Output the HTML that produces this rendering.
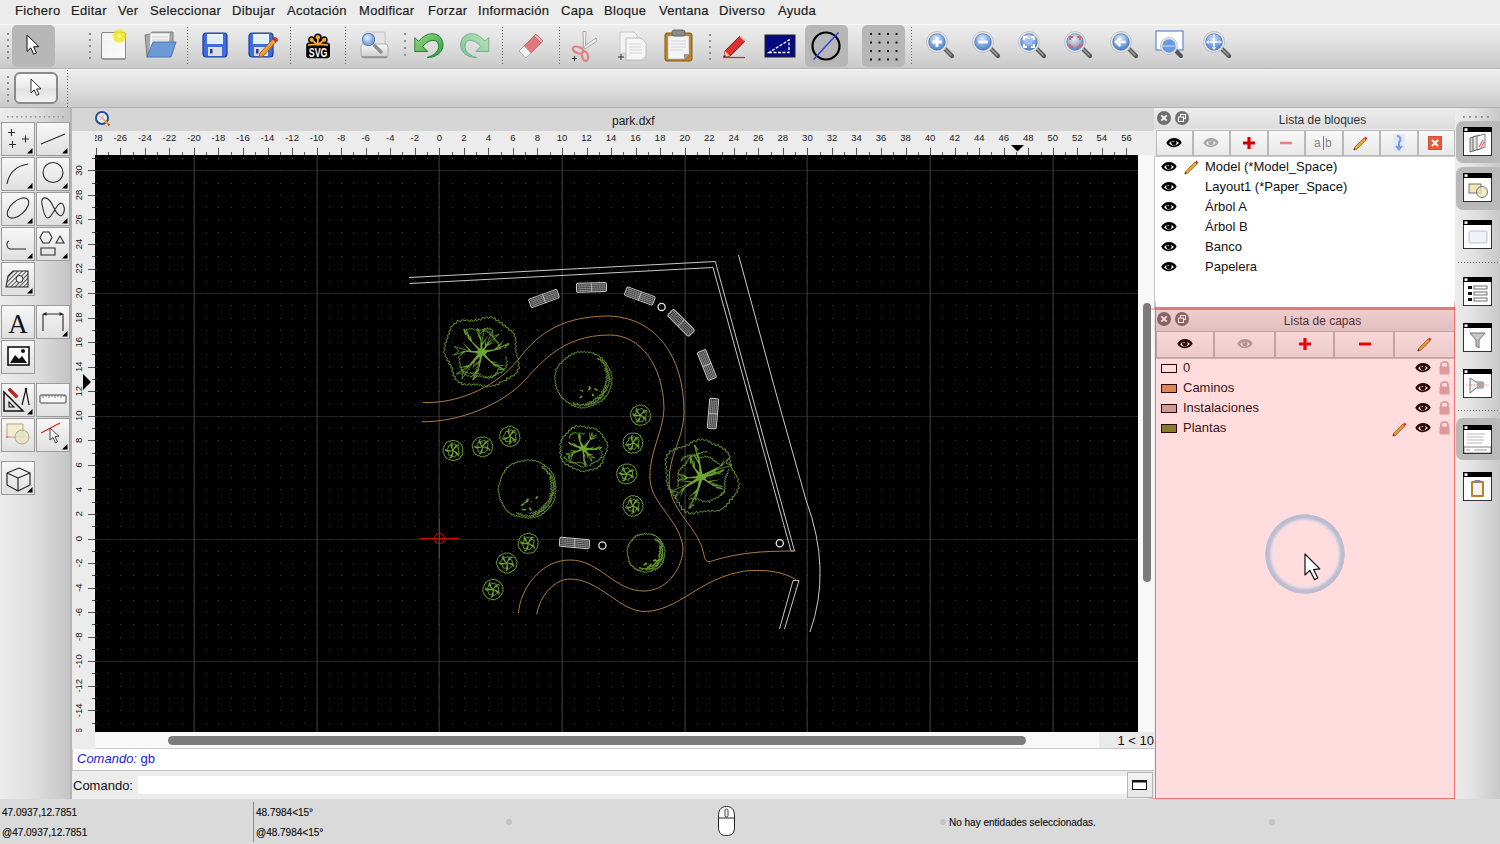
<!DOCTYPE html>
<html><head><meta charset="utf-8"><style>
*{margin:0;padding:0;box-sizing:border-box}
html,body{width:1500px;height:844px;overflow:hidden;background:#dadada;font-family:"Liberation Sans",sans-serif;color:#222}
.a{position:absolute}
svg{position:absolute;overflow:visible}
#menubar{left:0;top:0;width:1500px;height:24px;background:#ececec}
#menubar span{position:absolute;top:3px;font-size:13px;color:#1e1e1e;line-height:16px;-webkit-text-stroke:0.2px #1e1e1e;letter-spacing:0.3px}
#tb1{left:0;top:24px;width:1500px;height:45px;background:linear-gradient(#ededed,#e4e4e4 30%,#d2d2d2 80%,#c9c9c9);border-top:1px solid #f8f8f8;border-bottom:1px solid #b2b2b2}
#tb2{left:0;top:69px;width:1500px;height:39px;background:linear-gradient(#ededed,#e4e4e4 30%,#d2d2d2 80%,#c9c9c9);border-top:1px solid #f6f6f6;border-bottom:1px solid #b2b2b2}
#palette{left:0;top:108px;width:72px;height:691px;background:linear-gradient(90deg,#ececec,#dedede 50%,#c4c4c4);border-right:2px solid #b4b4b4}
.pb{position:absolute;width:34px;height:34px;border:1px solid #9c9c9c;background:linear-gradient(#f7f7f7,#ebebeb 50%,#e0e0e0)}
.tri{position:absolute;width:0;height:0;border-left:8px solid transparent;border-bottom:8px solid #000;right:3px;bottom:3px}
#mdi{left:72px;top:108px;width:1082px;height:691px;background:#ececec}
#mditl{left:72px;top:108px;width:1082px;height:24px;background:#d5d5d5;font-size:12px;line-height:23px;text-align:center;color:#1a1a1a}
#rulerT{left:72px;top:131px;width:1082px;height:24px;background:#ececec}
#rulerL{left:72px;top:131px;width:23px;height:601px;background:#ececec}
#canvas{left:95px;top:155px;width:1043px;height:577px;background:#000;overflow:hidden}
#vscroll{left:1138px;top:155px;width:16px;height:577px;background:#f8f8f8}
#hscroll{left:95px;top:732px;width:1004px;height:17px;background:#f8f8f8;border-bottom:1px solid #c8c8c8}
#ratio{left:1099px;top:732px;width:55px;height:17px;background:#eaeaea;border-bottom:1px solid #c8c8c8;font-size:13px;text-align:right;line-height:17px;color:#111;white-space:nowrap}
#cmdhist{left:72px;top:749px;width:1082px;height:22px;background:#fff;border-bottom:1px solid #c2c2c2;border-left:1px solid #d0d0d0;font-size:13px;line-height:20px;color:#1a1ad8;padding-left:4px}
#cmdrow{left:72px;top:771px;width:1082px;height:28px;background:#ececec;font-size:13px;line-height:27px;color:#111}
#dock{left:1154px;top:108px;width:301px;height:691px;background:#ececec}
#rtb{left:1455px;top:108px;width:45px;height:691px;background:linear-gradient(90deg,#ececec,#e2e2e2 40%,#c8c8c8)}
#status{left:0;top:799px;width:1500px;height:45px;background:#dadada}
.st{position:absolute;font-size:10px;color:#111;line-height:12px;white-space:nowrap;-webkit-text-stroke:0.15px #111}
.dtitle{position:absolute;height:21px;background:linear-gradient(#ededed,#dcdcdc);font-size:12px;line-height:24px;text-align:center;color:#222}
.cbtn{position:absolute;width:14px;height:14px;border-radius:50%;background:#6f6f6f}
.dtb{position:absolute;height:25px;border:1px solid #b9b9b9;background:linear-gradient(#f8f8f8,#e9e9e9)}
.li{position:absolute;font-size:13px;line-height:16px;color:#111;white-space:nowrap}
</style></head><body>
<div id="menubar" class="a">
<span style="left:15px">Fichero</span>
<span style="left:71px">Editar</span>
<span style="left:118px">Ver</span>
<span style="left:150px">Seleccionar</span>
<span style="left:232px">Dibujar</span>
<span style="left:287px">Acotación</span>
<span style="left:359px">Modificar</span>
<span style="left:428px">Forzar</span>
<span style="left:478px">Información</span>
<span style="left:561px">Capa</span>
<span style="left:604px">Bloque</span>
<span style="left:659px">Ventana</span>
<span style="left:719px">Diverso</span>
<span style="left:778px">Ayuda</span>
</div>
<div id="tb1" class="a"></div>
<div id="tb2" class="a"></div>
<svg class="a" style="left:7px;top:33px;" width="2" height="30" viewBox="0 0 2 30"><rect x="0" y="0" width="2" height="2" fill="#8e8e8e"/><rect x="0" y="6" width="2" height="2" fill="#8e8e8e"/><rect x="0" y="12" width="2" height="2" fill="#8e8e8e"/><rect x="0" y="18" width="2" height="2" fill="#8e8e8e"/><rect x="0" y="24" width="2" height="2" fill="#8e8e8e"/></svg>
<div class="a" style="left:12px;top:25px;width:43px;height:42px;border-radius:5px;background:#b7b7b7"></div>
<svg class="a" style="left:27px;top:35px;" width="14" height="22" viewBox="0 0 14 22"><path d="M0 0 L0 16.5 L3.8 12.8 L6.6 19.2 L9.4 18 L6.6 11.8 L11.8 11.6 Z" fill="#fff" stroke="#111" stroke-width="1" stroke-linejoin="round"/></svg>
<svg class="a" style="left:89px;top:33px;" width="2" height="30" viewBox="0 0 2 30"><rect x="0" y="0" width="2" height="2" fill="#8e8e8e"/><rect x="0" y="6" width="2" height="2" fill="#8e8e8e"/><rect x="0" y="12" width="2" height="2" fill="#8e8e8e"/><rect x="0" y="18" width="2" height="2" fill="#8e8e8e"/><rect x="0" y="24" width="2" height="2" fill="#8e8e8e"/></svg>
<svg class="a" style="left:100px;top:30px;" width="30" height="32" viewBox="0 0 30 32">
<defs><radialGradient id="glow"><stop offset="0" stop-color="#fffcc0"/><stop offset="0.3" stop-color="#f4ec30"/><stop offset="0.65" stop-color="#eee420" stop-opacity="0.8"/><stop offset="1" stop-color="#f2ea20" stop-opacity="0"/></radialGradient>
<linearGradient id="paper" x1="0" y1="0" x2="1" y2="1"><stop offset="0" stop-color="#f2f2f2"/><stop offset="1" stop-color="#fafafa"/></linearGradient></defs>
<rect x="1.5" y="2.5" width="24" height="27" rx="1.5" fill="url(#paper)" stroke="#8a8a8a" stroke-width="1"/>
<rect x="2" y="28" width="23" height="2" fill="#9a9a9a"/>
<circle cx="19.5" cy="6" r="8" fill="url(#glow)"/></svg>
<svg class="a" style="left:143px;top:30px;" width="34" height="30" viewBox="0 0 34 30">
<path d="M2 5 L8 4 L9 2 L30 2 L30 20 L4 27 Z" fill="#a8a8a8" stroke="#707070" stroke-width="0.8"/>
<path d="M7 3 L27 3 L26 20 L6 24 Z" fill="#f4f4f4" stroke="#999" stroke-width="0.6"/>
<path d="M9 7 L25 7 M9 10 L25 10 M9 13 L25 13" stroke="#c8c8c8" stroke-width="0.8"/>
<path d="M4 27 L10 12 L33 12 L28 27 Z" fill="#6d9bd8" stroke="#3f6fb0" stroke-width="0.9"/></svg>
<svg class="a" style="left:187px;top:27px;" width="2" height="39" viewBox="0 0 2 39"><rect x="0" y="0" width="1" height="1" fill="#6a6a6a"/><rect x="0" y="3" width="1" height="1" fill="#6a6a6a"/><rect x="0" y="6" width="1" height="1" fill="#6a6a6a"/><rect x="0" y="9" width="1" height="1" fill="#6a6a6a"/><rect x="0" y="12" width="1" height="1" fill="#6a6a6a"/><rect x="0" y="15" width="1" height="1" fill="#6a6a6a"/><rect x="0" y="18" width="1" height="1" fill="#6a6a6a"/><rect x="0" y="21" width="1" height="1" fill="#6a6a6a"/><rect x="0" y="24" width="1" height="1" fill="#6a6a6a"/><rect x="0" y="27" width="1" height="1" fill="#6a6a6a"/><rect x="0" y="30" width="1" height="1" fill="#6a6a6a"/><rect x="0" y="33" width="1" height="1" fill="#6a6a6a"/><rect x="0" y="36" width="1" height="1" fill="#6a6a6a"/></svg>
<svg class="a" style="left:202px;top:32px;" width="27" height="27" viewBox="0 0 27 27"><rect x="1" y="1" width="24" height="24" rx="3" fill="#3f6ee0" stroke="#1f3c9c" stroke-width="1.2"/>
<rect x="5" y="2" width="16" height="10" fill="#e6ecf8"/>
<path d="M6 3 L20 3 L20 11" fill="none" stroke="#ffffff" stroke-width="0.6"/>
<rect x="6" y="15" width="14" height="9" fill="#dcdcdc"/>
<rect x="8" y="17" width="2.5" height="4.5" fill="#1f3c9c"/></svg>
<svg class="a" style="left:248px;top:32px;" width="30" height="27" viewBox="0 0 30 27"><rect x="1" y="1" width="24" height="24" rx="3" fill="#3f6ee0" stroke="#1f3c9c" stroke-width="1.2"/>
<rect x="5" y="2" width="16" height="10" fill="#e6ecf8"/>
<path d="M6 3 L20 3 L20 11" fill="none" stroke="#ffffff" stroke-width="0.6"/>
<rect x="6" y="15" width="14" height="9" fill="#dcdcdc"/>
<rect x="8" y="17" width="2.5" height="4.5" fill="#1f3c9c"/><path d="M12 21 L25 7 L28 10 L15 24 L11 25 Z" fill="#f0a030" stroke="#b05010" stroke-width="0.9"/>
<path d="M25 7 L27 5 L30 8 L28 10 Z" fill="#e03030" stroke="#a01010" stroke-width="0.6"/></svg>
<svg class="a" style="left:290px;top:27px;" width="2" height="39" viewBox="0 0 2 39"><rect x="0" y="0" width="1" height="1" fill="#6a6a6a"/><rect x="0" y="3" width="1" height="1" fill="#6a6a6a"/><rect x="0" y="6" width="1" height="1" fill="#6a6a6a"/><rect x="0" y="9" width="1" height="1" fill="#6a6a6a"/><rect x="0" y="12" width="1" height="1" fill="#6a6a6a"/><rect x="0" y="15" width="1" height="1" fill="#6a6a6a"/><rect x="0" y="18" width="1" height="1" fill="#6a6a6a"/><rect x="0" y="21" width="1" height="1" fill="#6a6a6a"/><rect x="0" y="24" width="1" height="1" fill="#6a6a6a"/><rect x="0" y="27" width="1" height="1" fill="#6a6a6a"/><rect x="0" y="30" width="1" height="1" fill="#6a6a6a"/><rect x="0" y="33" width="1" height="1" fill="#6a6a6a"/><rect x="0" y="36" width="1" height="1" fill="#6a6a6a"/></svg>
<svg class="a" style="left:302px;top:30px;" width="34" height="32" viewBox="0 0 34 32">
<g fill="#000"><circle cx="15.9" cy="7.2" r="3.7"/><circle cx="9.6" cy="9.8" r="3.5"/><circle cx="22.2" cy="9.8" r="3.5"/></g>
<path d="M15.9 14 L15.9 7 M15.9 14 L9.6 9.8 M15.9 14 L22.2 9.8" stroke="#000" stroke-width="4.6"/>
<rect x="4.2" y="12.5" width="23.8" height="15.8" rx="3.2" fill="#000"/>
<g fill="#f6a832"><circle cx="15.9" cy="7.2" r="2.2"/><circle cx="9.6" cy="9.8" r="2.1"/><circle cx="22.2" cy="9.8" r="2.1"/></g>
<path d="M15.9 15 L15.9 7 M15.9 15 L9.6 9.8 M15.9 15 L22.2 9.8" stroke="#f6a832" stroke-width="1.8"/>
<path d="M6 15.3 C 10 14, 22 14, 26 15.3" stroke="#f6a832" stroke-width="1.7" fill="none"/>
<text x="16.1" y="26.6" text-anchor="middle" font-family="Liberation Sans" font-weight="bold" font-size="12.5" fill="#fff" textLength="18.6" lengthAdjust="spacingAndGlyphs">SVG</text></svg>
<svg class="a" style="left:345px;top:27px;" width="2" height="39" viewBox="0 0 2 39"><rect x="0" y="0" width="1" height="1" fill="#6a6a6a"/><rect x="0" y="3" width="1" height="1" fill="#6a6a6a"/><rect x="0" y="6" width="1" height="1" fill="#6a6a6a"/><rect x="0" y="9" width="1" height="1" fill="#6a6a6a"/><rect x="0" y="12" width="1" height="1" fill="#6a6a6a"/><rect x="0" y="15" width="1" height="1" fill="#6a6a6a"/><rect x="0" y="18" width="1" height="1" fill="#6a6a6a"/><rect x="0" y="21" width="1" height="1" fill="#6a6a6a"/><rect x="0" y="24" width="1" height="1" fill="#6a6a6a"/><rect x="0" y="27" width="1" height="1" fill="#6a6a6a"/><rect x="0" y="30" width="1" height="1" fill="#6a6a6a"/><rect x="0" y="33" width="1" height="1" fill="#6a6a6a"/><rect x="0" y="36" width="1" height="1" fill="#6a6a6a"/></svg>
<svg class="a" style="left:359px;top:30px;" width="31" height="31" viewBox="0 0 31 31">
<defs><linearGradient id="prn" x1="0" y1="0" x2="0" y2="1"><stop offset="0" stop-color="#fafafa"/><stop offset="1" stop-color="#c8c8c8"/></linearGradient>
<radialGradient id="lens" cx="0.4" cy="0.35"><stop offset="0" stop-color="#e8f0ff"/><stop offset="1" stop-color="#7fa6dc"/></radialGradient></defs>
<rect x="6" y="2" width="20" height="14" rx="1" fill="#e4e4e4" stroke="#b8b8b8" stroke-width="0.8"/>
<rect x="2" y="14" width="27" height="14" rx="3" fill="url(#prn)" stroke="#a8a8a8" stroke-width="0.9"/>
<path d="M3 27 L28 27" stroke="#8a8a8a" stroke-width="1.5"/>
<path d="M13 13 L22 22" stroke="#8c8c8c" stroke-width="3.2" stroke-linecap="round"/>
<circle cx="9.5" cy="9.5" r="6.2" fill="url(#lens)" stroke="#4a78c0" stroke-width="1.1"/>
<circle cx="9.5" cy="9.5" r="7.3" fill="none" stroke="#eaeaea" stroke-width="1"/></svg>
<svg class="a" style="left:404px;top:33px;" width="2" height="28" viewBox="0 0 2 28"><rect x="0" y="0" width="2" height="2" fill="#909090"/><rect x="0" y="7" width="2" height="2" fill="#909090"/><rect x="0" y="14" width="2" height="2" fill="#909090"/><rect x="0" y="21" width="2" height="2" fill="#909090"/></svg>
<svg class="a" style="left:410px;top:28px;" width="40" height="34" viewBox="0 0 40 34"><defs><linearGradient id="ug1" x1="0" y1="0" x2="1" y2="1"><stop offset="0" stop-color="#9ad880"/><stop offset="1" stop-color="#2e9e44"/></linearGradient></defs><path d="M4.8 9.6 L4.8 23.5 L17.8 23.5 L12.7 18.4 C 16 14.5, 20 12.2, 24 12.4 C 27.5 12.8, 29 16, 28.5 19.5 C 28 24, 23 28, 17 29.5 C 25 29.8, 33 25, 33 17 C 33 9, 27 5.5, 22 5.7 C 16 6, 12 9.5, 8.5 13.3 Z" fill="url(#ug1)" stroke="#177a2c" stroke-width="0.9" stroke-linejoin="round"/></svg>
<svg class="a" style="left:410px;top:28px;" width="85" height="34" viewBox="0 0 85 34"><g transform="translate(83.6,0) scale(-1,1)"><defs><linearGradient id="ug2" x1="0" y1="0" x2="1" y2="1"><stop offset="0" stop-color="#c0e4b8"/><stop offset="1" stop-color="#78c098"/></linearGradient></defs><path d="M4.8 9.6 L4.8 23.5 L17.8 23.5 L12.7 18.4 C 16 14.5, 20 12.2, 24 12.4 C 27.5 12.8, 29 16, 28.5 19.5 C 28 24, 23 28, 17 29.5 C 25 29.8, 33 25, 33 17 C 33 9, 27 5.5, 22 5.7 C 16 6, 12 9.5, 8.5 13.3 Z" fill="url(#ug2)" stroke="#6aae84" stroke-width="0.9" stroke-linejoin="round"/></g></svg>
<svg class="a" style="left:502px;top:27px;" width="2" height="39" viewBox="0 0 2 39"><rect x="0" y="0" width="1" height="1" fill="#6a6a6a"/><rect x="0" y="3" width="1" height="1" fill="#6a6a6a"/><rect x="0" y="6" width="1" height="1" fill="#6a6a6a"/><rect x="0" y="9" width="1" height="1" fill="#6a6a6a"/><rect x="0" y="12" width="1" height="1" fill="#6a6a6a"/><rect x="0" y="15" width="1" height="1" fill="#6a6a6a"/><rect x="0" y="18" width="1" height="1" fill="#6a6a6a"/><rect x="0" y="21" width="1" height="1" fill="#6a6a6a"/><rect x="0" y="24" width="1" height="1" fill="#6a6a6a"/><rect x="0" y="27" width="1" height="1" fill="#6a6a6a"/><rect x="0" y="30" width="1" height="1" fill="#6a6a6a"/><rect x="0" y="33" width="1" height="1" fill="#6a6a6a"/><rect x="0" y="36" width="1" height="1" fill="#6a6a6a"/></svg>
<svg class="a" style="left:516px;top:31px;" width="30" height="30" viewBox="0 0 30 30">
<ellipse cx="15" cy="26.5" rx="11" ry="1.6" fill="#d4d4d4"/>
<path d="M3 20 L18 5 L25 12 L10 27 Z" fill="#e07a7a" stroke="#c06060" stroke-width="0.8"/>
<path d="M3 20 L8 15 L15 22 L10 27 Z" fill="#f4f4f4" stroke="#a8a8a8" stroke-width="0.8"/>
<path d="M18 5 L20 3 L27 10 L25 12 Z" fill="#f0b0b0" stroke="#c06060" stroke-width="0.8"/></svg>
<svg class="a" style="left:559px;top:27px;" width="2" height="39" viewBox="0 0 2 39"><rect x="0" y="0" width="1" height="1" fill="#6a6a6a"/><rect x="0" y="3" width="1" height="1" fill="#6a6a6a"/><rect x="0" y="6" width="1" height="1" fill="#6a6a6a"/><rect x="0" y="9" width="1" height="1" fill="#6a6a6a"/><rect x="0" y="12" width="1" height="1" fill="#6a6a6a"/><rect x="0" y="15" width="1" height="1" fill="#6a6a6a"/><rect x="0" y="18" width="1" height="1" fill="#6a6a6a"/><rect x="0" y="21" width="1" height="1" fill="#6a6a6a"/><rect x="0" y="24" width="1" height="1" fill="#6a6a6a"/><rect x="0" y="27" width="1" height="1" fill="#6a6a6a"/><rect x="0" y="30" width="1" height="1" fill="#6a6a6a"/><rect x="0" y="33" width="1" height="1" fill="#6a6a6a"/><rect x="0" y="36" width="1" height="1" fill="#6a6a6a"/></svg>
<svg class="a" style="left:570px;top:30px;" width="32" height="32" viewBox="0 0 32 32">
<path d="M14 2 L13 18 M26 9 L15 18" stroke="#a8a8a8" stroke-width="0.8" fill="none"/>
<path d="M13 1.5 L16 1.5 L15.5 17 L13.5 18 Z" fill="#f0f0f0" stroke="#9a9a9a" stroke-width="0.8"/>
<path d="M26 8 L27 11 L15 19 L13.5 17 Z" fill="#f0f0f0" stroke="#9a9a9a" stroke-width="0.8"/>
<ellipse cx="8" cy="20" rx="5.5" ry="3" transform="rotate(20 8 20)" fill="none" stroke="#e08585" stroke-width="2.4"/>
<ellipse cx="15" cy="26" rx="3" ry="5" transform="rotate(-15 15 26)" fill="none" stroke="#e08585" stroke-width="2.4"/>
<path d="M2 28.5 L7 28.5 M4.5 26 L4.5 31" stroke="#333" stroke-width="1"/></svg>
<svg class="a" style="left:616px;top:29px;" width="34" height="34" viewBox="0 0 34 34">
<path d="M4 3 L18 3 L21 6 L21 24 L4 24 Z" fill="#f2f2f2" stroke="#c4c4c4" stroke-width="0.9"/>
<path d="M10 9 L25 9 L30 14 L30 31 L10 31 Z" fill="#f6f6f6" stroke="#b8b8b8" stroke-width="0.9"/>
<path d="M13 15 L26 15 M13 18 L26 18 M13 21 L26 21 M13 24 L26 24" stroke="#cfcfcf" stroke-width="0.8"/>
<path d="M25 31 L30 26 L30 31 Z" fill="#d0d0d0"/>
<path d="M2 28 L8 28 M5 25 L5 31" stroke="#333" stroke-width="1"/></svg>
<svg class="a" style="left:663px;top:28px;" width="32" height="34" viewBox="0 0 32 34">
<rect x="2" y="5" width="27" height="28" rx="2" fill="#b8822a" stroke="#8a5a14" stroke-width="1"/>
<path d="M5 8 L26 8 L26 26 L21 31 L5 31 Z" fill="#f4f4f4" stroke="#aaa" stroke-width="0.6"/>
<path d="M21 31 L26 26 L21 26 Z" fill="#9a9a9a"/>
<rect x="9" y="2" width="13" height="6" rx="2" fill="#8a8a8a" stroke="#5a5a5a" stroke-width="0.8"/>
<path d="M8 13 L23 13 M8 16 L23 16 M8 19 L23 19 M8 22 L20 22" stroke="#cfcfcf" stroke-width="0.9"/></svg>
<svg class="a" style="left:709px;top:34px;" width="2" height="30" viewBox="0 0 2 30"><rect x="0" y="0" width="2" height="2" fill="#909090"/><rect x="0" y="6" width="2" height="2" fill="#909090"/><rect x="0" y="12" width="2" height="2" fill="#909090"/><rect x="0" y="18" width="2" height="2" fill="#909090"/><rect x="0" y="24" width="2" height="2" fill="#909090"/></svg>
<svg class="a" style="left:721px;top:32px;" width="28" height="28" viewBox="0 0 28 28">
<path d="M4 19 L19 4 L24 9 L9 24 L3 25 Z" fill="#e03030" stroke="#801010" stroke-width="1"/>
<path d="M19 4 L24 9" stroke="#f0b0b0" stroke-width="1.5"/>
<path d="M4 19 L9 24 L3 25 Z" fill="#f4c890"/>
<path d="M3 25 L4.5 23.5" stroke="#222" stroke-width="1.5"/>
<path d="M2 25.5 L24 25.5" stroke="#e02020" stroke-width="1.2"/></svg>
<svg class="a" style="left:764px;top:34px;" width="32" height="24" viewBox="0 0 32 24">
<rect x="1" y="1" width="30" height="22" fill="#050a80" stroke="#222" stroke-width="1"/>
<path d="M5 18.5 L25 18.5 L25 6 Z" fill="none" stroke="#ffffff" stroke-width="1.3" stroke-dasharray="3 1.5"/></svg>
<div class="a" style="left:805px;top:25px;width:43px;height:42px;border-radius:5px;background:#b7b7b7"></div>
<svg class="a" style="left:808px;top:28px;" width="36" height="36" viewBox="0 0 36 36">
<circle cx="18" cy="18" r="13.5" fill="none" stroke="#000" stroke-width="2.2"/>
<path d="M5.5 31.5 L 30.5 4.5" stroke="#1a3ae8" stroke-width="1.2"/></svg>
<div class="a" style="left:862px;top:25px;width:43px;height:42px;border-radius:5px;background:#b7b7b7"></div>
<svg class="a" style="left:870px;top:33px;" width="30" height="30" viewBox="0 0 30 30"><rect x="0.0" y="0.0" width="2" height="2" fill="#111"/><rect x="0.0" y="8.5" width="2" height="2" fill="#111"/><rect x="0.0" y="17.0" width="2" height="2" fill="#111"/><rect x="0.0" y="25.5" width="2" height="2" fill="#111"/><rect x="8.5" y="0.0" width="2" height="2" fill="#111"/><rect x="8.5" y="8.5" width="2" height="2" fill="#111"/><rect x="8.5" y="17.0" width="2" height="2" fill="#111"/><rect x="8.5" y="25.5" width="2" height="2" fill="#111"/><rect x="17.0" y="0.0" width="2" height="2" fill="#111"/><rect x="17.0" y="8.5" width="2" height="2" fill="#111"/><rect x="17.0" y="17.0" width="2" height="2" fill="#111"/><rect x="17.0" y="25.5" width="2" height="2" fill="#111"/><rect x="25.5" y="0.0" width="2" height="2" fill="#111"/><rect x="25.5" y="8.5" width="2" height="2" fill="#111"/><rect x="25.5" y="17.0" width="2" height="2" fill="#111"/><rect x="25.5" y="25.5" width="2" height="2" fill="#111"/></svg>
<svg class="a" style="left:911px;top:27px;" width="2" height="39" viewBox="0 0 2 39"><rect x="0" y="0" width="1" height="1" fill="#6a6a6a"/><rect x="0" y="3" width="1" height="1" fill="#6a6a6a"/><rect x="0" y="6" width="1" height="1" fill="#6a6a6a"/><rect x="0" y="9" width="1" height="1" fill="#6a6a6a"/><rect x="0" y="12" width="1" height="1" fill="#6a6a6a"/><rect x="0" y="15" width="1" height="1" fill="#6a6a6a"/><rect x="0" y="18" width="1" height="1" fill="#6a6a6a"/><rect x="0" y="21" width="1" height="1" fill="#6a6a6a"/><rect x="0" y="24" width="1" height="1" fill="#6a6a6a"/><rect x="0" y="27" width="1" height="1" fill="#6a6a6a"/><rect x="0" y="30" width="1" height="1" fill="#6a6a6a"/><rect x="0" y="33" width="1" height="1" fill="#6a6a6a"/><rect x="0" y="36" width="1" height="1" fill="#6a6a6a"/></svg>
<svg class="a" style="left:926px;top:31px;" width="32" height="32" viewBox="0 0 32 32">
<defs><radialGradient id="zg937" cx="0.45" cy="0.3" r="0.7"><stop offset="0" stop-color="#e4eefc"/><stop offset="0.55" stop-color="#7eaae6"/><stop offset="1" stop-color="#4a7cc8"/></radialGradient></defs>
<ellipse cx="17" cy="28" rx="11" ry="2" fill="#d0d0d0" opacity="0.6"/>
<path d="M18 17 L26 25" stroke="#555" stroke-width="4.2" stroke-linecap="round"/>
<path d="M18.5 17.5 L25 24" stroke="#a0a0a0" stroke-width="1.6" stroke-linecap="round"/>
<circle cx="11" cy="11" r="10.5" fill="#e8e8e8" stroke="#b8b8b8" stroke-width="0.8"/>
<circle cx="11" cy="11" r="8.3" fill="url(#zg937)" stroke="#3c64a8" stroke-width="0.6"/>
<path d="M11 6 L11 16 M6 11 L16 11" stroke="#fff" stroke-width="2.8"/></svg>
<svg class="a" style="left:972px;top:31px;" width="32" height="32" viewBox="0 0 32 32">
<defs><radialGradient id="zg983" cx="0.45" cy="0.3" r="0.7"><stop offset="0" stop-color="#e4eefc"/><stop offset="0.55" stop-color="#7eaae6"/><stop offset="1" stop-color="#4a7cc8"/></radialGradient></defs>
<ellipse cx="17" cy="28" rx="11" ry="2" fill="#d0d0d0" opacity="0.6"/>
<path d="M18 17 L26 25" stroke="#555" stroke-width="4.2" stroke-linecap="round"/>
<path d="M18.5 17.5 L25 24" stroke="#a0a0a0" stroke-width="1.6" stroke-linecap="round"/>
<circle cx="11" cy="11" r="10.5" fill="#e8e8e8" stroke="#b8b8b8" stroke-width="0.8"/>
<circle cx="11" cy="11" r="8.3" fill="url(#zg983)" stroke="#3c64a8" stroke-width="0.6"/>
<path d="M6 11 L16 11" stroke="#fff" stroke-width="2.8"/></svg>
<svg class="a" style="left:1018px;top:31px;" width="32" height="32" viewBox="0 0 32 32">
<defs><radialGradient id="zg1029" cx="0.45" cy="0.3" r="0.7"><stop offset="0" stop-color="#e4eefc"/><stop offset="0.55" stop-color="#7eaae6"/><stop offset="1" stop-color="#4a7cc8"/></radialGradient></defs>
<ellipse cx="17" cy="28" rx="11" ry="2" fill="#d0d0d0" opacity="0.6"/>
<path d="M18 17 L26 25" stroke="#555" stroke-width="4.2" stroke-linecap="round"/>
<path d="M18.5 17.5 L25 24" stroke="#a0a0a0" stroke-width="1.6" stroke-linecap="round"/>
<circle cx="11" cy="11" r="10.5" fill="#e8e8e8" stroke="#b8b8b8" stroke-width="0.8"/>
<circle cx="11" cy="11" r="8.3" fill="url(#zg1029)" stroke="#3c64a8" stroke-width="0.6"/>
<path d="M6 9 L6 6 L9 6 M13 6 L16 6 L16 9 M16 13 L16 16 L13 16 M9 16 L6 16 L6 13" fill="none" stroke="#fff" stroke-width="2"/><rect x="8" y="8" width="6" height="6" fill="#9ec0f0"/></svg>
<svg class="a" style="left:1064px;top:31px;" width="32" height="32" viewBox="0 0 32 32">
<defs><radialGradient id="zg1075" cx="0.45" cy="0.3" r="0.7"><stop offset="0" stop-color="#e4eefc"/><stop offset="0.55" stop-color="#a8b8d0"/><stop offset="1" stop-color="#4a7cc8"/></radialGradient></defs>
<ellipse cx="17" cy="28" rx="11" ry="2" fill="#d0d0d0" opacity="0.6"/>
<path d="M18 17 L26 25" stroke="#555" stroke-width="4.2" stroke-linecap="round"/>
<path d="M18.5 17.5 L25 24" stroke="#a0a0a0" stroke-width="1.6" stroke-linecap="round"/>
<circle cx="11" cy="11" r="10.5" fill="#e8e8e8" stroke="#b8b8b8" stroke-width="0.8"/>
<circle cx="11" cy="11" r="8.3" fill="url(#zg1075)" stroke="#3c64a8" stroke-width="0.6"/>
<path d="M6 9 L6 6 L9 6 M13 6 L16 6 L16 9 M16 13 L16 16 L13 16 M9 16 L6 16 L6 13" fill="none" stroke="#e06060" stroke-width="2"/></svg>
<svg class="a" style="left:1110px;top:31px;" width="32" height="32" viewBox="0 0 32 32">
<defs><radialGradient id="zg1121" cx="0.45" cy="0.3" r="0.7"><stop offset="0" stop-color="#e4eefc"/><stop offset="0.55" stop-color="#7eaae6"/><stop offset="1" stop-color="#4a7cc8"/></radialGradient></defs>
<ellipse cx="17" cy="28" rx="11" ry="2" fill="#d0d0d0" opacity="0.6"/>
<path d="M18 17 L26 25" stroke="#555" stroke-width="4.2" stroke-linecap="round"/>
<path d="M18.5 17.5 L25 24" stroke="#a0a0a0" stroke-width="1.6" stroke-linecap="round"/>
<circle cx="11" cy="11" r="10.5" fill="#e8e8e8" stroke="#b8b8b8" stroke-width="0.8"/>
<circle cx="11" cy="11" r="8.3" fill="url(#zg1121)" stroke="#3c64a8" stroke-width="0.6"/>
<path d="M16 11 L9 11 M10.5 7 L6 11 L10.5 15" fill="none" stroke="#fff" stroke-width="2.6" stroke-linejoin="miter"/></svg>
<svg class="a" style="left:1155px;top:30px;" width="34" height="34" viewBox="0 0 34 34">
<rect x="1" y="1" width="27" height="19" fill="#fff" stroke="#5a8ad0" stroke-width="1.2"/>
<path d="M19 19 L26 26" stroke="#555" stroke-width="4" stroke-linecap="round"/>
<circle cx="14" cy="16" r="8.5" fill="#e8e8e8" stroke="#b8b8b8" stroke-width="0.8"/>
<circle cx="14" cy="16" r="6.8" fill="#6a9ae0"/>
<path d="M7.5 16 L20.5 16" stroke="#cfe0f8" stroke-width="1"/></svg>
<svg class="a" style="left:1203px;top:31px;" width="32" height="32" viewBox="0 0 32 32">
<defs><radialGradient id="zg1214" cx="0.45" cy="0.3" r="0.7"><stop offset="0" stop-color="#e4eefc"/><stop offset="0.55" stop-color="#7eaae6"/><stop offset="1" stop-color="#4a7cc8"/></radialGradient></defs>
<ellipse cx="17" cy="28" rx="11" ry="2" fill="#d0d0d0" opacity="0.6"/>
<path d="M18 17 L26 25" stroke="#555" stroke-width="4.2" stroke-linecap="round"/>
<path d="M18.5 17.5 L25 24" stroke="#a0a0a0" stroke-width="1.6" stroke-linecap="round"/>
<circle cx="11" cy="11" r="10.5" fill="#e8e8e8" stroke="#b8b8b8" stroke-width="0.8"/>
<circle cx="11" cy="11" r="8.3" fill="url(#zg1214)" stroke="#3c64a8" stroke-width="0.6"/>
<path d="M11 4 L11 18 M4 11 L18 11" stroke="#fff" stroke-width="1.6"/><path d="M11 2.5 L8.5 6 L13.5 6 Z M11 19.5 L8.5 16 L13.5 16 Z M2.5 11 L6 8.5 L6 13.5 Z M19.5 11 L16 8.5 L16 13.5 Z" fill="#fff" stroke="#5a8ad0" stroke-width="0.5"/></svg>
<svg class="a" style="left:7px;top:76px;" width="2" height="30" viewBox="0 0 2 30"><rect x="0" y="0" width="2" height="2" fill="#8e8e8e"/><rect x="0" y="6" width="2" height="2" fill="#8e8e8e"/><rect x="0" y="12" width="2" height="2" fill="#8e8e8e"/><rect x="0" y="18" width="2" height="2" fill="#8e8e8e"/><rect x="0" y="24" width="2" height="2" fill="#8e8e8e"/></svg>
<div class="a" style="left:14px;top:72px;width:44px;height:32px;border-radius:6px;border:2px solid #8a8a8a;background:linear-gradient(#fafafa,#ececec 45%,#e2e2e2 55%,#f2f2f2)"></div>
<svg class="a" style="left:31px;top:79px;" width="14" height="22" viewBox="0 0 14 22"><g transform="scale(0.85)"><path d="M0 0 L0 16.5 L3.8 12.8 L6.6 19.2 L9.4 18 L6.6 11.8 L11.8 11.6 Z" fill="#fff" stroke="#111" stroke-width="1" stroke-linejoin="round"/></g></svg>
<svg class="a" style="left:67px;top:70px;" width="2" height="37" viewBox="0 0 2 37"><rect x="0" y="0" width="1" height="1" fill="#6a6a6a"/><rect x="0" y="3" width="1" height="1" fill="#6a6a6a"/><rect x="0" y="6" width="1" height="1" fill="#6a6a6a"/><rect x="0" y="9" width="1" height="1" fill="#6a6a6a"/><rect x="0" y="12" width="1" height="1" fill="#6a6a6a"/><rect x="0" y="15" width="1" height="1" fill="#6a6a6a"/><rect x="0" y="18" width="1" height="1" fill="#6a6a6a"/><rect x="0" y="21" width="1" height="1" fill="#6a6a6a"/><rect x="0" y="24" width="1" height="1" fill="#6a6a6a"/><rect x="0" y="27" width="1" height="1" fill="#6a6a6a"/><rect x="0" y="30" width="1" height="1" fill="#6a6a6a"/><rect x="0" y="33" width="1" height="1" fill="#6a6a6a"/><rect x="0" y="36" width="1" height="1" fill="#6a6a6a"/></svg>
<div id="palette" class="a"></div>
<svg class="a" style="left:7px;top:116px;" width="60" height="2" viewBox="0 0 60 2"><rect x="0.0" y="0" width="1.6" height="1.6" fill="#9a9a9a"/><rect x="4.6" y="0" width="1.6" height="1.6" fill="#9a9a9a"/><rect x="9.2" y="0" width="1.6" height="1.6" fill="#9a9a9a"/><rect x="13.8" y="0" width="1.6" height="1.6" fill="#9a9a9a"/><rect x="18.4" y="0" width="1.6" height="1.6" fill="#9a9a9a"/><rect x="23.0" y="0" width="1.6" height="1.6" fill="#9a9a9a"/><rect x="27.6" y="0" width="1.6" height="1.6" fill="#9a9a9a"/><rect x="32.2" y="0" width="1.6" height="1.6" fill="#9a9a9a"/><rect x="36.8" y="0" width="1.6" height="1.6" fill="#9a9a9a"/><rect x="41.4" y="0" width="1.6" height="1.6" fill="#9a9a9a"/><rect x="46.0" y="0" width="1.6" height="1.6" fill="#9a9a9a"/><rect x="50.6" y="0" width="1.6" height="1.6" fill="#9a9a9a"/><rect x="55.2" y="0" width="1.6" height="1.6" fill="#9a9a9a"/></svg>
<div class="pb" style="left:1px;top:122px"></div>
<svg class="a" style="left:1px;top:122px;" width="34" height="34" viewBox="0 0 34 34"><path d="M7 10.5 L14 10.5 M10.5 7 L10.5 14 M21 17 L28 17 M24.5 13.5 L24.5 20.5 M8 22.5 L15 22.5 M11.5 19 L11.5 26" fill="none" stroke="#2a2a2a" stroke-width="1.1"/><path d="M31.5 26 L31.5 31.5 L26 31.5 Z" fill="#000"/></svg>
<div class="pb" style="left:36px;top:122px"></div>
<svg class="a" style="left:36px;top:122px;" width="34" height="34" viewBox="0 0 34 34"><path d="M5 22 L29 12" fill="none" stroke="#2a2a2a" stroke-width="1.1"/><path d="M31.5 26 L31.5 31.5 L26 31.5 Z" fill="#000"/></svg>
<div class="pb" style="left:1px;top:157px"></div>
<svg class="a" style="left:1px;top:157px;" width="34" height="34" viewBox="0 0 34 34"><path d="M6 27 C 8 16, 15 9, 27 7" fill="none" stroke="#2a2a2a" stroke-width="1.1"/><path d="M31.5 26 L31.5 31.5 L26 31.5 Z" fill="#000"/></svg>
<div class="pb" style="left:36px;top:157px"></div>
<svg class="a" style="left:36px;top:157px;" width="34" height="34" viewBox="0 0 34 34"><circle cx="17" cy="15.5" r="10" fill="none" stroke="#2a2a2a" stroke-width="1.1"/><path d="M31.5 26 L31.5 31.5 L26 31.5 Z" fill="#000"/></svg>
<div class="pb" style="left:1px;top:192px"></div>
<svg class="a" style="left:1px;top:192px;" width="34" height="34" viewBox="0 0 34 34"><ellipse cx="17" cy="16" rx="13" ry="7" transform="rotate(-42 17 16)" fill="none" stroke="#2a2a2a" stroke-width="1.1"/><path d="M31.5 26 L31.5 31.5 L26 31.5 Z" fill="#000"/></svg>
<div class="pb" style="left:36px;top:192px"></div>
<svg class="a" style="left:36px;top:192px;" width="34" height="34" viewBox="0 0 34 34"><path d="M6 12 C 4 4, 12 3, 17 14 C 21 23, 25 26, 27 22 C 30 17, 27 7, 22 13 C 18 18, 15 26, 12 26 C 9 26, 7 18, 6 12 Z" fill="none" stroke="#2a2a2a" stroke-width="1.1"/><path d="M31.5 26 L31.5 31.5 L26 31.5 Z" fill="#000"/></svg>
<div class="pb" style="left:1px;top:227px"></div>
<svg class="a" style="left:1px;top:227px;" width="34" height="34" viewBox="0 0 34 34"><path d="M8 14 C 5 14, 5 22, 10 22 L 25 22" fill="none" stroke="#2a2a2a" stroke-width="1.1"/><path d="M31.5 26 L31.5 31.5 L26 31.5 Z" fill="#000"/></svg>
<div class="pb" style="left:36px;top:227px"></div>
<svg class="a" style="left:36px;top:227px;" width="34" height="34" viewBox="0 0 34 34"><path d="M7 5 L13 5 L16 10.5 L13 16 L7 16 L4 10.5 Z M20 16 L24 9 L28 16 Z M5 21 L19 21 L19 28 L5 28 Z" fill="none" stroke="#2a2a2a" stroke-width="1.1"/><path d="M31.5 26 L31.5 31.5 L26 31.5 Z" fill="#000"/></svg>
<div class="pb" style="left:1px;top:262px"></div>
<svg class="a" style="left:1px;top:262px;" width="34" height="34" viewBox="0 0 34 34"><defs><pattern id="hp" width="3" height="3" patternUnits="userSpaceOnUse" patternTransform="rotate(45)"><rect width="1" height="3" fill="#555"/></pattern></defs>
<path d="M5 25 L7 14 L12 9 L27 9 L27 25 Z" fill="url(#hp)" stroke="#2a2a2a" stroke-width="1.1"/>
<circle cx="18.5" cy="17" r="3.5" fill="#f0f0f0" stroke="#2a2a2a" stroke-width="1"/><path d="M31.5 26 L31.5 31.5 L26 31.5 Z" fill="#000"/></svg>
<div class="pb" style="left:1px;top:305px"></div>
<svg class="a" style="left:1px;top:305px;" width="34" height="34" viewBox="0 0 34 34"><text x="17" y="28" text-anchor="middle" font-family="Liberation Serif" font-size="27" fill="#111">A</text></svg>
<div class="pb" style="left:36px;top:305px"></div>
<svg class="a" style="left:36px;top:305px;" width="34" height="34" viewBox="0 0 34 34"><path d="M7 9 L7 26 M27 9 L27 26 M7 9 L27 9" fill="none" stroke="#2a2a2a" stroke-width="1.1"/><path d="M7 9 L10.5 7 L10.5 11 Z M27 9 L23.5 7 L23.5 11 Z" fill="#222"/><path d="M31.5 26 L31.5 31.5 L26 31.5 Z" fill="#000"/></svg>
<div class="pb" style="left:1px;top:340px"></div>
<svg class="a" style="left:1px;top:340px;" width="34" height="34" viewBox="0 0 34 34"><rect x="7" y="7" width="21" height="18" fill="#fff" stroke="#111" stroke-width="1.6"/><path d="M9 23 L14 15 L18 19 L21 16 L26 23 Z" fill="#111"/><circle cx="22" cy="11" r="2" fill="#111"/></svg>
<div class="pb" style="left:1px;top:383px"></div>
<svg class="a" style="left:1px;top:383px;" width="34" height="34" viewBox="0 0 34 34"><path d="M3 28 L22 28 L3 9 Z" fill="none" stroke="#111" stroke-width="1.5"/>
<path d="M8 24 L13 24 L8 19 Z" fill="none" stroke="#111" stroke-width="1.1"/>
<path d="M9 5 L17 13 L15 15 L7 7 Z" fill="#d02020" stroke="#700" stroke-width="0.6"/>
<path d="M25 6 L21 22 M25 6 L28 22" stroke="#111" stroke-width="1.2" fill="none"/><circle cx="25" cy="6" r="1.3" fill="#111"/><path d="M31.5 26 L31.5 31.5 L26 31.5 Z" fill="#000"/></svg>
<div class="pb" style="left:36px;top:383px"></div>
<svg class="a" style="left:36px;top:383px;" width="34" height="34" viewBox="0 0 34 34"><rect x="4" y="12" width="26" height="8" rx="1" fill="#fafafa" stroke="#444" stroke-width="1"/><path d="M7 12 L7 15 M10 12 L10 14 M13 12 L13 15 M16 12 L16 14 M19 12 L19 15 M22 12 L22 14 M25 12 L25 15 M28 12 L28 14" stroke="#444" stroke-width="0.7"/></svg>
<div class="pb" style="left:1px;top:418px"></div>
<svg class="a" style="left:1px;top:418px;" width="34" height="34" viewBox="0 0 34 34"><rect x="6" y="6" width="16" height="13" fill="#f2ecd0" stroke="#b0a888" stroke-width="1"/><circle cx="21" cy="19" r="7" fill="#eae3c0" fill-opacity="0.8" stroke="#b0a888" stroke-width="1"/><circle cx="6" cy="19" r="1.3" fill="#f08080"/></svg>
<div class="pb" style="left:36px;top:418px"></div>
<svg class="a" style="left:36px;top:418px;" width="34" height="34" viewBox="0 0 34 34"><path d="M5 15 L24 5" stroke="#e02020" stroke-width="1.3"/><path d="M14 10 L14 22 L17 19.5 L19.5 25 L21.5 24 L19 18.6 L23 18.3 Z" fill="#f4f4f4" stroke="#333" stroke-width="0.9"/><path d="M31.5 26 L31.5 31.5 L26 31.5 Z" fill="#000"/></svg>
<div class="pb" style="left:1px;top:461px"></div>
<svg class="a" style="left:1px;top:461px;" width="34" height="34" viewBox="0 0 34 34"><path d="M6 12 L18 7 L29 12 L29 24 L17 30 L6 24 Z M6 12 L17 17 L29 12 M17 17 L17 30" fill="none" stroke="#2a2a2a" stroke-width="1.2" stroke-linejoin="round"/><path d="M31.5 26 L31.5 31.5 L26 31.5 Z" fill="#000"/></svg>
<div id="mdi" class="a"></div>
<div id="mditl" class="a"><span style="position:absolute;left:540px;top:1.5px">park.dxf</span></div>
<svg class="a" style="left:95px;top:111px;" width="16" height="16" viewBox="0 0 16 16"><circle cx="7" cy="7" r="6" fill="#eef2f8" stroke="#2a4a9a" stroke-width="2"/>
<path d="M4 5 L10 9 M5 9 L9 4" stroke="#c05050" stroke-width="0.6"/>
<path d="M8 8 L13 13" stroke="#f0b020" stroke-width="2"/><path d="M13 13 L14.5 14.5" stroke="#d04040" stroke-width="2"/></svg>
<div id="rulerT" class="a"></div>
<div id="rulerL" class="a"></div>
<svg class="a" style="left:95px;top:131px;overflow:hidden" width="1043" height="24" viewBox="0 0 1043 24"><rect x="1" y="17" width="1" height="7" fill="#555"/><rect x="13" y="21" width="1" height="3" fill="#555"/><rect x="25" y="17" width="1" height="7" fill="#555"/><rect x="38" y="21" width="1" height="3" fill="#555"/><rect x="50" y="17" width="1" height="7" fill="#555"/><rect x="62" y="21" width="1" height="3" fill="#555"/><rect x="74" y="17" width="1" height="7" fill="#555"/><rect x="87" y="21" width="1" height="3" fill="#555"/><rect x="99" y="17" width="1" height="7" fill="#555"/><rect x="111" y="21" width="1" height="3" fill="#555"/><rect x="123" y="17" width="1" height="7" fill="#555"/><rect x="136" y="21" width="1" height="3" fill="#555"/><rect x="148" y="17" width="1" height="7" fill="#555"/><rect x="160" y="21" width="1" height="3" fill="#555"/><rect x="173" y="17" width="1" height="7" fill="#555"/><rect x="185" y="21" width="1" height="3" fill="#555"/><rect x="197" y="17" width="1" height="7" fill="#555"/><rect x="209" y="21" width="1" height="3" fill="#555"/><rect x="222" y="17" width="1" height="7" fill="#555"/><rect x="234" y="21" width="1" height="3" fill="#555"/><rect x="246" y="17" width="1" height="7" fill="#555"/><rect x="258" y="21" width="1" height="3" fill="#555"/><rect x="271" y="17" width="1" height="7" fill="#555"/><rect x="283" y="21" width="1" height="3" fill="#555"/><rect x="295" y="17" width="1" height="7" fill="#555"/><rect x="307" y="21" width="1" height="3" fill="#555"/><rect x="320" y="17" width="1" height="7" fill="#555"/><rect x="332" y="21" width="1" height="3" fill="#555"/><rect x="344" y="17" width="1" height="7" fill="#555"/><rect x="357" y="21" width="1" height="3" fill="#555"/><rect x="369" y="17" width="1" height="7" fill="#555"/><rect x="381" y="21" width="1" height="3" fill="#555"/><rect x="393" y="17" width="1" height="7" fill="#555"/><rect x="406" y="21" width="1" height="3" fill="#555"/><rect x="418" y="17" width="1" height="7" fill="#555"/><rect x="430" y="21" width="1" height="3" fill="#555"/><rect x="442" y="17" width="1" height="7" fill="#555"/><rect x="455" y="21" width="1" height="3" fill="#555"/><rect x="467" y="17" width="1" height="7" fill="#555"/><rect x="479" y="21" width="1" height="3" fill="#555"/><rect x="492" y="17" width="1" height="7" fill="#555"/><rect x="504" y="21" width="1" height="3" fill="#555"/><rect x="516" y="17" width="1" height="7" fill="#555"/><rect x="528" y="21" width="1" height="3" fill="#555"/><rect x="541" y="17" width="1" height="7" fill="#555"/><rect x="553" y="21" width="1" height="3" fill="#555"/><rect x="565" y="17" width="1" height="7" fill="#555"/><rect x="577" y="21" width="1" height="3" fill="#555"/><rect x="590" y="17" width="1" height="7" fill="#555"/><rect x="602" y="21" width="1" height="3" fill="#555"/><rect x="614" y="17" width="1" height="7" fill="#555"/><rect x="627" y="21" width="1" height="3" fill="#555"/><rect x="639" y="17" width="1" height="7" fill="#555"/><rect x="651" y="21" width="1" height="3" fill="#555"/><rect x="663" y="17" width="1" height="7" fill="#555"/><rect x="676" y="21" width="1" height="3" fill="#555"/><rect x="688" y="17" width="1" height="7" fill="#555"/><rect x="700" y="21" width="1" height="3" fill="#555"/><rect x="712" y="17" width="1" height="7" fill="#555"/><rect x="725" y="21" width="1" height="3" fill="#555"/><rect x="737" y="17" width="1" height="7" fill="#555"/><rect x="749" y="21" width="1" height="3" fill="#555"/><rect x="761" y="17" width="1" height="7" fill="#555"/><rect x="774" y="21" width="1" height="3" fill="#555"/><rect x="786" y="17" width="1" height="7" fill="#555"/><rect x="798" y="21" width="1" height="3" fill="#555"/><rect x="811" y="17" width="1" height="7" fill="#555"/><rect x="823" y="21" width="1" height="3" fill="#555"/><rect x="835" y="17" width="1" height="7" fill="#555"/><rect x="847" y="21" width="1" height="3" fill="#555"/><rect x="860" y="17" width="1" height="7" fill="#555"/><rect x="872" y="21" width="1" height="3" fill="#555"/><rect x="884" y="17" width="1" height="7" fill="#555"/><rect x="896" y="21" width="1" height="3" fill="#555"/><rect x="909" y="17" width="1" height="7" fill="#555"/><rect x="921" y="21" width="1" height="3" fill="#555"/><rect x="933" y="17" width="1" height="7" fill="#555"/><rect x="946" y="21" width="1" height="3" fill="#555"/><rect x="958" y="17" width="1" height="7" fill="#555"/><rect x="970" y="21" width="1" height="3" fill="#555"/><rect x="982" y="17" width="1" height="7" fill="#555"/><rect x="995" y="21" width="1" height="3" fill="#555"/><rect x="1007" y="17" width="1" height="7" fill="#555"/><rect x="1019" y="21" width="1" height="3" fill="#555"/><rect x="1031" y="17" width="1" height="7" fill="#555"/><g font-family="Liberation Sans" font-size="9.5" fill="#1a1a1a"><text x="0.74" y="10" text-anchor="middle">-28</text><text x="25.28" y="10" text-anchor="middle">-26</text><text x="49.82" y="10" text-anchor="middle">-24</text><text x="74.36" y="10" text-anchor="middle">-22</text><text x="98.90" y="10" text-anchor="middle">-20</text><text x="123.44" y="10" text-anchor="middle">-18</text><text x="147.98" y="10" text-anchor="middle">-16</text><text x="172.52" y="10" text-anchor="middle">-14</text><text x="197.06" y="10" text-anchor="middle">-12</text><text x="221.60" y="10" text-anchor="middle">-10</text><text x="246.14" y="10" text-anchor="middle">-8</text><text x="270.68" y="10" text-anchor="middle">-6</text><text x="295.22" y="10" text-anchor="middle">-4</text><text x="319.76" y="10" text-anchor="middle">-2</text><text x="344.30" y="10" text-anchor="middle">0</text><text x="368.84" y="10" text-anchor="middle">2</text><text x="393.38" y="10" text-anchor="middle">4</text><text x="417.92" y="10" text-anchor="middle">6</text><text x="442.46" y="10" text-anchor="middle">8</text><text x="467.00" y="10" text-anchor="middle">10</text><text x="491.54" y="10" text-anchor="middle">12</text><text x="516.08" y="10" text-anchor="middle">14</text><text x="540.62" y="10" text-anchor="middle">16</text><text x="565.16" y="10" text-anchor="middle">18</text><text x="589.70" y="10" text-anchor="middle">20</text><text x="614.24" y="10" text-anchor="middle">22</text><text x="638.78" y="10" text-anchor="middle">24</text><text x="663.32" y="10" text-anchor="middle">26</text><text x="687.86" y="10" text-anchor="middle">28</text><text x="712.40" y="10" text-anchor="middle">30</text><text x="736.94" y="10" text-anchor="middle">32</text><text x="761.48" y="10" text-anchor="middle">34</text><text x="786.02" y="10" text-anchor="middle">36</text><text x="810.56" y="10" text-anchor="middle">38</text><text x="835.10" y="10" text-anchor="middle">40</text><text x="859.64" y="10" text-anchor="middle">42</text><text x="884.18" y="10" text-anchor="middle">44</text><text x="908.72" y="10" text-anchor="middle">46</text><text x="933.26" y="10" text-anchor="middle">48</text><text x="957.80" y="10" text-anchor="middle">50</text><text x="982.34" y="10" text-anchor="middle">52</text><text x="1006.88" y="10" text-anchor="middle">54</text><text x="1031.42" y="10" text-anchor="middle">56</text></g></svg>
<svg class="a" style="left:1011px;top:145px;" width="14" height="8" viewBox="0 0 14 8"><path d="M0 0 L13 0 L6.5 6.5 Z" fill="#000"/></svg>
<svg class="a" style="left:72px;top:131px;overflow:hidden" width="23" height="601" viewBox="0 0 23 601"><rect x="16" y="604" width="7" height="1" fill="#555"/><rect x="20" y="592" width="3" height="1" fill="#555"/><rect x="16" y="579" width="7" height="1" fill="#555"/><rect x="20" y="567" width="3" height="1" fill="#555"/><rect x="16" y="555" width="7" height="1" fill="#555"/><rect x="20" y="542" width="3" height="1" fill="#555"/><rect x="16" y="530" width="7" height="1" fill="#555"/><rect x="20" y="518" width="3" height="1" fill="#555"/><rect x="16" y="506" width="7" height="1" fill="#555"/><rect x="20" y="493" width="3" height="1" fill="#555"/><rect x="16" y="481" width="7" height="1" fill="#555"/><rect x="20" y="469" width="3" height="1" fill="#555"/><rect x="16" y="457" width="7" height="1" fill="#555"/><rect x="20" y="444" width="3" height="1" fill="#555"/><rect x="16" y="432" width="7" height="1" fill="#555"/><rect x="20" y="420" width="3" height="1" fill="#555"/><rect x="16" y="408" width="7" height="1" fill="#555"/><rect x="20" y="395" width="3" height="1" fill="#555"/><rect x="16" y="383" width="7" height="1" fill="#555"/><rect x="20" y="371" width="3" height="1" fill="#555"/><rect x="16" y="358" width="7" height="1" fill="#555"/><rect x="20" y="346" width="3" height="1" fill="#555"/><rect x="16" y="334" width="7" height="1" fill="#555"/><rect x="20" y="322" width="3" height="1" fill="#555"/><rect x="16" y="309" width="7" height="1" fill="#555"/><rect x="20" y="297" width="3" height="1" fill="#555"/><rect x="16" y="285" width="7" height="1" fill="#555"/><rect x="20" y="273" width="3" height="1" fill="#555"/><rect x="16" y="260" width="7" height="1" fill="#555"/><rect x="20" y="248" width="3" height="1" fill="#555"/><rect x="16" y="236" width="7" height="1" fill="#555"/><rect x="20" y="223" width="3" height="1" fill="#555"/><rect x="16" y="211" width="7" height="1" fill="#555"/><rect x="20" y="199" width="3" height="1" fill="#555"/><rect x="16" y="187" width="7" height="1" fill="#555"/><rect x="20" y="174" width="3" height="1" fill="#555"/><rect x="16" y="162" width="7" height="1" fill="#555"/><rect x="20" y="150" width="3" height="1" fill="#555"/><rect x="16" y="138" width="7" height="1" fill="#555"/><rect x="20" y="125" width="3" height="1" fill="#555"/><rect x="16" y="113" width="7" height="1" fill="#555"/><rect x="20" y="101" width="3" height="1" fill="#555"/><rect x="16" y="88" width="7" height="1" fill="#555"/><rect x="20" y="76" width="3" height="1" fill="#555"/><rect x="16" y="64" width="7" height="1" fill="#555"/><rect x="20" y="52" width="3" height="1" fill="#555"/><rect x="16" y="39" width="7" height="1" fill="#555"/><rect x="20" y="27" width="3" height="1" fill="#555"/><g font-family="Liberation Sans" font-size="9.5" fill="#1a1a1a" dominant-baseline="middle"><text transform="translate(7,603.82) rotate(-90)" x="0" y="0" text-anchor="middle">-16</text><text transform="translate(7,579.28) rotate(-90)" x="0" y="0" text-anchor="middle">-14</text><text transform="translate(7,554.74) rotate(-90)" x="0" y="0" text-anchor="middle">-12</text><text transform="translate(7,530.20) rotate(-90)" x="0" y="0" text-anchor="middle">-10</text><text transform="translate(7,505.66) rotate(-90)" x="0" y="0" text-anchor="middle">-8</text><text transform="translate(7,481.12) rotate(-90)" x="0" y="0" text-anchor="middle">-6</text><text transform="translate(7,456.58) rotate(-90)" x="0" y="0" text-anchor="middle">-4</text><text transform="translate(7,432.04) rotate(-90)" x="0" y="0" text-anchor="middle">-2</text><text transform="translate(7,407.50) rotate(-90)" x="0" y="0" text-anchor="middle">0</text><text transform="translate(7,382.96) rotate(-90)" x="0" y="0" text-anchor="middle">2</text><text transform="translate(7,358.42) rotate(-90)" x="0" y="0" text-anchor="middle">4</text><text transform="translate(7,333.88) rotate(-90)" x="0" y="0" text-anchor="middle">6</text><text transform="translate(7,309.34) rotate(-90)" x="0" y="0" text-anchor="middle">8</text><text transform="translate(7,284.80) rotate(-90)" x="0" y="0" text-anchor="middle">10</text><text transform="translate(7,260.26) rotate(-90)" x="0" y="0" text-anchor="middle">12</text><text transform="translate(7,235.72) rotate(-90)" x="0" y="0" text-anchor="middle">14</text><text transform="translate(7,211.18) rotate(-90)" x="0" y="0" text-anchor="middle">16</text><text transform="translate(7,186.64) rotate(-90)" x="0" y="0" text-anchor="middle">18</text><text transform="translate(7,162.10) rotate(-90)" x="0" y="0" text-anchor="middle">20</text><text transform="translate(7,137.56) rotate(-90)" x="0" y="0" text-anchor="middle">22</text><text transform="translate(7,113.02) rotate(-90)" x="0" y="0" text-anchor="middle">24</text><text transform="translate(7,88.48) rotate(-90)" x="0" y="0" text-anchor="middle">26</text><text transform="translate(7,63.94) rotate(-90)" x="0" y="0" text-anchor="middle">28</text><text transform="translate(7,39.40) rotate(-90)" x="0" y="0" text-anchor="middle">30</text></g></svg>
<svg class="a" style="left:83px;top:374px;" width="9" height="16" viewBox="0 0 9 16"><path d="M0 0 L8 8 L0 16 Z" fill="#000"/></svg>
<div id="canvas" class="a">
<svg style="left:0;top:0" width="1043" height="577" viewBox="95 155 1043 577"><g transform="translate(95,155)"><rect x="98" y="0" width="1" height="577" fill="#1c1c1c"/><rect x="99" y="0" width="1" height="577" fill="#262626"/><rect x="221" y="0" width="1" height="577" fill="#1c1c1c"/><rect x="222" y="0" width="1" height="577" fill="#262626"/><rect x="343" y="0" width="1" height="577" fill="#1c1c1c"/><rect x="344" y="0" width="1" height="577" fill="#262626"/><rect x="466" y="0" width="1" height="577" fill="#1c1c1c"/><rect x="467" y="0" width="1" height="577" fill="#262626"/><rect x="589" y="0" width="1" height="577" fill="#1c1c1c"/><rect x="590" y="0" width="1" height="577" fill="#262626"/><rect x="711" y="0" width="1" height="577" fill="#1c1c1c"/><rect x="712" y="0" width="1" height="577" fill="#262626"/><rect x="834" y="0" width="1" height="577" fill="#1c1c1c"/><rect x="835" y="0" width="1" height="577" fill="#262626"/><rect x="957" y="0" width="1" height="577" fill="#1c1c1c"/><rect x="958" y="0" width="1" height="577" fill="#262626"/><rect x="0" y="506" width="1043" height="1" fill="#222"/><rect x="0" y="384" width="1043" height="1" fill="#222"/><rect x="0" y="261" width="1043" height="1" fill="#222"/><rect x="0" y="138" width="1043" height="1" fill="#222"/><rect x="0" y="15" width="1043" height="1" fill="#222"/><path d="M1 568h1v1h-1zM1 555h1v1h-1zM1 543h1v1h-1zM1 531h1v1h-1zM1 518h1v1h-1zM1 506h1v1h-1zM1 494h1v1h-1zM1 482h1v1h-1zM1 469h1v1h-1zM1 457h1v1h-1zM1 445h1v1h-1zM1 433h1v1h-1zM1 420h1v1h-1zM1 408h1v1h-1zM1 396h1v1h-1zM1 384h1v1h-1zM1 371h1v1h-1zM1 359h1v1h-1zM1 347h1v1h-1zM1 334h1v1h-1zM1 322h1v1h-1zM1 310h1v1h-1zM1 298h1v1h-1zM1 285h1v1h-1zM1 273h1v1h-1zM1 261h1v1h-1zM1 249h1v1h-1zM1 236h1v1h-1zM1 224h1v1h-1zM1 212h1v1h-1zM1 199h1v1h-1zM1 187h1v1h-1zM1 175h1v1h-1zM1 163h1v1h-1zM1 150h1v1h-1zM1 138h1v1h-1zM1 126h1v1h-1zM1 114h1v1h-1zM1 101h1v1h-1zM1 89h1v1h-1zM1 77h1v1h-1zM1 64h1v1h-1zM1 52h1v1h-1zM1 40h1v1h-1zM1 28h1v1h-1zM1 15h1v1h-1zM1 3h1v1h-1zM13 568h1v1h-1zM13 555h1v1h-1zM13 543h1v1h-1zM13 531h1v1h-1zM13 518h1v1h-1zM13 506h1v1h-1zM13 494h1v1h-1zM13 482h1v1h-1zM13 469h1v1h-1zM13 457h1v1h-1zM13 445h1v1h-1zM13 433h1v1h-1zM13 420h1v1h-1zM13 408h1v1h-1zM13 396h1v1h-1zM13 384h1v1h-1zM13 371h1v1h-1zM13 359h1v1h-1zM13 347h1v1h-1zM13 334h1v1h-1zM13 322h1v1h-1zM13 310h1v1h-1zM13 298h1v1h-1zM13 285h1v1h-1zM13 273h1v1h-1zM13 261h1v1h-1zM13 249h1v1h-1zM13 236h1v1h-1zM13 224h1v1h-1zM13 212h1v1h-1zM13 199h1v1h-1zM13 187h1v1h-1zM13 175h1v1h-1zM13 163h1v1h-1zM13 150h1v1h-1zM13 138h1v1h-1zM13 126h1v1h-1zM13 114h1v1h-1zM13 101h1v1h-1zM13 89h1v1h-1zM13 77h1v1h-1zM13 64h1v1h-1zM13 52h1v1h-1zM13 40h1v1h-1zM13 28h1v1h-1zM13 15h1v1h-1zM13 3h1v1h-1zM25 568h1v1h-1zM25 555h1v1h-1zM25 543h1v1h-1zM25 531h1v1h-1zM25 518h1v1h-1zM25 506h1v1h-1zM25 494h1v1h-1zM25 482h1v1h-1zM25 469h1v1h-1zM25 457h1v1h-1zM25 445h1v1h-1zM25 433h1v1h-1zM25 420h1v1h-1zM25 408h1v1h-1zM25 396h1v1h-1zM25 384h1v1h-1zM25 371h1v1h-1zM25 359h1v1h-1zM25 347h1v1h-1zM25 334h1v1h-1zM25 322h1v1h-1zM25 310h1v1h-1zM25 298h1v1h-1zM25 285h1v1h-1zM25 273h1v1h-1zM25 261h1v1h-1zM25 249h1v1h-1zM25 236h1v1h-1zM25 224h1v1h-1zM25 212h1v1h-1zM25 199h1v1h-1zM25 187h1v1h-1zM25 175h1v1h-1zM25 163h1v1h-1zM25 150h1v1h-1zM25 138h1v1h-1zM25 126h1v1h-1zM25 114h1v1h-1zM25 101h1v1h-1zM25 89h1v1h-1zM25 77h1v1h-1zM25 64h1v1h-1zM25 52h1v1h-1zM25 40h1v1h-1zM25 28h1v1h-1zM25 15h1v1h-1zM25 3h1v1h-1zM38 568h1v1h-1zM38 555h1v1h-1zM38 543h1v1h-1zM38 531h1v1h-1zM38 518h1v1h-1zM38 506h1v1h-1zM38 494h1v1h-1zM38 482h1v1h-1zM38 469h1v1h-1zM38 457h1v1h-1zM38 445h1v1h-1zM38 433h1v1h-1zM38 420h1v1h-1zM38 408h1v1h-1zM38 396h1v1h-1zM38 384h1v1h-1zM38 371h1v1h-1zM38 359h1v1h-1zM38 347h1v1h-1zM38 334h1v1h-1zM38 322h1v1h-1zM38 310h1v1h-1zM38 298h1v1h-1zM38 285h1v1h-1zM38 273h1v1h-1zM38 261h1v1h-1zM38 249h1v1h-1zM38 236h1v1h-1zM38 224h1v1h-1zM38 212h1v1h-1zM38 199h1v1h-1zM38 187h1v1h-1zM38 175h1v1h-1zM38 163h1v1h-1zM38 150h1v1h-1zM38 138h1v1h-1zM38 126h1v1h-1zM38 114h1v1h-1zM38 101h1v1h-1zM38 89h1v1h-1zM38 77h1v1h-1zM38 64h1v1h-1zM38 52h1v1h-1zM38 40h1v1h-1zM38 28h1v1h-1zM38 15h1v1h-1zM38 3h1v1h-1zM50 568h1v1h-1zM50 555h1v1h-1zM50 543h1v1h-1zM50 531h1v1h-1zM50 518h1v1h-1zM50 506h1v1h-1zM50 494h1v1h-1zM50 482h1v1h-1zM50 469h1v1h-1zM50 457h1v1h-1zM50 445h1v1h-1zM50 433h1v1h-1zM50 420h1v1h-1zM50 408h1v1h-1zM50 396h1v1h-1zM50 384h1v1h-1zM50 371h1v1h-1zM50 359h1v1h-1zM50 347h1v1h-1zM50 334h1v1h-1zM50 322h1v1h-1zM50 310h1v1h-1zM50 298h1v1h-1zM50 285h1v1h-1zM50 273h1v1h-1zM50 261h1v1h-1zM50 249h1v1h-1zM50 236h1v1h-1zM50 224h1v1h-1zM50 212h1v1h-1zM50 199h1v1h-1zM50 187h1v1h-1zM50 175h1v1h-1zM50 163h1v1h-1zM50 150h1v1h-1zM50 138h1v1h-1zM50 126h1v1h-1zM50 114h1v1h-1zM50 101h1v1h-1zM50 89h1v1h-1zM50 77h1v1h-1zM50 64h1v1h-1zM50 52h1v1h-1zM50 40h1v1h-1zM50 28h1v1h-1zM50 15h1v1h-1zM50 3h1v1h-1zM62 568h1v1h-1zM62 555h1v1h-1zM62 543h1v1h-1zM62 531h1v1h-1zM62 518h1v1h-1zM62 506h1v1h-1zM62 494h1v1h-1zM62 482h1v1h-1zM62 469h1v1h-1zM62 457h1v1h-1zM62 445h1v1h-1zM62 433h1v1h-1zM62 420h1v1h-1zM62 408h1v1h-1zM62 396h1v1h-1zM62 384h1v1h-1zM62 371h1v1h-1zM62 359h1v1h-1zM62 347h1v1h-1zM62 334h1v1h-1zM62 322h1v1h-1zM62 310h1v1h-1zM62 298h1v1h-1zM62 285h1v1h-1zM62 273h1v1h-1zM62 261h1v1h-1zM62 249h1v1h-1zM62 236h1v1h-1zM62 224h1v1h-1zM62 212h1v1h-1zM62 199h1v1h-1zM62 187h1v1h-1zM62 175h1v1h-1zM62 163h1v1h-1zM62 150h1v1h-1zM62 138h1v1h-1zM62 126h1v1h-1zM62 114h1v1h-1zM62 101h1v1h-1zM62 89h1v1h-1zM62 77h1v1h-1zM62 64h1v1h-1zM62 52h1v1h-1zM62 40h1v1h-1zM62 28h1v1h-1zM62 15h1v1h-1zM62 3h1v1h-1zM74 568h1v1h-1zM74 555h1v1h-1zM74 543h1v1h-1zM74 531h1v1h-1zM74 518h1v1h-1zM74 506h1v1h-1zM74 494h1v1h-1zM74 482h1v1h-1zM74 469h1v1h-1zM74 457h1v1h-1zM74 445h1v1h-1zM74 433h1v1h-1zM74 420h1v1h-1zM74 408h1v1h-1zM74 396h1v1h-1zM74 384h1v1h-1zM74 371h1v1h-1zM74 359h1v1h-1zM74 347h1v1h-1zM74 334h1v1h-1zM74 322h1v1h-1zM74 310h1v1h-1zM74 298h1v1h-1zM74 285h1v1h-1zM74 273h1v1h-1zM74 261h1v1h-1zM74 249h1v1h-1zM74 236h1v1h-1zM74 224h1v1h-1zM74 212h1v1h-1zM74 199h1v1h-1zM74 187h1v1h-1zM74 175h1v1h-1zM74 163h1v1h-1zM74 150h1v1h-1zM74 138h1v1h-1zM74 126h1v1h-1zM74 114h1v1h-1zM74 101h1v1h-1zM74 89h1v1h-1zM74 77h1v1h-1zM74 64h1v1h-1zM74 52h1v1h-1zM74 40h1v1h-1zM74 28h1v1h-1zM74 15h1v1h-1zM74 3h1v1h-1zM87 568h1v1h-1zM87 555h1v1h-1zM87 543h1v1h-1zM87 531h1v1h-1zM87 518h1v1h-1zM87 506h1v1h-1zM87 494h1v1h-1zM87 482h1v1h-1zM87 469h1v1h-1zM87 457h1v1h-1zM87 445h1v1h-1zM87 433h1v1h-1zM87 420h1v1h-1zM87 408h1v1h-1zM87 396h1v1h-1zM87 384h1v1h-1zM87 371h1v1h-1zM87 359h1v1h-1zM87 347h1v1h-1zM87 334h1v1h-1zM87 322h1v1h-1zM87 310h1v1h-1zM87 298h1v1h-1zM87 285h1v1h-1zM87 273h1v1h-1zM87 261h1v1h-1zM87 249h1v1h-1zM87 236h1v1h-1zM87 224h1v1h-1zM87 212h1v1h-1zM87 199h1v1h-1zM87 187h1v1h-1zM87 175h1v1h-1zM87 163h1v1h-1zM87 150h1v1h-1zM87 138h1v1h-1zM87 126h1v1h-1zM87 114h1v1h-1zM87 101h1v1h-1zM87 89h1v1h-1zM87 77h1v1h-1zM87 64h1v1h-1zM87 52h1v1h-1zM87 40h1v1h-1zM87 28h1v1h-1zM87 15h1v1h-1zM87 3h1v1h-1zM99 568h1v1h-1zM99 555h1v1h-1zM99 543h1v1h-1zM99 531h1v1h-1zM99 518h1v1h-1zM99 506h1v1h-1zM99 494h1v1h-1zM99 482h1v1h-1zM99 469h1v1h-1zM99 457h1v1h-1zM99 445h1v1h-1zM99 433h1v1h-1zM99 420h1v1h-1zM99 408h1v1h-1zM99 396h1v1h-1zM99 384h1v1h-1zM99 371h1v1h-1zM99 359h1v1h-1zM99 347h1v1h-1zM99 334h1v1h-1zM99 322h1v1h-1zM99 310h1v1h-1zM99 298h1v1h-1zM99 285h1v1h-1zM99 273h1v1h-1zM99 261h1v1h-1zM99 249h1v1h-1zM99 236h1v1h-1zM99 224h1v1h-1zM99 212h1v1h-1zM99 199h1v1h-1zM99 187h1v1h-1zM99 175h1v1h-1zM99 163h1v1h-1zM99 150h1v1h-1zM99 138h1v1h-1zM99 126h1v1h-1zM99 114h1v1h-1zM99 101h1v1h-1zM99 89h1v1h-1zM99 77h1v1h-1zM99 64h1v1h-1zM99 52h1v1h-1zM99 40h1v1h-1zM99 28h1v1h-1zM99 15h1v1h-1zM99 3h1v1h-1zM111 568h1v1h-1zM111 555h1v1h-1zM111 543h1v1h-1zM111 531h1v1h-1zM111 518h1v1h-1zM111 506h1v1h-1zM111 494h1v1h-1zM111 482h1v1h-1zM111 469h1v1h-1zM111 457h1v1h-1zM111 445h1v1h-1zM111 433h1v1h-1zM111 420h1v1h-1zM111 408h1v1h-1zM111 396h1v1h-1zM111 384h1v1h-1zM111 371h1v1h-1zM111 359h1v1h-1zM111 347h1v1h-1zM111 334h1v1h-1zM111 322h1v1h-1zM111 310h1v1h-1zM111 298h1v1h-1zM111 285h1v1h-1zM111 273h1v1h-1zM111 261h1v1h-1zM111 249h1v1h-1zM111 236h1v1h-1zM111 224h1v1h-1zM111 212h1v1h-1zM111 199h1v1h-1zM111 187h1v1h-1zM111 175h1v1h-1zM111 163h1v1h-1zM111 150h1v1h-1zM111 138h1v1h-1zM111 126h1v1h-1zM111 114h1v1h-1zM111 101h1v1h-1zM111 89h1v1h-1zM111 77h1v1h-1zM111 64h1v1h-1zM111 52h1v1h-1zM111 40h1v1h-1zM111 28h1v1h-1zM111 15h1v1h-1zM111 3h1v1h-1zM123 568h1v1h-1zM123 555h1v1h-1zM123 543h1v1h-1zM123 531h1v1h-1zM123 518h1v1h-1zM123 506h1v1h-1zM123 494h1v1h-1zM123 482h1v1h-1zM123 469h1v1h-1zM123 457h1v1h-1zM123 445h1v1h-1zM123 433h1v1h-1zM123 420h1v1h-1zM123 408h1v1h-1zM123 396h1v1h-1zM123 384h1v1h-1zM123 371h1v1h-1zM123 359h1v1h-1zM123 347h1v1h-1zM123 334h1v1h-1zM123 322h1v1h-1zM123 310h1v1h-1zM123 298h1v1h-1zM123 285h1v1h-1zM123 273h1v1h-1zM123 261h1v1h-1zM123 249h1v1h-1zM123 236h1v1h-1zM123 224h1v1h-1zM123 212h1v1h-1zM123 199h1v1h-1zM123 187h1v1h-1zM123 175h1v1h-1zM123 163h1v1h-1zM123 150h1v1h-1zM123 138h1v1h-1zM123 126h1v1h-1zM123 114h1v1h-1zM123 101h1v1h-1zM123 89h1v1h-1zM123 77h1v1h-1zM123 64h1v1h-1zM123 52h1v1h-1zM123 40h1v1h-1zM123 28h1v1h-1zM123 15h1v1h-1zM123 3h1v1h-1zM136 568h1v1h-1zM136 555h1v1h-1zM136 543h1v1h-1zM136 531h1v1h-1zM136 518h1v1h-1zM136 506h1v1h-1zM136 494h1v1h-1zM136 482h1v1h-1zM136 469h1v1h-1zM136 457h1v1h-1zM136 445h1v1h-1zM136 433h1v1h-1zM136 420h1v1h-1zM136 408h1v1h-1zM136 396h1v1h-1zM136 384h1v1h-1zM136 371h1v1h-1zM136 359h1v1h-1zM136 347h1v1h-1zM136 334h1v1h-1zM136 322h1v1h-1zM136 310h1v1h-1zM136 298h1v1h-1zM136 285h1v1h-1zM136 273h1v1h-1zM136 261h1v1h-1zM136 249h1v1h-1zM136 236h1v1h-1zM136 224h1v1h-1zM136 212h1v1h-1zM136 199h1v1h-1zM136 187h1v1h-1zM136 175h1v1h-1zM136 163h1v1h-1zM136 150h1v1h-1zM136 138h1v1h-1zM136 126h1v1h-1zM136 114h1v1h-1zM136 101h1v1h-1zM136 89h1v1h-1zM136 77h1v1h-1zM136 64h1v1h-1zM136 52h1v1h-1zM136 40h1v1h-1zM136 28h1v1h-1zM136 15h1v1h-1zM136 3h1v1h-1zM148 568h1v1h-1zM148 555h1v1h-1zM148 543h1v1h-1zM148 531h1v1h-1zM148 518h1v1h-1zM148 506h1v1h-1zM148 494h1v1h-1zM148 482h1v1h-1zM148 469h1v1h-1zM148 457h1v1h-1zM148 445h1v1h-1zM148 433h1v1h-1zM148 420h1v1h-1zM148 408h1v1h-1zM148 396h1v1h-1zM148 384h1v1h-1zM148 371h1v1h-1zM148 359h1v1h-1zM148 347h1v1h-1zM148 334h1v1h-1zM148 322h1v1h-1zM148 310h1v1h-1zM148 298h1v1h-1zM148 285h1v1h-1zM148 273h1v1h-1zM148 261h1v1h-1zM148 249h1v1h-1zM148 236h1v1h-1zM148 224h1v1h-1zM148 212h1v1h-1zM148 199h1v1h-1zM148 187h1v1h-1zM148 175h1v1h-1zM148 163h1v1h-1zM148 150h1v1h-1zM148 138h1v1h-1zM148 126h1v1h-1zM148 114h1v1h-1zM148 101h1v1h-1zM148 89h1v1h-1zM148 77h1v1h-1zM148 64h1v1h-1zM148 52h1v1h-1zM148 40h1v1h-1zM148 28h1v1h-1zM148 15h1v1h-1zM148 3h1v1h-1zM160 568h1v1h-1zM160 555h1v1h-1zM160 543h1v1h-1zM160 531h1v1h-1zM160 518h1v1h-1zM160 506h1v1h-1zM160 494h1v1h-1zM160 482h1v1h-1zM160 469h1v1h-1zM160 457h1v1h-1zM160 445h1v1h-1zM160 433h1v1h-1zM160 420h1v1h-1zM160 408h1v1h-1zM160 396h1v1h-1zM160 384h1v1h-1zM160 371h1v1h-1zM160 359h1v1h-1zM160 347h1v1h-1zM160 334h1v1h-1zM160 322h1v1h-1zM160 310h1v1h-1zM160 298h1v1h-1zM160 285h1v1h-1zM160 273h1v1h-1zM160 261h1v1h-1zM160 249h1v1h-1zM160 236h1v1h-1zM160 224h1v1h-1zM160 212h1v1h-1zM160 199h1v1h-1zM160 187h1v1h-1zM160 175h1v1h-1zM160 163h1v1h-1zM160 150h1v1h-1zM160 138h1v1h-1zM160 126h1v1h-1zM160 114h1v1h-1zM160 101h1v1h-1zM160 89h1v1h-1zM160 77h1v1h-1zM160 64h1v1h-1zM160 52h1v1h-1zM160 40h1v1h-1zM160 28h1v1h-1zM160 15h1v1h-1zM160 3h1v1h-1zM173 568h1v1h-1zM173 555h1v1h-1zM173 543h1v1h-1zM173 531h1v1h-1zM173 518h1v1h-1zM173 506h1v1h-1zM173 494h1v1h-1zM173 482h1v1h-1zM173 469h1v1h-1zM173 457h1v1h-1zM173 445h1v1h-1zM173 433h1v1h-1zM173 420h1v1h-1zM173 408h1v1h-1zM173 396h1v1h-1zM173 384h1v1h-1zM173 371h1v1h-1zM173 359h1v1h-1zM173 347h1v1h-1zM173 334h1v1h-1zM173 322h1v1h-1zM173 310h1v1h-1zM173 298h1v1h-1zM173 285h1v1h-1zM173 273h1v1h-1zM173 261h1v1h-1zM173 249h1v1h-1zM173 236h1v1h-1zM173 224h1v1h-1zM173 212h1v1h-1zM173 199h1v1h-1zM173 187h1v1h-1zM173 175h1v1h-1zM173 163h1v1h-1zM173 150h1v1h-1zM173 138h1v1h-1zM173 126h1v1h-1zM173 114h1v1h-1zM173 101h1v1h-1zM173 89h1v1h-1zM173 77h1v1h-1zM173 64h1v1h-1zM173 52h1v1h-1zM173 40h1v1h-1zM173 28h1v1h-1zM173 15h1v1h-1zM173 3h1v1h-1zM185 568h1v1h-1zM185 555h1v1h-1zM185 543h1v1h-1zM185 531h1v1h-1zM185 518h1v1h-1zM185 506h1v1h-1zM185 494h1v1h-1zM185 482h1v1h-1zM185 469h1v1h-1zM185 457h1v1h-1zM185 445h1v1h-1zM185 433h1v1h-1zM185 420h1v1h-1zM185 408h1v1h-1zM185 396h1v1h-1zM185 384h1v1h-1zM185 371h1v1h-1zM185 359h1v1h-1zM185 347h1v1h-1zM185 334h1v1h-1zM185 322h1v1h-1zM185 310h1v1h-1zM185 298h1v1h-1zM185 285h1v1h-1zM185 273h1v1h-1zM185 261h1v1h-1zM185 249h1v1h-1zM185 236h1v1h-1zM185 224h1v1h-1zM185 212h1v1h-1zM185 199h1v1h-1zM185 187h1v1h-1zM185 175h1v1h-1zM185 163h1v1h-1zM185 150h1v1h-1zM185 138h1v1h-1zM185 126h1v1h-1zM185 114h1v1h-1zM185 101h1v1h-1zM185 89h1v1h-1zM185 77h1v1h-1zM185 64h1v1h-1zM185 52h1v1h-1zM185 40h1v1h-1zM185 28h1v1h-1zM185 15h1v1h-1zM185 3h1v1h-1zM197 568h1v1h-1zM197 555h1v1h-1zM197 543h1v1h-1zM197 531h1v1h-1zM197 518h1v1h-1zM197 506h1v1h-1zM197 494h1v1h-1zM197 482h1v1h-1zM197 469h1v1h-1zM197 457h1v1h-1zM197 445h1v1h-1zM197 433h1v1h-1zM197 420h1v1h-1zM197 408h1v1h-1zM197 396h1v1h-1zM197 384h1v1h-1zM197 371h1v1h-1zM197 359h1v1h-1zM197 347h1v1h-1zM197 334h1v1h-1zM197 322h1v1h-1zM197 310h1v1h-1zM197 298h1v1h-1zM197 285h1v1h-1zM197 273h1v1h-1zM197 261h1v1h-1zM197 249h1v1h-1zM197 236h1v1h-1zM197 224h1v1h-1zM197 212h1v1h-1zM197 199h1v1h-1zM197 187h1v1h-1zM197 175h1v1h-1zM197 163h1v1h-1zM197 150h1v1h-1zM197 138h1v1h-1zM197 126h1v1h-1zM197 114h1v1h-1zM197 101h1v1h-1zM197 89h1v1h-1zM197 77h1v1h-1zM197 64h1v1h-1zM197 52h1v1h-1zM197 40h1v1h-1zM197 28h1v1h-1zM197 15h1v1h-1zM197 3h1v1h-1zM209 568h1v1h-1zM209 555h1v1h-1zM209 543h1v1h-1zM209 531h1v1h-1zM209 518h1v1h-1zM209 506h1v1h-1zM209 494h1v1h-1zM209 482h1v1h-1zM209 469h1v1h-1zM209 457h1v1h-1zM209 445h1v1h-1zM209 433h1v1h-1zM209 420h1v1h-1zM209 408h1v1h-1zM209 396h1v1h-1zM209 384h1v1h-1zM209 371h1v1h-1zM209 359h1v1h-1zM209 347h1v1h-1zM209 334h1v1h-1zM209 322h1v1h-1zM209 310h1v1h-1zM209 298h1v1h-1zM209 285h1v1h-1zM209 273h1v1h-1zM209 261h1v1h-1zM209 249h1v1h-1zM209 236h1v1h-1zM209 224h1v1h-1zM209 212h1v1h-1zM209 199h1v1h-1zM209 187h1v1h-1zM209 175h1v1h-1zM209 163h1v1h-1zM209 150h1v1h-1zM209 138h1v1h-1zM209 126h1v1h-1zM209 114h1v1h-1zM209 101h1v1h-1zM209 89h1v1h-1zM209 77h1v1h-1zM209 64h1v1h-1zM209 52h1v1h-1zM209 40h1v1h-1zM209 28h1v1h-1zM209 15h1v1h-1zM209 3h1v1h-1zM222 568h1v1h-1zM222 555h1v1h-1zM222 543h1v1h-1zM222 531h1v1h-1zM222 518h1v1h-1zM222 506h1v1h-1zM222 494h1v1h-1zM222 482h1v1h-1zM222 469h1v1h-1zM222 457h1v1h-1zM222 445h1v1h-1zM222 433h1v1h-1zM222 420h1v1h-1zM222 408h1v1h-1zM222 396h1v1h-1zM222 384h1v1h-1zM222 371h1v1h-1zM222 359h1v1h-1zM222 347h1v1h-1zM222 334h1v1h-1zM222 322h1v1h-1zM222 310h1v1h-1zM222 298h1v1h-1zM222 285h1v1h-1zM222 273h1v1h-1zM222 261h1v1h-1zM222 249h1v1h-1zM222 236h1v1h-1zM222 224h1v1h-1zM222 212h1v1h-1zM222 199h1v1h-1zM222 187h1v1h-1zM222 175h1v1h-1zM222 163h1v1h-1zM222 150h1v1h-1zM222 138h1v1h-1zM222 126h1v1h-1zM222 114h1v1h-1zM222 101h1v1h-1zM222 89h1v1h-1zM222 77h1v1h-1zM222 64h1v1h-1zM222 52h1v1h-1zM222 40h1v1h-1zM222 28h1v1h-1zM222 15h1v1h-1zM222 3h1v1h-1zM234 568h1v1h-1zM234 555h1v1h-1zM234 543h1v1h-1zM234 531h1v1h-1zM234 518h1v1h-1zM234 506h1v1h-1zM234 494h1v1h-1zM234 482h1v1h-1zM234 469h1v1h-1zM234 457h1v1h-1zM234 445h1v1h-1zM234 433h1v1h-1zM234 420h1v1h-1zM234 408h1v1h-1zM234 396h1v1h-1zM234 384h1v1h-1zM234 371h1v1h-1zM234 359h1v1h-1zM234 347h1v1h-1zM234 334h1v1h-1zM234 322h1v1h-1zM234 310h1v1h-1zM234 298h1v1h-1zM234 285h1v1h-1zM234 273h1v1h-1zM234 261h1v1h-1zM234 249h1v1h-1zM234 236h1v1h-1zM234 224h1v1h-1zM234 212h1v1h-1zM234 199h1v1h-1zM234 187h1v1h-1zM234 175h1v1h-1zM234 163h1v1h-1zM234 150h1v1h-1zM234 138h1v1h-1zM234 126h1v1h-1zM234 114h1v1h-1zM234 101h1v1h-1zM234 89h1v1h-1zM234 77h1v1h-1zM234 64h1v1h-1zM234 52h1v1h-1zM234 40h1v1h-1zM234 28h1v1h-1zM234 15h1v1h-1zM234 3h1v1h-1zM246 568h1v1h-1zM246 555h1v1h-1zM246 543h1v1h-1zM246 531h1v1h-1zM246 518h1v1h-1zM246 506h1v1h-1zM246 494h1v1h-1zM246 482h1v1h-1zM246 469h1v1h-1zM246 457h1v1h-1zM246 445h1v1h-1zM246 433h1v1h-1zM246 420h1v1h-1zM246 408h1v1h-1zM246 396h1v1h-1zM246 384h1v1h-1zM246 371h1v1h-1zM246 359h1v1h-1zM246 347h1v1h-1zM246 334h1v1h-1zM246 322h1v1h-1zM246 310h1v1h-1zM246 298h1v1h-1zM246 285h1v1h-1zM246 273h1v1h-1zM246 261h1v1h-1zM246 249h1v1h-1zM246 236h1v1h-1zM246 224h1v1h-1zM246 212h1v1h-1zM246 199h1v1h-1zM246 187h1v1h-1zM246 175h1v1h-1zM246 163h1v1h-1zM246 150h1v1h-1zM246 138h1v1h-1zM246 126h1v1h-1zM246 114h1v1h-1zM246 101h1v1h-1zM246 89h1v1h-1zM246 77h1v1h-1zM246 64h1v1h-1zM246 52h1v1h-1zM246 40h1v1h-1zM246 28h1v1h-1zM246 15h1v1h-1zM246 3h1v1h-1zM258 568h1v1h-1zM258 555h1v1h-1zM258 543h1v1h-1zM258 531h1v1h-1zM258 518h1v1h-1zM258 506h1v1h-1zM258 494h1v1h-1zM258 482h1v1h-1zM258 469h1v1h-1zM258 457h1v1h-1zM258 445h1v1h-1zM258 433h1v1h-1zM258 420h1v1h-1zM258 408h1v1h-1zM258 396h1v1h-1zM258 384h1v1h-1zM258 371h1v1h-1zM258 359h1v1h-1zM258 347h1v1h-1zM258 334h1v1h-1zM258 322h1v1h-1zM258 310h1v1h-1zM258 298h1v1h-1zM258 285h1v1h-1zM258 273h1v1h-1zM258 261h1v1h-1zM258 249h1v1h-1zM258 236h1v1h-1zM258 224h1v1h-1zM258 212h1v1h-1zM258 199h1v1h-1zM258 187h1v1h-1zM258 175h1v1h-1zM258 163h1v1h-1zM258 150h1v1h-1zM258 138h1v1h-1zM258 126h1v1h-1zM258 114h1v1h-1zM258 101h1v1h-1zM258 89h1v1h-1zM258 77h1v1h-1zM258 64h1v1h-1zM258 52h1v1h-1zM258 40h1v1h-1zM258 28h1v1h-1zM258 15h1v1h-1zM258 3h1v1h-1zM271 568h1v1h-1zM271 555h1v1h-1zM271 543h1v1h-1zM271 531h1v1h-1zM271 518h1v1h-1zM271 506h1v1h-1zM271 494h1v1h-1zM271 482h1v1h-1zM271 469h1v1h-1zM271 457h1v1h-1zM271 445h1v1h-1zM271 433h1v1h-1zM271 420h1v1h-1zM271 408h1v1h-1zM271 396h1v1h-1zM271 384h1v1h-1zM271 371h1v1h-1zM271 359h1v1h-1zM271 347h1v1h-1zM271 334h1v1h-1zM271 322h1v1h-1zM271 310h1v1h-1zM271 298h1v1h-1zM271 285h1v1h-1zM271 273h1v1h-1zM271 261h1v1h-1zM271 249h1v1h-1zM271 236h1v1h-1zM271 224h1v1h-1zM271 212h1v1h-1zM271 199h1v1h-1zM271 187h1v1h-1zM271 175h1v1h-1zM271 163h1v1h-1zM271 150h1v1h-1zM271 138h1v1h-1zM271 126h1v1h-1zM271 114h1v1h-1zM271 101h1v1h-1zM271 89h1v1h-1zM271 77h1v1h-1zM271 64h1v1h-1zM271 52h1v1h-1zM271 40h1v1h-1zM271 28h1v1h-1zM271 15h1v1h-1zM271 3h1v1h-1zM283 568h1v1h-1zM283 555h1v1h-1zM283 543h1v1h-1zM283 531h1v1h-1zM283 518h1v1h-1zM283 506h1v1h-1zM283 494h1v1h-1zM283 482h1v1h-1zM283 469h1v1h-1zM283 457h1v1h-1zM283 445h1v1h-1zM283 433h1v1h-1zM283 420h1v1h-1zM283 408h1v1h-1zM283 396h1v1h-1zM283 384h1v1h-1zM283 371h1v1h-1zM283 359h1v1h-1zM283 347h1v1h-1zM283 334h1v1h-1zM283 322h1v1h-1zM283 310h1v1h-1zM283 298h1v1h-1zM283 285h1v1h-1zM283 273h1v1h-1zM283 261h1v1h-1zM283 249h1v1h-1zM283 236h1v1h-1zM283 224h1v1h-1zM283 212h1v1h-1zM283 199h1v1h-1zM283 187h1v1h-1zM283 175h1v1h-1zM283 163h1v1h-1zM283 150h1v1h-1zM283 138h1v1h-1zM283 126h1v1h-1zM283 114h1v1h-1zM283 101h1v1h-1zM283 89h1v1h-1zM283 77h1v1h-1zM283 64h1v1h-1zM283 52h1v1h-1zM283 40h1v1h-1zM283 28h1v1h-1zM283 15h1v1h-1zM283 3h1v1h-1zM295 568h1v1h-1zM295 555h1v1h-1zM295 543h1v1h-1zM295 531h1v1h-1zM295 518h1v1h-1zM295 506h1v1h-1zM295 494h1v1h-1zM295 482h1v1h-1zM295 469h1v1h-1zM295 457h1v1h-1zM295 445h1v1h-1zM295 433h1v1h-1zM295 420h1v1h-1zM295 408h1v1h-1zM295 396h1v1h-1zM295 384h1v1h-1zM295 371h1v1h-1zM295 359h1v1h-1zM295 347h1v1h-1zM295 334h1v1h-1zM295 322h1v1h-1zM295 310h1v1h-1zM295 298h1v1h-1zM295 285h1v1h-1zM295 273h1v1h-1zM295 261h1v1h-1zM295 249h1v1h-1zM295 236h1v1h-1zM295 224h1v1h-1zM295 212h1v1h-1zM295 199h1v1h-1zM295 187h1v1h-1zM295 175h1v1h-1zM295 163h1v1h-1zM295 150h1v1h-1zM295 138h1v1h-1zM295 126h1v1h-1zM295 114h1v1h-1zM295 101h1v1h-1zM295 89h1v1h-1zM295 77h1v1h-1zM295 64h1v1h-1zM295 52h1v1h-1zM295 40h1v1h-1zM295 28h1v1h-1zM295 15h1v1h-1zM295 3h1v1h-1zM307 568h1v1h-1zM307 555h1v1h-1zM307 543h1v1h-1zM307 531h1v1h-1zM307 518h1v1h-1zM307 506h1v1h-1zM307 494h1v1h-1zM307 482h1v1h-1zM307 469h1v1h-1zM307 457h1v1h-1zM307 445h1v1h-1zM307 433h1v1h-1zM307 420h1v1h-1zM307 408h1v1h-1zM307 396h1v1h-1zM307 384h1v1h-1zM307 371h1v1h-1zM307 359h1v1h-1zM307 347h1v1h-1zM307 334h1v1h-1zM307 322h1v1h-1zM307 310h1v1h-1zM307 298h1v1h-1zM307 285h1v1h-1zM307 273h1v1h-1zM307 261h1v1h-1zM307 249h1v1h-1zM307 236h1v1h-1zM307 224h1v1h-1zM307 212h1v1h-1zM307 199h1v1h-1zM307 187h1v1h-1zM307 175h1v1h-1zM307 163h1v1h-1zM307 150h1v1h-1zM307 138h1v1h-1zM307 126h1v1h-1zM307 114h1v1h-1zM307 101h1v1h-1zM307 89h1v1h-1zM307 77h1v1h-1zM307 64h1v1h-1zM307 52h1v1h-1zM307 40h1v1h-1zM307 28h1v1h-1zM307 15h1v1h-1zM307 3h1v1h-1zM320 568h1v1h-1zM320 555h1v1h-1zM320 543h1v1h-1zM320 531h1v1h-1zM320 518h1v1h-1zM320 506h1v1h-1zM320 494h1v1h-1zM320 482h1v1h-1zM320 469h1v1h-1zM320 457h1v1h-1zM320 445h1v1h-1zM320 433h1v1h-1zM320 420h1v1h-1zM320 408h1v1h-1zM320 396h1v1h-1zM320 384h1v1h-1zM320 371h1v1h-1zM320 359h1v1h-1zM320 347h1v1h-1zM320 334h1v1h-1zM320 322h1v1h-1zM320 310h1v1h-1zM320 298h1v1h-1zM320 285h1v1h-1zM320 273h1v1h-1zM320 261h1v1h-1zM320 249h1v1h-1zM320 236h1v1h-1zM320 224h1v1h-1zM320 212h1v1h-1zM320 199h1v1h-1zM320 187h1v1h-1zM320 175h1v1h-1zM320 163h1v1h-1zM320 150h1v1h-1zM320 138h1v1h-1zM320 126h1v1h-1zM320 114h1v1h-1zM320 101h1v1h-1zM320 89h1v1h-1zM320 77h1v1h-1zM320 64h1v1h-1zM320 52h1v1h-1zM320 40h1v1h-1zM320 28h1v1h-1zM320 15h1v1h-1zM320 3h1v1h-1zM332 568h1v1h-1zM332 555h1v1h-1zM332 543h1v1h-1zM332 531h1v1h-1zM332 518h1v1h-1zM332 506h1v1h-1zM332 494h1v1h-1zM332 482h1v1h-1zM332 469h1v1h-1zM332 457h1v1h-1zM332 445h1v1h-1zM332 433h1v1h-1zM332 420h1v1h-1zM332 408h1v1h-1zM332 396h1v1h-1zM332 384h1v1h-1zM332 371h1v1h-1zM332 359h1v1h-1zM332 347h1v1h-1zM332 334h1v1h-1zM332 322h1v1h-1zM332 310h1v1h-1zM332 298h1v1h-1zM332 285h1v1h-1zM332 273h1v1h-1zM332 261h1v1h-1zM332 249h1v1h-1zM332 236h1v1h-1zM332 224h1v1h-1zM332 212h1v1h-1zM332 199h1v1h-1zM332 187h1v1h-1zM332 175h1v1h-1zM332 163h1v1h-1zM332 150h1v1h-1zM332 138h1v1h-1zM332 126h1v1h-1zM332 114h1v1h-1zM332 101h1v1h-1zM332 89h1v1h-1zM332 77h1v1h-1zM332 64h1v1h-1zM332 52h1v1h-1zM332 40h1v1h-1zM332 28h1v1h-1zM332 15h1v1h-1zM332 3h1v1h-1zM344 568h1v1h-1zM344 555h1v1h-1zM344 543h1v1h-1zM344 531h1v1h-1zM344 518h1v1h-1zM344 506h1v1h-1zM344 494h1v1h-1zM344 482h1v1h-1zM344 469h1v1h-1zM344 457h1v1h-1zM344 445h1v1h-1zM344 433h1v1h-1zM344 420h1v1h-1zM344 408h1v1h-1zM344 396h1v1h-1zM344 384h1v1h-1zM344 371h1v1h-1zM344 359h1v1h-1zM344 347h1v1h-1zM344 334h1v1h-1zM344 322h1v1h-1zM344 310h1v1h-1zM344 298h1v1h-1zM344 285h1v1h-1zM344 273h1v1h-1zM344 261h1v1h-1zM344 249h1v1h-1zM344 236h1v1h-1zM344 224h1v1h-1zM344 212h1v1h-1zM344 199h1v1h-1zM344 187h1v1h-1zM344 175h1v1h-1zM344 163h1v1h-1zM344 150h1v1h-1zM344 138h1v1h-1zM344 126h1v1h-1zM344 114h1v1h-1zM344 101h1v1h-1zM344 89h1v1h-1zM344 77h1v1h-1zM344 64h1v1h-1zM344 52h1v1h-1zM344 40h1v1h-1zM344 28h1v1h-1zM344 15h1v1h-1zM344 3h1v1h-1zM357 568h1v1h-1zM357 555h1v1h-1zM357 543h1v1h-1zM357 531h1v1h-1zM357 518h1v1h-1zM357 506h1v1h-1zM357 494h1v1h-1zM357 482h1v1h-1zM357 469h1v1h-1zM357 457h1v1h-1zM357 445h1v1h-1zM357 433h1v1h-1zM357 420h1v1h-1zM357 408h1v1h-1zM357 396h1v1h-1zM357 384h1v1h-1zM357 371h1v1h-1zM357 359h1v1h-1zM357 347h1v1h-1zM357 334h1v1h-1zM357 322h1v1h-1zM357 310h1v1h-1zM357 298h1v1h-1zM357 285h1v1h-1zM357 273h1v1h-1zM357 261h1v1h-1zM357 249h1v1h-1zM357 236h1v1h-1zM357 224h1v1h-1zM357 212h1v1h-1zM357 199h1v1h-1zM357 187h1v1h-1zM357 175h1v1h-1zM357 163h1v1h-1zM357 150h1v1h-1zM357 138h1v1h-1zM357 126h1v1h-1zM357 114h1v1h-1zM357 101h1v1h-1zM357 89h1v1h-1zM357 77h1v1h-1zM357 64h1v1h-1zM357 52h1v1h-1zM357 40h1v1h-1zM357 28h1v1h-1zM357 15h1v1h-1zM357 3h1v1h-1zM369 568h1v1h-1zM369 555h1v1h-1zM369 543h1v1h-1zM369 531h1v1h-1zM369 518h1v1h-1zM369 506h1v1h-1zM369 494h1v1h-1zM369 482h1v1h-1zM369 469h1v1h-1zM369 457h1v1h-1zM369 445h1v1h-1zM369 433h1v1h-1zM369 420h1v1h-1zM369 408h1v1h-1zM369 396h1v1h-1zM369 384h1v1h-1zM369 371h1v1h-1zM369 359h1v1h-1zM369 347h1v1h-1zM369 334h1v1h-1zM369 322h1v1h-1zM369 310h1v1h-1zM369 298h1v1h-1zM369 285h1v1h-1zM369 273h1v1h-1zM369 261h1v1h-1zM369 249h1v1h-1zM369 236h1v1h-1zM369 224h1v1h-1zM369 212h1v1h-1zM369 199h1v1h-1zM369 187h1v1h-1zM369 175h1v1h-1zM369 163h1v1h-1zM369 150h1v1h-1zM369 138h1v1h-1zM369 126h1v1h-1zM369 114h1v1h-1zM369 101h1v1h-1zM369 89h1v1h-1zM369 77h1v1h-1zM369 64h1v1h-1zM369 52h1v1h-1zM369 40h1v1h-1zM369 28h1v1h-1zM369 15h1v1h-1zM369 3h1v1h-1zM381 568h1v1h-1zM381 555h1v1h-1zM381 543h1v1h-1zM381 531h1v1h-1zM381 518h1v1h-1zM381 506h1v1h-1zM381 494h1v1h-1zM381 482h1v1h-1zM381 469h1v1h-1zM381 457h1v1h-1zM381 445h1v1h-1zM381 433h1v1h-1zM381 420h1v1h-1zM381 408h1v1h-1zM381 396h1v1h-1zM381 384h1v1h-1zM381 371h1v1h-1zM381 359h1v1h-1zM381 347h1v1h-1zM381 334h1v1h-1zM381 322h1v1h-1zM381 310h1v1h-1zM381 298h1v1h-1zM381 285h1v1h-1zM381 273h1v1h-1zM381 261h1v1h-1zM381 249h1v1h-1zM381 236h1v1h-1zM381 224h1v1h-1zM381 212h1v1h-1zM381 199h1v1h-1zM381 187h1v1h-1zM381 175h1v1h-1zM381 163h1v1h-1zM381 150h1v1h-1zM381 138h1v1h-1zM381 126h1v1h-1zM381 114h1v1h-1zM381 101h1v1h-1zM381 89h1v1h-1zM381 77h1v1h-1zM381 64h1v1h-1zM381 52h1v1h-1zM381 40h1v1h-1zM381 28h1v1h-1zM381 15h1v1h-1zM381 3h1v1h-1zM393 568h1v1h-1zM393 555h1v1h-1zM393 543h1v1h-1zM393 531h1v1h-1zM393 518h1v1h-1zM393 506h1v1h-1zM393 494h1v1h-1zM393 482h1v1h-1zM393 469h1v1h-1zM393 457h1v1h-1zM393 445h1v1h-1zM393 433h1v1h-1zM393 420h1v1h-1zM393 408h1v1h-1zM393 396h1v1h-1zM393 384h1v1h-1zM393 371h1v1h-1zM393 359h1v1h-1zM393 347h1v1h-1zM393 334h1v1h-1zM393 322h1v1h-1zM393 310h1v1h-1zM393 298h1v1h-1zM393 285h1v1h-1zM393 273h1v1h-1zM393 261h1v1h-1zM393 249h1v1h-1zM393 236h1v1h-1zM393 224h1v1h-1zM393 212h1v1h-1zM393 199h1v1h-1zM393 187h1v1h-1zM393 175h1v1h-1zM393 163h1v1h-1zM393 150h1v1h-1zM393 138h1v1h-1zM393 126h1v1h-1zM393 114h1v1h-1zM393 101h1v1h-1zM393 89h1v1h-1zM393 77h1v1h-1zM393 64h1v1h-1zM393 52h1v1h-1zM393 40h1v1h-1zM393 28h1v1h-1zM393 15h1v1h-1zM393 3h1v1h-1zM406 568h1v1h-1zM406 555h1v1h-1zM406 543h1v1h-1zM406 531h1v1h-1zM406 518h1v1h-1zM406 506h1v1h-1zM406 494h1v1h-1zM406 482h1v1h-1zM406 469h1v1h-1zM406 457h1v1h-1zM406 445h1v1h-1zM406 433h1v1h-1zM406 420h1v1h-1zM406 408h1v1h-1zM406 396h1v1h-1zM406 384h1v1h-1zM406 371h1v1h-1zM406 359h1v1h-1zM406 347h1v1h-1zM406 334h1v1h-1zM406 322h1v1h-1zM406 310h1v1h-1zM406 298h1v1h-1zM406 285h1v1h-1zM406 273h1v1h-1zM406 261h1v1h-1zM406 249h1v1h-1zM406 236h1v1h-1zM406 224h1v1h-1zM406 212h1v1h-1zM406 199h1v1h-1zM406 187h1v1h-1zM406 175h1v1h-1zM406 163h1v1h-1zM406 150h1v1h-1zM406 138h1v1h-1zM406 126h1v1h-1zM406 114h1v1h-1zM406 101h1v1h-1zM406 89h1v1h-1zM406 77h1v1h-1zM406 64h1v1h-1zM406 52h1v1h-1zM406 40h1v1h-1zM406 28h1v1h-1zM406 15h1v1h-1zM406 3h1v1h-1zM418 568h1v1h-1zM418 555h1v1h-1zM418 543h1v1h-1zM418 531h1v1h-1zM418 518h1v1h-1zM418 506h1v1h-1zM418 494h1v1h-1zM418 482h1v1h-1zM418 469h1v1h-1zM418 457h1v1h-1zM418 445h1v1h-1zM418 433h1v1h-1zM418 420h1v1h-1zM418 408h1v1h-1zM418 396h1v1h-1zM418 384h1v1h-1zM418 371h1v1h-1zM418 359h1v1h-1zM418 347h1v1h-1zM418 334h1v1h-1zM418 322h1v1h-1zM418 310h1v1h-1zM418 298h1v1h-1zM418 285h1v1h-1zM418 273h1v1h-1zM418 261h1v1h-1zM418 249h1v1h-1zM418 236h1v1h-1zM418 224h1v1h-1zM418 212h1v1h-1zM418 199h1v1h-1zM418 187h1v1h-1zM418 175h1v1h-1zM418 163h1v1h-1zM418 150h1v1h-1zM418 138h1v1h-1zM418 126h1v1h-1zM418 114h1v1h-1zM418 101h1v1h-1zM418 89h1v1h-1zM418 77h1v1h-1zM418 64h1v1h-1zM418 52h1v1h-1zM418 40h1v1h-1zM418 28h1v1h-1zM418 15h1v1h-1zM418 3h1v1h-1zM430 568h1v1h-1zM430 555h1v1h-1zM430 543h1v1h-1zM430 531h1v1h-1zM430 518h1v1h-1zM430 506h1v1h-1zM430 494h1v1h-1zM430 482h1v1h-1zM430 469h1v1h-1zM430 457h1v1h-1zM430 445h1v1h-1zM430 433h1v1h-1zM430 420h1v1h-1zM430 408h1v1h-1zM430 396h1v1h-1zM430 384h1v1h-1zM430 371h1v1h-1zM430 359h1v1h-1zM430 347h1v1h-1zM430 334h1v1h-1zM430 322h1v1h-1zM430 310h1v1h-1zM430 298h1v1h-1zM430 285h1v1h-1zM430 273h1v1h-1zM430 261h1v1h-1zM430 249h1v1h-1zM430 236h1v1h-1zM430 224h1v1h-1zM430 212h1v1h-1zM430 199h1v1h-1zM430 187h1v1h-1zM430 175h1v1h-1zM430 163h1v1h-1zM430 150h1v1h-1zM430 138h1v1h-1zM430 126h1v1h-1zM430 114h1v1h-1zM430 101h1v1h-1zM430 89h1v1h-1zM430 77h1v1h-1zM430 64h1v1h-1zM430 52h1v1h-1zM430 40h1v1h-1zM430 28h1v1h-1zM430 15h1v1h-1zM430 3h1v1h-1zM442 568h1v1h-1zM442 555h1v1h-1zM442 543h1v1h-1zM442 531h1v1h-1zM442 518h1v1h-1zM442 506h1v1h-1zM442 494h1v1h-1zM442 482h1v1h-1zM442 469h1v1h-1zM442 457h1v1h-1zM442 445h1v1h-1zM442 433h1v1h-1zM442 420h1v1h-1zM442 408h1v1h-1zM442 396h1v1h-1zM442 384h1v1h-1zM442 371h1v1h-1zM442 359h1v1h-1zM442 347h1v1h-1zM442 334h1v1h-1zM442 322h1v1h-1zM442 310h1v1h-1zM442 298h1v1h-1zM442 285h1v1h-1zM442 273h1v1h-1zM442 261h1v1h-1zM442 249h1v1h-1zM442 236h1v1h-1zM442 224h1v1h-1zM442 212h1v1h-1zM442 199h1v1h-1zM442 187h1v1h-1zM442 175h1v1h-1zM442 163h1v1h-1zM442 150h1v1h-1zM442 138h1v1h-1zM442 126h1v1h-1zM442 114h1v1h-1zM442 101h1v1h-1zM442 89h1v1h-1zM442 77h1v1h-1zM442 64h1v1h-1zM442 52h1v1h-1zM442 40h1v1h-1zM442 28h1v1h-1zM442 15h1v1h-1zM442 3h1v1h-1zM455 568h1v1h-1zM455 555h1v1h-1zM455 543h1v1h-1zM455 531h1v1h-1zM455 518h1v1h-1zM455 506h1v1h-1zM455 494h1v1h-1zM455 482h1v1h-1zM455 469h1v1h-1zM455 457h1v1h-1zM455 445h1v1h-1zM455 433h1v1h-1zM455 420h1v1h-1zM455 408h1v1h-1zM455 396h1v1h-1zM455 384h1v1h-1zM455 371h1v1h-1zM455 359h1v1h-1zM455 347h1v1h-1zM455 334h1v1h-1zM455 322h1v1h-1zM455 310h1v1h-1zM455 298h1v1h-1zM455 285h1v1h-1zM455 273h1v1h-1zM455 261h1v1h-1zM455 249h1v1h-1zM455 236h1v1h-1zM455 224h1v1h-1zM455 212h1v1h-1zM455 199h1v1h-1zM455 187h1v1h-1zM455 175h1v1h-1zM455 163h1v1h-1zM455 150h1v1h-1zM455 138h1v1h-1zM455 126h1v1h-1zM455 114h1v1h-1zM455 101h1v1h-1zM455 89h1v1h-1zM455 77h1v1h-1zM455 64h1v1h-1zM455 52h1v1h-1zM455 40h1v1h-1zM455 28h1v1h-1zM455 15h1v1h-1zM455 3h1v1h-1zM467 568h1v1h-1zM467 555h1v1h-1zM467 543h1v1h-1zM467 531h1v1h-1zM467 518h1v1h-1zM467 506h1v1h-1zM467 494h1v1h-1zM467 482h1v1h-1zM467 469h1v1h-1zM467 457h1v1h-1zM467 445h1v1h-1zM467 433h1v1h-1zM467 420h1v1h-1zM467 408h1v1h-1zM467 396h1v1h-1zM467 384h1v1h-1zM467 371h1v1h-1zM467 359h1v1h-1zM467 347h1v1h-1zM467 334h1v1h-1zM467 322h1v1h-1zM467 310h1v1h-1zM467 298h1v1h-1zM467 285h1v1h-1zM467 273h1v1h-1zM467 261h1v1h-1zM467 249h1v1h-1zM467 236h1v1h-1zM467 224h1v1h-1zM467 212h1v1h-1zM467 199h1v1h-1zM467 187h1v1h-1zM467 175h1v1h-1zM467 163h1v1h-1zM467 150h1v1h-1zM467 138h1v1h-1zM467 126h1v1h-1zM467 114h1v1h-1zM467 101h1v1h-1zM467 89h1v1h-1zM467 77h1v1h-1zM467 64h1v1h-1zM467 52h1v1h-1zM467 40h1v1h-1zM467 28h1v1h-1zM467 15h1v1h-1zM467 3h1v1h-1zM479 568h1v1h-1zM479 555h1v1h-1zM479 543h1v1h-1zM479 531h1v1h-1zM479 518h1v1h-1zM479 506h1v1h-1zM479 494h1v1h-1zM479 482h1v1h-1zM479 469h1v1h-1zM479 457h1v1h-1zM479 445h1v1h-1zM479 433h1v1h-1zM479 420h1v1h-1zM479 408h1v1h-1zM479 396h1v1h-1zM479 384h1v1h-1zM479 371h1v1h-1zM479 359h1v1h-1zM479 347h1v1h-1zM479 334h1v1h-1zM479 322h1v1h-1zM479 310h1v1h-1zM479 298h1v1h-1zM479 285h1v1h-1zM479 273h1v1h-1zM479 261h1v1h-1zM479 249h1v1h-1zM479 236h1v1h-1zM479 224h1v1h-1zM479 212h1v1h-1zM479 199h1v1h-1zM479 187h1v1h-1zM479 175h1v1h-1zM479 163h1v1h-1zM479 150h1v1h-1zM479 138h1v1h-1zM479 126h1v1h-1zM479 114h1v1h-1zM479 101h1v1h-1zM479 89h1v1h-1zM479 77h1v1h-1zM479 64h1v1h-1zM479 52h1v1h-1zM479 40h1v1h-1zM479 28h1v1h-1zM479 15h1v1h-1zM479 3h1v1h-1zM492 568h1v1h-1zM492 555h1v1h-1zM492 543h1v1h-1zM492 531h1v1h-1zM492 518h1v1h-1zM492 506h1v1h-1zM492 494h1v1h-1zM492 482h1v1h-1zM492 469h1v1h-1zM492 457h1v1h-1zM492 445h1v1h-1zM492 433h1v1h-1zM492 420h1v1h-1zM492 408h1v1h-1zM492 396h1v1h-1zM492 384h1v1h-1zM492 371h1v1h-1zM492 359h1v1h-1zM492 347h1v1h-1zM492 334h1v1h-1zM492 322h1v1h-1zM492 310h1v1h-1zM492 298h1v1h-1zM492 285h1v1h-1zM492 273h1v1h-1zM492 261h1v1h-1zM492 249h1v1h-1zM492 236h1v1h-1zM492 224h1v1h-1zM492 212h1v1h-1zM492 199h1v1h-1zM492 187h1v1h-1zM492 175h1v1h-1zM492 163h1v1h-1zM492 150h1v1h-1zM492 138h1v1h-1zM492 126h1v1h-1zM492 114h1v1h-1zM492 101h1v1h-1zM492 89h1v1h-1zM492 77h1v1h-1zM492 64h1v1h-1zM492 52h1v1h-1zM492 40h1v1h-1zM492 28h1v1h-1zM492 15h1v1h-1zM492 3h1v1h-1zM504 568h1v1h-1zM504 555h1v1h-1zM504 543h1v1h-1zM504 531h1v1h-1zM504 518h1v1h-1zM504 506h1v1h-1zM504 494h1v1h-1zM504 482h1v1h-1zM504 469h1v1h-1zM504 457h1v1h-1zM504 445h1v1h-1zM504 433h1v1h-1zM504 420h1v1h-1zM504 408h1v1h-1zM504 396h1v1h-1zM504 384h1v1h-1zM504 371h1v1h-1zM504 359h1v1h-1zM504 347h1v1h-1zM504 334h1v1h-1zM504 322h1v1h-1zM504 310h1v1h-1zM504 298h1v1h-1zM504 285h1v1h-1zM504 273h1v1h-1zM504 261h1v1h-1zM504 249h1v1h-1zM504 236h1v1h-1zM504 224h1v1h-1zM504 212h1v1h-1zM504 199h1v1h-1zM504 187h1v1h-1zM504 175h1v1h-1zM504 163h1v1h-1zM504 150h1v1h-1zM504 138h1v1h-1zM504 126h1v1h-1zM504 114h1v1h-1zM504 101h1v1h-1zM504 89h1v1h-1zM504 77h1v1h-1zM504 64h1v1h-1zM504 52h1v1h-1zM504 40h1v1h-1zM504 28h1v1h-1zM504 15h1v1h-1zM504 3h1v1h-1zM516 568h1v1h-1zM516 555h1v1h-1zM516 543h1v1h-1zM516 531h1v1h-1zM516 518h1v1h-1zM516 506h1v1h-1zM516 494h1v1h-1zM516 482h1v1h-1zM516 469h1v1h-1zM516 457h1v1h-1zM516 445h1v1h-1zM516 433h1v1h-1zM516 420h1v1h-1zM516 408h1v1h-1zM516 396h1v1h-1zM516 384h1v1h-1zM516 371h1v1h-1zM516 359h1v1h-1zM516 347h1v1h-1zM516 334h1v1h-1zM516 322h1v1h-1zM516 310h1v1h-1zM516 298h1v1h-1zM516 285h1v1h-1zM516 273h1v1h-1zM516 261h1v1h-1zM516 249h1v1h-1zM516 236h1v1h-1zM516 224h1v1h-1zM516 212h1v1h-1zM516 199h1v1h-1zM516 187h1v1h-1zM516 175h1v1h-1zM516 163h1v1h-1zM516 150h1v1h-1zM516 138h1v1h-1zM516 126h1v1h-1zM516 114h1v1h-1zM516 101h1v1h-1zM516 89h1v1h-1zM516 77h1v1h-1zM516 64h1v1h-1zM516 52h1v1h-1zM516 40h1v1h-1zM516 28h1v1h-1zM516 15h1v1h-1zM516 3h1v1h-1zM528 568h1v1h-1zM528 555h1v1h-1zM528 543h1v1h-1zM528 531h1v1h-1zM528 518h1v1h-1zM528 506h1v1h-1zM528 494h1v1h-1zM528 482h1v1h-1zM528 469h1v1h-1zM528 457h1v1h-1zM528 445h1v1h-1zM528 433h1v1h-1zM528 420h1v1h-1zM528 408h1v1h-1zM528 396h1v1h-1zM528 384h1v1h-1zM528 371h1v1h-1zM528 359h1v1h-1zM528 347h1v1h-1zM528 334h1v1h-1zM528 322h1v1h-1zM528 310h1v1h-1zM528 298h1v1h-1zM528 285h1v1h-1zM528 273h1v1h-1zM528 261h1v1h-1zM528 249h1v1h-1zM528 236h1v1h-1zM528 224h1v1h-1zM528 212h1v1h-1zM528 199h1v1h-1zM528 187h1v1h-1zM528 175h1v1h-1zM528 163h1v1h-1zM528 150h1v1h-1zM528 138h1v1h-1zM528 126h1v1h-1zM528 114h1v1h-1zM528 101h1v1h-1zM528 89h1v1h-1zM528 77h1v1h-1zM528 64h1v1h-1zM528 52h1v1h-1zM528 40h1v1h-1zM528 28h1v1h-1zM528 15h1v1h-1zM528 3h1v1h-1zM541 568h1v1h-1zM541 555h1v1h-1zM541 543h1v1h-1zM541 531h1v1h-1zM541 518h1v1h-1zM541 506h1v1h-1zM541 494h1v1h-1zM541 482h1v1h-1zM541 469h1v1h-1zM541 457h1v1h-1zM541 445h1v1h-1zM541 433h1v1h-1zM541 420h1v1h-1zM541 408h1v1h-1zM541 396h1v1h-1zM541 384h1v1h-1zM541 371h1v1h-1zM541 359h1v1h-1zM541 347h1v1h-1zM541 334h1v1h-1zM541 322h1v1h-1zM541 310h1v1h-1zM541 298h1v1h-1zM541 285h1v1h-1zM541 273h1v1h-1zM541 261h1v1h-1zM541 249h1v1h-1zM541 236h1v1h-1zM541 224h1v1h-1zM541 212h1v1h-1zM541 199h1v1h-1zM541 187h1v1h-1zM541 175h1v1h-1zM541 163h1v1h-1zM541 150h1v1h-1zM541 138h1v1h-1zM541 126h1v1h-1zM541 114h1v1h-1zM541 101h1v1h-1zM541 89h1v1h-1zM541 77h1v1h-1zM541 64h1v1h-1zM541 52h1v1h-1zM541 40h1v1h-1zM541 28h1v1h-1zM541 15h1v1h-1zM541 3h1v1h-1zM553 568h1v1h-1zM553 555h1v1h-1zM553 543h1v1h-1zM553 531h1v1h-1zM553 518h1v1h-1zM553 506h1v1h-1zM553 494h1v1h-1zM553 482h1v1h-1zM553 469h1v1h-1zM553 457h1v1h-1zM553 445h1v1h-1zM553 433h1v1h-1zM553 420h1v1h-1zM553 408h1v1h-1zM553 396h1v1h-1zM553 384h1v1h-1zM553 371h1v1h-1zM553 359h1v1h-1zM553 347h1v1h-1zM553 334h1v1h-1zM553 322h1v1h-1zM553 310h1v1h-1zM553 298h1v1h-1zM553 285h1v1h-1zM553 273h1v1h-1zM553 261h1v1h-1zM553 249h1v1h-1zM553 236h1v1h-1zM553 224h1v1h-1zM553 212h1v1h-1zM553 199h1v1h-1zM553 187h1v1h-1zM553 175h1v1h-1zM553 163h1v1h-1zM553 150h1v1h-1zM553 138h1v1h-1zM553 126h1v1h-1zM553 114h1v1h-1zM553 101h1v1h-1zM553 89h1v1h-1zM553 77h1v1h-1zM553 64h1v1h-1zM553 52h1v1h-1zM553 40h1v1h-1zM553 28h1v1h-1zM553 15h1v1h-1zM553 3h1v1h-1zM565 568h1v1h-1zM565 555h1v1h-1zM565 543h1v1h-1zM565 531h1v1h-1zM565 518h1v1h-1zM565 506h1v1h-1zM565 494h1v1h-1zM565 482h1v1h-1zM565 469h1v1h-1zM565 457h1v1h-1zM565 445h1v1h-1zM565 433h1v1h-1zM565 420h1v1h-1zM565 408h1v1h-1zM565 396h1v1h-1zM565 384h1v1h-1zM565 371h1v1h-1zM565 359h1v1h-1zM565 347h1v1h-1zM565 334h1v1h-1zM565 322h1v1h-1zM565 310h1v1h-1zM565 298h1v1h-1zM565 285h1v1h-1zM565 273h1v1h-1zM565 261h1v1h-1zM565 249h1v1h-1zM565 236h1v1h-1zM565 224h1v1h-1zM565 212h1v1h-1zM565 199h1v1h-1zM565 187h1v1h-1zM565 175h1v1h-1zM565 163h1v1h-1zM565 150h1v1h-1zM565 138h1v1h-1zM565 126h1v1h-1zM565 114h1v1h-1zM565 101h1v1h-1zM565 89h1v1h-1zM565 77h1v1h-1zM565 64h1v1h-1zM565 52h1v1h-1zM565 40h1v1h-1zM565 28h1v1h-1zM565 15h1v1h-1zM565 3h1v1h-1zM577 568h1v1h-1zM577 555h1v1h-1zM577 543h1v1h-1zM577 531h1v1h-1zM577 518h1v1h-1zM577 506h1v1h-1zM577 494h1v1h-1zM577 482h1v1h-1zM577 469h1v1h-1zM577 457h1v1h-1zM577 445h1v1h-1zM577 433h1v1h-1zM577 420h1v1h-1zM577 408h1v1h-1zM577 396h1v1h-1zM577 384h1v1h-1zM577 371h1v1h-1zM577 359h1v1h-1zM577 347h1v1h-1zM577 334h1v1h-1zM577 322h1v1h-1zM577 310h1v1h-1zM577 298h1v1h-1zM577 285h1v1h-1zM577 273h1v1h-1zM577 261h1v1h-1zM577 249h1v1h-1zM577 236h1v1h-1zM577 224h1v1h-1zM577 212h1v1h-1zM577 199h1v1h-1zM577 187h1v1h-1zM577 175h1v1h-1zM577 163h1v1h-1zM577 150h1v1h-1zM577 138h1v1h-1zM577 126h1v1h-1zM577 114h1v1h-1zM577 101h1v1h-1zM577 89h1v1h-1zM577 77h1v1h-1zM577 64h1v1h-1zM577 52h1v1h-1zM577 40h1v1h-1zM577 28h1v1h-1zM577 15h1v1h-1zM577 3h1v1h-1zM590 568h1v1h-1zM590 555h1v1h-1zM590 543h1v1h-1zM590 531h1v1h-1zM590 518h1v1h-1zM590 506h1v1h-1zM590 494h1v1h-1zM590 482h1v1h-1zM590 469h1v1h-1zM590 457h1v1h-1zM590 445h1v1h-1zM590 433h1v1h-1zM590 420h1v1h-1zM590 408h1v1h-1zM590 396h1v1h-1zM590 384h1v1h-1zM590 371h1v1h-1zM590 359h1v1h-1zM590 347h1v1h-1zM590 334h1v1h-1zM590 322h1v1h-1zM590 310h1v1h-1zM590 298h1v1h-1zM590 285h1v1h-1zM590 273h1v1h-1zM590 261h1v1h-1zM590 249h1v1h-1zM590 236h1v1h-1zM590 224h1v1h-1zM590 212h1v1h-1zM590 199h1v1h-1zM590 187h1v1h-1zM590 175h1v1h-1zM590 163h1v1h-1zM590 150h1v1h-1zM590 138h1v1h-1zM590 126h1v1h-1zM590 114h1v1h-1zM590 101h1v1h-1zM590 89h1v1h-1zM590 77h1v1h-1zM590 64h1v1h-1zM590 52h1v1h-1zM590 40h1v1h-1zM590 28h1v1h-1zM590 15h1v1h-1zM590 3h1v1h-1zM602 568h1v1h-1zM602 555h1v1h-1zM602 543h1v1h-1zM602 531h1v1h-1zM602 518h1v1h-1zM602 506h1v1h-1zM602 494h1v1h-1zM602 482h1v1h-1zM602 469h1v1h-1zM602 457h1v1h-1zM602 445h1v1h-1zM602 433h1v1h-1zM602 420h1v1h-1zM602 408h1v1h-1zM602 396h1v1h-1zM602 384h1v1h-1zM602 371h1v1h-1zM602 359h1v1h-1zM602 347h1v1h-1zM602 334h1v1h-1zM602 322h1v1h-1zM602 310h1v1h-1zM602 298h1v1h-1zM602 285h1v1h-1zM602 273h1v1h-1zM602 261h1v1h-1zM602 249h1v1h-1zM602 236h1v1h-1zM602 224h1v1h-1zM602 212h1v1h-1zM602 199h1v1h-1zM602 187h1v1h-1zM602 175h1v1h-1zM602 163h1v1h-1zM602 150h1v1h-1zM602 138h1v1h-1zM602 126h1v1h-1zM602 114h1v1h-1zM602 101h1v1h-1zM602 89h1v1h-1zM602 77h1v1h-1zM602 64h1v1h-1zM602 52h1v1h-1zM602 40h1v1h-1zM602 28h1v1h-1zM602 15h1v1h-1zM602 3h1v1h-1zM614 568h1v1h-1zM614 555h1v1h-1zM614 543h1v1h-1zM614 531h1v1h-1zM614 518h1v1h-1zM614 506h1v1h-1zM614 494h1v1h-1zM614 482h1v1h-1zM614 469h1v1h-1zM614 457h1v1h-1zM614 445h1v1h-1zM614 433h1v1h-1zM614 420h1v1h-1zM614 408h1v1h-1zM614 396h1v1h-1zM614 384h1v1h-1zM614 371h1v1h-1zM614 359h1v1h-1zM614 347h1v1h-1zM614 334h1v1h-1zM614 322h1v1h-1zM614 310h1v1h-1zM614 298h1v1h-1zM614 285h1v1h-1zM614 273h1v1h-1zM614 261h1v1h-1zM614 249h1v1h-1zM614 236h1v1h-1zM614 224h1v1h-1zM614 212h1v1h-1zM614 199h1v1h-1zM614 187h1v1h-1zM614 175h1v1h-1zM614 163h1v1h-1zM614 150h1v1h-1zM614 138h1v1h-1zM614 126h1v1h-1zM614 114h1v1h-1zM614 101h1v1h-1zM614 89h1v1h-1zM614 77h1v1h-1zM614 64h1v1h-1zM614 52h1v1h-1zM614 40h1v1h-1zM614 28h1v1h-1zM614 15h1v1h-1zM614 3h1v1h-1zM627 568h1v1h-1zM627 555h1v1h-1zM627 543h1v1h-1zM627 531h1v1h-1zM627 518h1v1h-1zM627 506h1v1h-1zM627 494h1v1h-1zM627 482h1v1h-1zM627 469h1v1h-1zM627 457h1v1h-1zM627 445h1v1h-1zM627 433h1v1h-1zM627 420h1v1h-1zM627 408h1v1h-1zM627 396h1v1h-1zM627 384h1v1h-1zM627 371h1v1h-1zM627 359h1v1h-1zM627 347h1v1h-1zM627 334h1v1h-1zM627 322h1v1h-1zM627 310h1v1h-1zM627 298h1v1h-1zM627 285h1v1h-1zM627 273h1v1h-1zM627 261h1v1h-1zM627 249h1v1h-1zM627 236h1v1h-1zM627 224h1v1h-1zM627 212h1v1h-1zM627 199h1v1h-1zM627 187h1v1h-1zM627 175h1v1h-1zM627 163h1v1h-1zM627 150h1v1h-1zM627 138h1v1h-1zM627 126h1v1h-1zM627 114h1v1h-1zM627 101h1v1h-1zM627 89h1v1h-1zM627 77h1v1h-1zM627 64h1v1h-1zM627 52h1v1h-1zM627 40h1v1h-1zM627 28h1v1h-1zM627 15h1v1h-1zM627 3h1v1h-1zM639 568h1v1h-1zM639 555h1v1h-1zM639 543h1v1h-1zM639 531h1v1h-1zM639 518h1v1h-1zM639 506h1v1h-1zM639 494h1v1h-1zM639 482h1v1h-1zM639 469h1v1h-1zM639 457h1v1h-1zM639 445h1v1h-1zM639 433h1v1h-1zM639 420h1v1h-1zM639 408h1v1h-1zM639 396h1v1h-1zM639 384h1v1h-1zM639 371h1v1h-1zM639 359h1v1h-1zM639 347h1v1h-1zM639 334h1v1h-1zM639 322h1v1h-1zM639 310h1v1h-1zM639 298h1v1h-1zM639 285h1v1h-1zM639 273h1v1h-1zM639 261h1v1h-1zM639 249h1v1h-1zM639 236h1v1h-1zM639 224h1v1h-1zM639 212h1v1h-1zM639 199h1v1h-1zM639 187h1v1h-1zM639 175h1v1h-1zM639 163h1v1h-1zM639 150h1v1h-1zM639 138h1v1h-1zM639 126h1v1h-1zM639 114h1v1h-1zM639 101h1v1h-1zM639 89h1v1h-1zM639 77h1v1h-1zM639 64h1v1h-1zM639 52h1v1h-1zM639 40h1v1h-1zM639 28h1v1h-1zM639 15h1v1h-1zM639 3h1v1h-1zM651 568h1v1h-1zM651 555h1v1h-1zM651 543h1v1h-1zM651 531h1v1h-1zM651 518h1v1h-1zM651 506h1v1h-1zM651 494h1v1h-1zM651 482h1v1h-1zM651 469h1v1h-1zM651 457h1v1h-1zM651 445h1v1h-1zM651 433h1v1h-1zM651 420h1v1h-1zM651 408h1v1h-1zM651 396h1v1h-1zM651 384h1v1h-1zM651 371h1v1h-1zM651 359h1v1h-1zM651 347h1v1h-1zM651 334h1v1h-1zM651 322h1v1h-1zM651 310h1v1h-1zM651 298h1v1h-1zM651 285h1v1h-1zM651 273h1v1h-1zM651 261h1v1h-1zM651 249h1v1h-1zM651 236h1v1h-1zM651 224h1v1h-1zM651 212h1v1h-1zM651 199h1v1h-1zM651 187h1v1h-1zM651 175h1v1h-1zM651 163h1v1h-1zM651 150h1v1h-1zM651 138h1v1h-1zM651 126h1v1h-1zM651 114h1v1h-1zM651 101h1v1h-1zM651 89h1v1h-1zM651 77h1v1h-1zM651 64h1v1h-1zM651 52h1v1h-1zM651 40h1v1h-1zM651 28h1v1h-1zM651 15h1v1h-1zM651 3h1v1h-1zM663 568h1v1h-1zM663 555h1v1h-1zM663 543h1v1h-1zM663 531h1v1h-1zM663 518h1v1h-1zM663 506h1v1h-1zM663 494h1v1h-1zM663 482h1v1h-1zM663 469h1v1h-1zM663 457h1v1h-1zM663 445h1v1h-1zM663 433h1v1h-1zM663 420h1v1h-1zM663 408h1v1h-1zM663 396h1v1h-1zM663 384h1v1h-1zM663 371h1v1h-1zM663 359h1v1h-1zM663 347h1v1h-1zM663 334h1v1h-1zM663 322h1v1h-1zM663 310h1v1h-1zM663 298h1v1h-1zM663 285h1v1h-1zM663 273h1v1h-1zM663 261h1v1h-1zM663 249h1v1h-1zM663 236h1v1h-1zM663 224h1v1h-1zM663 212h1v1h-1zM663 199h1v1h-1zM663 187h1v1h-1zM663 175h1v1h-1zM663 163h1v1h-1zM663 150h1v1h-1zM663 138h1v1h-1zM663 126h1v1h-1zM663 114h1v1h-1zM663 101h1v1h-1zM663 89h1v1h-1zM663 77h1v1h-1zM663 64h1v1h-1zM663 52h1v1h-1zM663 40h1v1h-1zM663 28h1v1h-1zM663 15h1v1h-1zM663 3h1v1h-1zM676 568h1v1h-1zM676 555h1v1h-1zM676 543h1v1h-1zM676 531h1v1h-1zM676 518h1v1h-1zM676 506h1v1h-1zM676 494h1v1h-1zM676 482h1v1h-1zM676 469h1v1h-1zM676 457h1v1h-1zM676 445h1v1h-1zM676 433h1v1h-1zM676 420h1v1h-1zM676 408h1v1h-1zM676 396h1v1h-1zM676 384h1v1h-1zM676 371h1v1h-1zM676 359h1v1h-1zM676 347h1v1h-1zM676 334h1v1h-1zM676 322h1v1h-1zM676 310h1v1h-1zM676 298h1v1h-1zM676 285h1v1h-1zM676 273h1v1h-1zM676 261h1v1h-1zM676 249h1v1h-1zM676 236h1v1h-1zM676 224h1v1h-1zM676 212h1v1h-1zM676 199h1v1h-1zM676 187h1v1h-1zM676 175h1v1h-1zM676 163h1v1h-1zM676 150h1v1h-1zM676 138h1v1h-1zM676 126h1v1h-1zM676 114h1v1h-1zM676 101h1v1h-1zM676 89h1v1h-1zM676 77h1v1h-1zM676 64h1v1h-1zM676 52h1v1h-1zM676 40h1v1h-1zM676 28h1v1h-1zM676 15h1v1h-1zM676 3h1v1h-1zM688 568h1v1h-1zM688 555h1v1h-1zM688 543h1v1h-1zM688 531h1v1h-1zM688 518h1v1h-1zM688 506h1v1h-1zM688 494h1v1h-1zM688 482h1v1h-1zM688 469h1v1h-1zM688 457h1v1h-1zM688 445h1v1h-1zM688 433h1v1h-1zM688 420h1v1h-1zM688 408h1v1h-1zM688 396h1v1h-1zM688 384h1v1h-1zM688 371h1v1h-1zM688 359h1v1h-1zM688 347h1v1h-1zM688 334h1v1h-1zM688 322h1v1h-1zM688 310h1v1h-1zM688 298h1v1h-1zM688 285h1v1h-1zM688 273h1v1h-1zM688 261h1v1h-1zM688 249h1v1h-1zM688 236h1v1h-1zM688 224h1v1h-1zM688 212h1v1h-1zM688 199h1v1h-1zM688 187h1v1h-1zM688 175h1v1h-1zM688 163h1v1h-1zM688 150h1v1h-1zM688 138h1v1h-1zM688 126h1v1h-1zM688 114h1v1h-1zM688 101h1v1h-1zM688 89h1v1h-1zM688 77h1v1h-1zM688 64h1v1h-1zM688 52h1v1h-1zM688 40h1v1h-1zM688 28h1v1h-1zM688 15h1v1h-1zM688 3h1v1h-1zM700 568h1v1h-1zM700 555h1v1h-1zM700 543h1v1h-1zM700 531h1v1h-1zM700 518h1v1h-1zM700 506h1v1h-1zM700 494h1v1h-1zM700 482h1v1h-1zM700 469h1v1h-1zM700 457h1v1h-1zM700 445h1v1h-1zM700 433h1v1h-1zM700 420h1v1h-1zM700 408h1v1h-1zM700 396h1v1h-1zM700 384h1v1h-1zM700 371h1v1h-1zM700 359h1v1h-1zM700 347h1v1h-1zM700 334h1v1h-1zM700 322h1v1h-1zM700 310h1v1h-1zM700 298h1v1h-1zM700 285h1v1h-1zM700 273h1v1h-1zM700 261h1v1h-1zM700 249h1v1h-1zM700 236h1v1h-1zM700 224h1v1h-1zM700 212h1v1h-1zM700 199h1v1h-1zM700 187h1v1h-1zM700 175h1v1h-1zM700 163h1v1h-1zM700 150h1v1h-1zM700 138h1v1h-1zM700 126h1v1h-1zM700 114h1v1h-1zM700 101h1v1h-1zM700 89h1v1h-1zM700 77h1v1h-1zM700 64h1v1h-1zM700 52h1v1h-1zM700 40h1v1h-1zM700 28h1v1h-1zM700 15h1v1h-1zM700 3h1v1h-1zM712 568h1v1h-1zM712 555h1v1h-1zM712 543h1v1h-1zM712 531h1v1h-1zM712 518h1v1h-1zM712 506h1v1h-1zM712 494h1v1h-1zM712 482h1v1h-1zM712 469h1v1h-1zM712 457h1v1h-1zM712 445h1v1h-1zM712 433h1v1h-1zM712 420h1v1h-1zM712 408h1v1h-1zM712 396h1v1h-1zM712 384h1v1h-1zM712 371h1v1h-1zM712 359h1v1h-1zM712 347h1v1h-1zM712 334h1v1h-1zM712 322h1v1h-1zM712 310h1v1h-1zM712 298h1v1h-1zM712 285h1v1h-1zM712 273h1v1h-1zM712 261h1v1h-1zM712 249h1v1h-1zM712 236h1v1h-1zM712 224h1v1h-1zM712 212h1v1h-1zM712 199h1v1h-1zM712 187h1v1h-1zM712 175h1v1h-1zM712 163h1v1h-1zM712 150h1v1h-1zM712 138h1v1h-1zM712 126h1v1h-1zM712 114h1v1h-1zM712 101h1v1h-1zM712 89h1v1h-1zM712 77h1v1h-1zM712 64h1v1h-1zM712 52h1v1h-1zM712 40h1v1h-1zM712 28h1v1h-1zM712 15h1v1h-1zM712 3h1v1h-1zM725 568h1v1h-1zM725 555h1v1h-1zM725 543h1v1h-1zM725 531h1v1h-1zM725 518h1v1h-1zM725 506h1v1h-1zM725 494h1v1h-1zM725 482h1v1h-1zM725 469h1v1h-1zM725 457h1v1h-1zM725 445h1v1h-1zM725 433h1v1h-1zM725 420h1v1h-1zM725 408h1v1h-1zM725 396h1v1h-1zM725 384h1v1h-1zM725 371h1v1h-1zM725 359h1v1h-1zM725 347h1v1h-1zM725 334h1v1h-1zM725 322h1v1h-1zM725 310h1v1h-1zM725 298h1v1h-1zM725 285h1v1h-1zM725 273h1v1h-1zM725 261h1v1h-1zM725 249h1v1h-1zM725 236h1v1h-1zM725 224h1v1h-1zM725 212h1v1h-1zM725 199h1v1h-1zM725 187h1v1h-1zM725 175h1v1h-1zM725 163h1v1h-1zM725 150h1v1h-1zM725 138h1v1h-1zM725 126h1v1h-1zM725 114h1v1h-1zM725 101h1v1h-1zM725 89h1v1h-1zM725 77h1v1h-1zM725 64h1v1h-1zM725 52h1v1h-1zM725 40h1v1h-1zM725 28h1v1h-1zM725 15h1v1h-1zM725 3h1v1h-1zM737 568h1v1h-1zM737 555h1v1h-1zM737 543h1v1h-1zM737 531h1v1h-1zM737 518h1v1h-1zM737 506h1v1h-1zM737 494h1v1h-1zM737 482h1v1h-1zM737 469h1v1h-1zM737 457h1v1h-1zM737 445h1v1h-1zM737 433h1v1h-1zM737 420h1v1h-1zM737 408h1v1h-1zM737 396h1v1h-1zM737 384h1v1h-1zM737 371h1v1h-1zM737 359h1v1h-1zM737 347h1v1h-1zM737 334h1v1h-1zM737 322h1v1h-1zM737 310h1v1h-1zM737 298h1v1h-1zM737 285h1v1h-1zM737 273h1v1h-1zM737 261h1v1h-1zM737 249h1v1h-1zM737 236h1v1h-1zM737 224h1v1h-1zM737 212h1v1h-1zM737 199h1v1h-1zM737 187h1v1h-1zM737 175h1v1h-1zM737 163h1v1h-1zM737 150h1v1h-1zM737 138h1v1h-1zM737 126h1v1h-1zM737 114h1v1h-1zM737 101h1v1h-1zM737 89h1v1h-1zM737 77h1v1h-1zM737 64h1v1h-1zM737 52h1v1h-1zM737 40h1v1h-1zM737 28h1v1h-1zM737 15h1v1h-1zM737 3h1v1h-1zM749 568h1v1h-1zM749 555h1v1h-1zM749 543h1v1h-1zM749 531h1v1h-1zM749 518h1v1h-1zM749 506h1v1h-1zM749 494h1v1h-1zM749 482h1v1h-1zM749 469h1v1h-1zM749 457h1v1h-1zM749 445h1v1h-1zM749 433h1v1h-1zM749 420h1v1h-1zM749 408h1v1h-1zM749 396h1v1h-1zM749 384h1v1h-1zM749 371h1v1h-1zM749 359h1v1h-1zM749 347h1v1h-1zM749 334h1v1h-1zM749 322h1v1h-1zM749 310h1v1h-1zM749 298h1v1h-1zM749 285h1v1h-1zM749 273h1v1h-1zM749 261h1v1h-1zM749 249h1v1h-1zM749 236h1v1h-1zM749 224h1v1h-1zM749 212h1v1h-1zM749 199h1v1h-1zM749 187h1v1h-1zM749 175h1v1h-1zM749 163h1v1h-1zM749 150h1v1h-1zM749 138h1v1h-1zM749 126h1v1h-1zM749 114h1v1h-1zM749 101h1v1h-1zM749 89h1v1h-1zM749 77h1v1h-1zM749 64h1v1h-1zM749 52h1v1h-1zM749 40h1v1h-1zM749 28h1v1h-1zM749 15h1v1h-1zM749 3h1v1h-1zM761 568h1v1h-1zM761 555h1v1h-1zM761 543h1v1h-1zM761 531h1v1h-1zM761 518h1v1h-1zM761 506h1v1h-1zM761 494h1v1h-1zM761 482h1v1h-1zM761 469h1v1h-1zM761 457h1v1h-1zM761 445h1v1h-1zM761 433h1v1h-1zM761 420h1v1h-1zM761 408h1v1h-1zM761 396h1v1h-1zM761 384h1v1h-1zM761 371h1v1h-1zM761 359h1v1h-1zM761 347h1v1h-1zM761 334h1v1h-1zM761 322h1v1h-1zM761 310h1v1h-1zM761 298h1v1h-1zM761 285h1v1h-1zM761 273h1v1h-1zM761 261h1v1h-1zM761 249h1v1h-1zM761 236h1v1h-1zM761 224h1v1h-1zM761 212h1v1h-1zM761 199h1v1h-1zM761 187h1v1h-1zM761 175h1v1h-1zM761 163h1v1h-1zM761 150h1v1h-1zM761 138h1v1h-1zM761 126h1v1h-1zM761 114h1v1h-1zM761 101h1v1h-1zM761 89h1v1h-1zM761 77h1v1h-1zM761 64h1v1h-1zM761 52h1v1h-1zM761 40h1v1h-1zM761 28h1v1h-1zM761 15h1v1h-1zM761 3h1v1h-1zM774 568h1v1h-1zM774 555h1v1h-1zM774 543h1v1h-1zM774 531h1v1h-1zM774 518h1v1h-1zM774 506h1v1h-1zM774 494h1v1h-1zM774 482h1v1h-1zM774 469h1v1h-1zM774 457h1v1h-1zM774 445h1v1h-1zM774 433h1v1h-1zM774 420h1v1h-1zM774 408h1v1h-1zM774 396h1v1h-1zM774 384h1v1h-1zM774 371h1v1h-1zM774 359h1v1h-1zM774 347h1v1h-1zM774 334h1v1h-1zM774 322h1v1h-1zM774 310h1v1h-1zM774 298h1v1h-1zM774 285h1v1h-1zM774 273h1v1h-1zM774 261h1v1h-1zM774 249h1v1h-1zM774 236h1v1h-1zM774 224h1v1h-1zM774 212h1v1h-1zM774 199h1v1h-1zM774 187h1v1h-1zM774 175h1v1h-1zM774 163h1v1h-1zM774 150h1v1h-1zM774 138h1v1h-1zM774 126h1v1h-1zM774 114h1v1h-1zM774 101h1v1h-1zM774 89h1v1h-1zM774 77h1v1h-1zM774 64h1v1h-1zM774 52h1v1h-1zM774 40h1v1h-1zM774 28h1v1h-1zM774 15h1v1h-1zM774 3h1v1h-1zM786 568h1v1h-1zM786 555h1v1h-1zM786 543h1v1h-1zM786 531h1v1h-1zM786 518h1v1h-1zM786 506h1v1h-1zM786 494h1v1h-1zM786 482h1v1h-1zM786 469h1v1h-1zM786 457h1v1h-1zM786 445h1v1h-1zM786 433h1v1h-1zM786 420h1v1h-1zM786 408h1v1h-1zM786 396h1v1h-1zM786 384h1v1h-1zM786 371h1v1h-1zM786 359h1v1h-1zM786 347h1v1h-1zM786 334h1v1h-1zM786 322h1v1h-1zM786 310h1v1h-1zM786 298h1v1h-1zM786 285h1v1h-1zM786 273h1v1h-1zM786 261h1v1h-1zM786 249h1v1h-1zM786 236h1v1h-1zM786 224h1v1h-1zM786 212h1v1h-1zM786 199h1v1h-1zM786 187h1v1h-1zM786 175h1v1h-1zM786 163h1v1h-1zM786 150h1v1h-1zM786 138h1v1h-1zM786 126h1v1h-1zM786 114h1v1h-1zM786 101h1v1h-1zM786 89h1v1h-1zM786 77h1v1h-1zM786 64h1v1h-1zM786 52h1v1h-1zM786 40h1v1h-1zM786 28h1v1h-1zM786 15h1v1h-1zM786 3h1v1h-1zM798 568h1v1h-1zM798 555h1v1h-1zM798 543h1v1h-1zM798 531h1v1h-1zM798 518h1v1h-1zM798 506h1v1h-1zM798 494h1v1h-1zM798 482h1v1h-1zM798 469h1v1h-1zM798 457h1v1h-1zM798 445h1v1h-1zM798 433h1v1h-1zM798 420h1v1h-1zM798 408h1v1h-1zM798 396h1v1h-1zM798 384h1v1h-1zM798 371h1v1h-1zM798 359h1v1h-1zM798 347h1v1h-1zM798 334h1v1h-1zM798 322h1v1h-1zM798 310h1v1h-1zM798 298h1v1h-1zM798 285h1v1h-1zM798 273h1v1h-1zM798 261h1v1h-1zM798 249h1v1h-1zM798 236h1v1h-1zM798 224h1v1h-1zM798 212h1v1h-1zM798 199h1v1h-1zM798 187h1v1h-1zM798 175h1v1h-1zM798 163h1v1h-1zM798 150h1v1h-1zM798 138h1v1h-1zM798 126h1v1h-1zM798 114h1v1h-1zM798 101h1v1h-1zM798 89h1v1h-1zM798 77h1v1h-1zM798 64h1v1h-1zM798 52h1v1h-1zM798 40h1v1h-1zM798 28h1v1h-1zM798 15h1v1h-1zM798 3h1v1h-1zM811 568h1v1h-1zM811 555h1v1h-1zM811 543h1v1h-1zM811 531h1v1h-1zM811 518h1v1h-1zM811 506h1v1h-1zM811 494h1v1h-1zM811 482h1v1h-1zM811 469h1v1h-1zM811 457h1v1h-1zM811 445h1v1h-1zM811 433h1v1h-1zM811 420h1v1h-1zM811 408h1v1h-1zM811 396h1v1h-1zM811 384h1v1h-1zM811 371h1v1h-1zM811 359h1v1h-1zM811 347h1v1h-1zM811 334h1v1h-1zM811 322h1v1h-1zM811 310h1v1h-1zM811 298h1v1h-1zM811 285h1v1h-1zM811 273h1v1h-1zM811 261h1v1h-1zM811 249h1v1h-1zM811 236h1v1h-1zM811 224h1v1h-1zM811 212h1v1h-1zM811 199h1v1h-1zM811 187h1v1h-1zM811 175h1v1h-1zM811 163h1v1h-1zM811 150h1v1h-1zM811 138h1v1h-1zM811 126h1v1h-1zM811 114h1v1h-1zM811 101h1v1h-1zM811 89h1v1h-1zM811 77h1v1h-1zM811 64h1v1h-1zM811 52h1v1h-1zM811 40h1v1h-1zM811 28h1v1h-1zM811 15h1v1h-1zM811 3h1v1h-1zM823 568h1v1h-1zM823 555h1v1h-1zM823 543h1v1h-1zM823 531h1v1h-1zM823 518h1v1h-1zM823 506h1v1h-1zM823 494h1v1h-1zM823 482h1v1h-1zM823 469h1v1h-1zM823 457h1v1h-1zM823 445h1v1h-1zM823 433h1v1h-1zM823 420h1v1h-1zM823 408h1v1h-1zM823 396h1v1h-1zM823 384h1v1h-1zM823 371h1v1h-1zM823 359h1v1h-1zM823 347h1v1h-1zM823 334h1v1h-1zM823 322h1v1h-1zM823 310h1v1h-1zM823 298h1v1h-1zM823 285h1v1h-1zM823 273h1v1h-1zM823 261h1v1h-1zM823 249h1v1h-1zM823 236h1v1h-1zM823 224h1v1h-1zM823 212h1v1h-1zM823 199h1v1h-1zM823 187h1v1h-1zM823 175h1v1h-1zM823 163h1v1h-1zM823 150h1v1h-1zM823 138h1v1h-1zM823 126h1v1h-1zM823 114h1v1h-1zM823 101h1v1h-1zM823 89h1v1h-1zM823 77h1v1h-1zM823 64h1v1h-1zM823 52h1v1h-1zM823 40h1v1h-1zM823 28h1v1h-1zM823 15h1v1h-1zM823 3h1v1h-1zM835 568h1v1h-1zM835 555h1v1h-1zM835 543h1v1h-1zM835 531h1v1h-1zM835 518h1v1h-1zM835 506h1v1h-1zM835 494h1v1h-1zM835 482h1v1h-1zM835 469h1v1h-1zM835 457h1v1h-1zM835 445h1v1h-1zM835 433h1v1h-1zM835 420h1v1h-1zM835 408h1v1h-1zM835 396h1v1h-1zM835 384h1v1h-1zM835 371h1v1h-1zM835 359h1v1h-1zM835 347h1v1h-1zM835 334h1v1h-1zM835 322h1v1h-1zM835 310h1v1h-1zM835 298h1v1h-1zM835 285h1v1h-1zM835 273h1v1h-1zM835 261h1v1h-1zM835 249h1v1h-1zM835 236h1v1h-1zM835 224h1v1h-1zM835 212h1v1h-1zM835 199h1v1h-1zM835 187h1v1h-1zM835 175h1v1h-1zM835 163h1v1h-1zM835 150h1v1h-1zM835 138h1v1h-1zM835 126h1v1h-1zM835 114h1v1h-1zM835 101h1v1h-1zM835 89h1v1h-1zM835 77h1v1h-1zM835 64h1v1h-1zM835 52h1v1h-1zM835 40h1v1h-1zM835 28h1v1h-1zM835 15h1v1h-1zM835 3h1v1h-1zM847 568h1v1h-1zM847 555h1v1h-1zM847 543h1v1h-1zM847 531h1v1h-1zM847 518h1v1h-1zM847 506h1v1h-1zM847 494h1v1h-1zM847 482h1v1h-1zM847 469h1v1h-1zM847 457h1v1h-1zM847 445h1v1h-1zM847 433h1v1h-1zM847 420h1v1h-1zM847 408h1v1h-1zM847 396h1v1h-1zM847 384h1v1h-1zM847 371h1v1h-1zM847 359h1v1h-1zM847 347h1v1h-1zM847 334h1v1h-1zM847 322h1v1h-1zM847 310h1v1h-1zM847 298h1v1h-1zM847 285h1v1h-1zM847 273h1v1h-1zM847 261h1v1h-1zM847 249h1v1h-1zM847 236h1v1h-1zM847 224h1v1h-1zM847 212h1v1h-1zM847 199h1v1h-1zM847 187h1v1h-1zM847 175h1v1h-1zM847 163h1v1h-1zM847 150h1v1h-1zM847 138h1v1h-1zM847 126h1v1h-1zM847 114h1v1h-1zM847 101h1v1h-1zM847 89h1v1h-1zM847 77h1v1h-1zM847 64h1v1h-1zM847 52h1v1h-1zM847 40h1v1h-1zM847 28h1v1h-1zM847 15h1v1h-1zM847 3h1v1h-1zM860 568h1v1h-1zM860 555h1v1h-1zM860 543h1v1h-1zM860 531h1v1h-1zM860 518h1v1h-1zM860 506h1v1h-1zM860 494h1v1h-1zM860 482h1v1h-1zM860 469h1v1h-1zM860 457h1v1h-1zM860 445h1v1h-1zM860 433h1v1h-1zM860 420h1v1h-1zM860 408h1v1h-1zM860 396h1v1h-1zM860 384h1v1h-1zM860 371h1v1h-1zM860 359h1v1h-1zM860 347h1v1h-1zM860 334h1v1h-1zM860 322h1v1h-1zM860 310h1v1h-1zM860 298h1v1h-1zM860 285h1v1h-1zM860 273h1v1h-1zM860 261h1v1h-1zM860 249h1v1h-1zM860 236h1v1h-1zM860 224h1v1h-1zM860 212h1v1h-1zM860 199h1v1h-1zM860 187h1v1h-1zM860 175h1v1h-1zM860 163h1v1h-1zM860 150h1v1h-1zM860 138h1v1h-1zM860 126h1v1h-1zM860 114h1v1h-1zM860 101h1v1h-1zM860 89h1v1h-1zM860 77h1v1h-1zM860 64h1v1h-1zM860 52h1v1h-1zM860 40h1v1h-1zM860 28h1v1h-1zM860 15h1v1h-1zM860 3h1v1h-1zM872 568h1v1h-1zM872 555h1v1h-1zM872 543h1v1h-1zM872 531h1v1h-1zM872 518h1v1h-1zM872 506h1v1h-1zM872 494h1v1h-1zM872 482h1v1h-1zM872 469h1v1h-1zM872 457h1v1h-1zM872 445h1v1h-1zM872 433h1v1h-1zM872 420h1v1h-1zM872 408h1v1h-1zM872 396h1v1h-1zM872 384h1v1h-1zM872 371h1v1h-1zM872 359h1v1h-1zM872 347h1v1h-1zM872 334h1v1h-1zM872 322h1v1h-1zM872 310h1v1h-1zM872 298h1v1h-1zM872 285h1v1h-1zM872 273h1v1h-1zM872 261h1v1h-1zM872 249h1v1h-1zM872 236h1v1h-1zM872 224h1v1h-1zM872 212h1v1h-1zM872 199h1v1h-1zM872 187h1v1h-1zM872 175h1v1h-1zM872 163h1v1h-1zM872 150h1v1h-1zM872 138h1v1h-1zM872 126h1v1h-1zM872 114h1v1h-1zM872 101h1v1h-1zM872 89h1v1h-1zM872 77h1v1h-1zM872 64h1v1h-1zM872 52h1v1h-1zM872 40h1v1h-1zM872 28h1v1h-1zM872 15h1v1h-1zM872 3h1v1h-1zM884 568h1v1h-1zM884 555h1v1h-1zM884 543h1v1h-1zM884 531h1v1h-1zM884 518h1v1h-1zM884 506h1v1h-1zM884 494h1v1h-1zM884 482h1v1h-1zM884 469h1v1h-1zM884 457h1v1h-1zM884 445h1v1h-1zM884 433h1v1h-1zM884 420h1v1h-1zM884 408h1v1h-1zM884 396h1v1h-1zM884 384h1v1h-1zM884 371h1v1h-1zM884 359h1v1h-1zM884 347h1v1h-1zM884 334h1v1h-1zM884 322h1v1h-1zM884 310h1v1h-1zM884 298h1v1h-1zM884 285h1v1h-1zM884 273h1v1h-1zM884 261h1v1h-1zM884 249h1v1h-1zM884 236h1v1h-1zM884 224h1v1h-1zM884 212h1v1h-1zM884 199h1v1h-1zM884 187h1v1h-1zM884 175h1v1h-1zM884 163h1v1h-1zM884 150h1v1h-1zM884 138h1v1h-1zM884 126h1v1h-1zM884 114h1v1h-1zM884 101h1v1h-1zM884 89h1v1h-1zM884 77h1v1h-1zM884 64h1v1h-1zM884 52h1v1h-1zM884 40h1v1h-1zM884 28h1v1h-1zM884 15h1v1h-1zM884 3h1v1h-1zM896 568h1v1h-1zM896 555h1v1h-1zM896 543h1v1h-1zM896 531h1v1h-1zM896 518h1v1h-1zM896 506h1v1h-1zM896 494h1v1h-1zM896 482h1v1h-1zM896 469h1v1h-1zM896 457h1v1h-1zM896 445h1v1h-1zM896 433h1v1h-1zM896 420h1v1h-1zM896 408h1v1h-1zM896 396h1v1h-1zM896 384h1v1h-1zM896 371h1v1h-1zM896 359h1v1h-1zM896 347h1v1h-1zM896 334h1v1h-1zM896 322h1v1h-1zM896 310h1v1h-1zM896 298h1v1h-1zM896 285h1v1h-1zM896 273h1v1h-1zM896 261h1v1h-1zM896 249h1v1h-1zM896 236h1v1h-1zM896 224h1v1h-1zM896 212h1v1h-1zM896 199h1v1h-1zM896 187h1v1h-1zM896 175h1v1h-1zM896 163h1v1h-1zM896 150h1v1h-1zM896 138h1v1h-1zM896 126h1v1h-1zM896 114h1v1h-1zM896 101h1v1h-1zM896 89h1v1h-1zM896 77h1v1h-1zM896 64h1v1h-1zM896 52h1v1h-1zM896 40h1v1h-1zM896 28h1v1h-1zM896 15h1v1h-1zM896 3h1v1h-1zM909 568h1v1h-1zM909 555h1v1h-1zM909 543h1v1h-1zM909 531h1v1h-1zM909 518h1v1h-1zM909 506h1v1h-1zM909 494h1v1h-1zM909 482h1v1h-1zM909 469h1v1h-1zM909 457h1v1h-1zM909 445h1v1h-1zM909 433h1v1h-1zM909 420h1v1h-1zM909 408h1v1h-1zM909 396h1v1h-1zM909 384h1v1h-1zM909 371h1v1h-1zM909 359h1v1h-1zM909 347h1v1h-1zM909 334h1v1h-1zM909 322h1v1h-1zM909 310h1v1h-1zM909 298h1v1h-1zM909 285h1v1h-1zM909 273h1v1h-1zM909 261h1v1h-1zM909 249h1v1h-1zM909 236h1v1h-1zM909 224h1v1h-1zM909 212h1v1h-1zM909 199h1v1h-1zM909 187h1v1h-1zM909 175h1v1h-1zM909 163h1v1h-1zM909 150h1v1h-1zM909 138h1v1h-1zM909 126h1v1h-1zM909 114h1v1h-1zM909 101h1v1h-1zM909 89h1v1h-1zM909 77h1v1h-1zM909 64h1v1h-1zM909 52h1v1h-1zM909 40h1v1h-1zM909 28h1v1h-1zM909 15h1v1h-1zM909 3h1v1h-1zM921 568h1v1h-1zM921 555h1v1h-1zM921 543h1v1h-1zM921 531h1v1h-1zM921 518h1v1h-1zM921 506h1v1h-1zM921 494h1v1h-1zM921 482h1v1h-1zM921 469h1v1h-1zM921 457h1v1h-1zM921 445h1v1h-1zM921 433h1v1h-1zM921 420h1v1h-1zM921 408h1v1h-1zM921 396h1v1h-1zM921 384h1v1h-1zM921 371h1v1h-1zM921 359h1v1h-1zM921 347h1v1h-1zM921 334h1v1h-1zM921 322h1v1h-1zM921 310h1v1h-1zM921 298h1v1h-1zM921 285h1v1h-1zM921 273h1v1h-1zM921 261h1v1h-1zM921 249h1v1h-1zM921 236h1v1h-1zM921 224h1v1h-1zM921 212h1v1h-1zM921 199h1v1h-1zM921 187h1v1h-1zM921 175h1v1h-1zM921 163h1v1h-1zM921 150h1v1h-1zM921 138h1v1h-1zM921 126h1v1h-1zM921 114h1v1h-1zM921 101h1v1h-1zM921 89h1v1h-1zM921 77h1v1h-1zM921 64h1v1h-1zM921 52h1v1h-1zM921 40h1v1h-1zM921 28h1v1h-1zM921 15h1v1h-1zM921 3h1v1h-1zM933 568h1v1h-1zM933 555h1v1h-1zM933 543h1v1h-1zM933 531h1v1h-1zM933 518h1v1h-1zM933 506h1v1h-1zM933 494h1v1h-1zM933 482h1v1h-1zM933 469h1v1h-1zM933 457h1v1h-1zM933 445h1v1h-1zM933 433h1v1h-1zM933 420h1v1h-1zM933 408h1v1h-1zM933 396h1v1h-1zM933 384h1v1h-1zM933 371h1v1h-1zM933 359h1v1h-1zM933 347h1v1h-1zM933 334h1v1h-1zM933 322h1v1h-1zM933 310h1v1h-1zM933 298h1v1h-1zM933 285h1v1h-1zM933 273h1v1h-1zM933 261h1v1h-1zM933 249h1v1h-1zM933 236h1v1h-1zM933 224h1v1h-1zM933 212h1v1h-1zM933 199h1v1h-1zM933 187h1v1h-1zM933 175h1v1h-1zM933 163h1v1h-1zM933 150h1v1h-1zM933 138h1v1h-1zM933 126h1v1h-1zM933 114h1v1h-1zM933 101h1v1h-1zM933 89h1v1h-1zM933 77h1v1h-1zM933 64h1v1h-1zM933 52h1v1h-1zM933 40h1v1h-1zM933 28h1v1h-1zM933 15h1v1h-1zM933 3h1v1h-1zM946 568h1v1h-1zM946 555h1v1h-1zM946 543h1v1h-1zM946 531h1v1h-1zM946 518h1v1h-1zM946 506h1v1h-1zM946 494h1v1h-1zM946 482h1v1h-1zM946 469h1v1h-1zM946 457h1v1h-1zM946 445h1v1h-1zM946 433h1v1h-1zM946 420h1v1h-1zM946 408h1v1h-1zM946 396h1v1h-1zM946 384h1v1h-1zM946 371h1v1h-1zM946 359h1v1h-1zM946 347h1v1h-1zM946 334h1v1h-1zM946 322h1v1h-1zM946 310h1v1h-1zM946 298h1v1h-1zM946 285h1v1h-1zM946 273h1v1h-1zM946 261h1v1h-1zM946 249h1v1h-1zM946 236h1v1h-1zM946 224h1v1h-1zM946 212h1v1h-1zM946 199h1v1h-1zM946 187h1v1h-1zM946 175h1v1h-1zM946 163h1v1h-1zM946 150h1v1h-1zM946 138h1v1h-1zM946 126h1v1h-1zM946 114h1v1h-1zM946 101h1v1h-1zM946 89h1v1h-1zM946 77h1v1h-1zM946 64h1v1h-1zM946 52h1v1h-1zM946 40h1v1h-1zM946 28h1v1h-1zM946 15h1v1h-1zM946 3h1v1h-1zM958 568h1v1h-1zM958 555h1v1h-1zM958 543h1v1h-1zM958 531h1v1h-1zM958 518h1v1h-1zM958 506h1v1h-1zM958 494h1v1h-1zM958 482h1v1h-1zM958 469h1v1h-1zM958 457h1v1h-1zM958 445h1v1h-1zM958 433h1v1h-1zM958 420h1v1h-1zM958 408h1v1h-1zM958 396h1v1h-1zM958 384h1v1h-1zM958 371h1v1h-1zM958 359h1v1h-1zM958 347h1v1h-1zM958 334h1v1h-1zM958 322h1v1h-1zM958 310h1v1h-1zM958 298h1v1h-1zM958 285h1v1h-1zM958 273h1v1h-1zM958 261h1v1h-1zM958 249h1v1h-1zM958 236h1v1h-1zM958 224h1v1h-1zM958 212h1v1h-1zM958 199h1v1h-1zM958 187h1v1h-1zM958 175h1v1h-1zM958 163h1v1h-1zM958 150h1v1h-1zM958 138h1v1h-1zM958 126h1v1h-1zM958 114h1v1h-1zM958 101h1v1h-1zM958 89h1v1h-1zM958 77h1v1h-1zM958 64h1v1h-1zM958 52h1v1h-1zM958 40h1v1h-1zM958 28h1v1h-1zM958 15h1v1h-1zM958 3h1v1h-1zM970 568h1v1h-1zM970 555h1v1h-1zM970 543h1v1h-1zM970 531h1v1h-1zM970 518h1v1h-1zM970 506h1v1h-1zM970 494h1v1h-1zM970 482h1v1h-1zM970 469h1v1h-1zM970 457h1v1h-1zM970 445h1v1h-1zM970 433h1v1h-1zM970 420h1v1h-1zM970 408h1v1h-1zM970 396h1v1h-1zM970 384h1v1h-1zM970 371h1v1h-1zM970 359h1v1h-1zM970 347h1v1h-1zM970 334h1v1h-1zM970 322h1v1h-1zM970 310h1v1h-1zM970 298h1v1h-1zM970 285h1v1h-1zM970 273h1v1h-1zM970 261h1v1h-1zM970 249h1v1h-1zM970 236h1v1h-1zM970 224h1v1h-1zM970 212h1v1h-1zM970 199h1v1h-1zM970 187h1v1h-1zM970 175h1v1h-1zM970 163h1v1h-1zM970 150h1v1h-1zM970 138h1v1h-1zM970 126h1v1h-1zM970 114h1v1h-1zM970 101h1v1h-1zM970 89h1v1h-1zM970 77h1v1h-1zM970 64h1v1h-1zM970 52h1v1h-1zM970 40h1v1h-1zM970 28h1v1h-1zM970 15h1v1h-1zM970 3h1v1h-1zM982 568h1v1h-1zM982 555h1v1h-1zM982 543h1v1h-1zM982 531h1v1h-1zM982 518h1v1h-1zM982 506h1v1h-1zM982 494h1v1h-1zM982 482h1v1h-1zM982 469h1v1h-1zM982 457h1v1h-1zM982 445h1v1h-1zM982 433h1v1h-1zM982 420h1v1h-1zM982 408h1v1h-1zM982 396h1v1h-1zM982 384h1v1h-1zM982 371h1v1h-1zM982 359h1v1h-1zM982 347h1v1h-1zM982 334h1v1h-1zM982 322h1v1h-1zM982 310h1v1h-1zM982 298h1v1h-1zM982 285h1v1h-1zM982 273h1v1h-1zM982 261h1v1h-1zM982 249h1v1h-1zM982 236h1v1h-1zM982 224h1v1h-1zM982 212h1v1h-1zM982 199h1v1h-1zM982 187h1v1h-1zM982 175h1v1h-1zM982 163h1v1h-1zM982 150h1v1h-1zM982 138h1v1h-1zM982 126h1v1h-1zM982 114h1v1h-1zM982 101h1v1h-1zM982 89h1v1h-1zM982 77h1v1h-1zM982 64h1v1h-1zM982 52h1v1h-1zM982 40h1v1h-1zM982 28h1v1h-1zM982 15h1v1h-1zM982 3h1v1h-1zM995 568h1v1h-1zM995 555h1v1h-1zM995 543h1v1h-1zM995 531h1v1h-1zM995 518h1v1h-1zM995 506h1v1h-1zM995 494h1v1h-1zM995 482h1v1h-1zM995 469h1v1h-1zM995 457h1v1h-1zM995 445h1v1h-1zM995 433h1v1h-1zM995 420h1v1h-1zM995 408h1v1h-1zM995 396h1v1h-1zM995 384h1v1h-1zM995 371h1v1h-1zM995 359h1v1h-1zM995 347h1v1h-1zM995 334h1v1h-1zM995 322h1v1h-1zM995 310h1v1h-1zM995 298h1v1h-1zM995 285h1v1h-1zM995 273h1v1h-1zM995 261h1v1h-1zM995 249h1v1h-1zM995 236h1v1h-1zM995 224h1v1h-1zM995 212h1v1h-1zM995 199h1v1h-1zM995 187h1v1h-1zM995 175h1v1h-1zM995 163h1v1h-1zM995 150h1v1h-1zM995 138h1v1h-1zM995 126h1v1h-1zM995 114h1v1h-1zM995 101h1v1h-1zM995 89h1v1h-1zM995 77h1v1h-1zM995 64h1v1h-1zM995 52h1v1h-1zM995 40h1v1h-1zM995 28h1v1h-1zM995 15h1v1h-1zM995 3h1v1h-1zM1007 568h1v1h-1zM1007 555h1v1h-1zM1007 543h1v1h-1zM1007 531h1v1h-1zM1007 518h1v1h-1zM1007 506h1v1h-1zM1007 494h1v1h-1zM1007 482h1v1h-1zM1007 469h1v1h-1zM1007 457h1v1h-1zM1007 445h1v1h-1zM1007 433h1v1h-1zM1007 420h1v1h-1zM1007 408h1v1h-1zM1007 396h1v1h-1zM1007 384h1v1h-1zM1007 371h1v1h-1zM1007 359h1v1h-1zM1007 347h1v1h-1zM1007 334h1v1h-1zM1007 322h1v1h-1zM1007 310h1v1h-1zM1007 298h1v1h-1zM1007 285h1v1h-1zM1007 273h1v1h-1zM1007 261h1v1h-1zM1007 249h1v1h-1zM1007 236h1v1h-1zM1007 224h1v1h-1zM1007 212h1v1h-1zM1007 199h1v1h-1zM1007 187h1v1h-1zM1007 175h1v1h-1zM1007 163h1v1h-1zM1007 150h1v1h-1zM1007 138h1v1h-1zM1007 126h1v1h-1zM1007 114h1v1h-1zM1007 101h1v1h-1zM1007 89h1v1h-1zM1007 77h1v1h-1zM1007 64h1v1h-1zM1007 52h1v1h-1zM1007 40h1v1h-1zM1007 28h1v1h-1zM1007 15h1v1h-1zM1007 3h1v1h-1zM1019 568h1v1h-1zM1019 555h1v1h-1zM1019 543h1v1h-1zM1019 531h1v1h-1zM1019 518h1v1h-1zM1019 506h1v1h-1zM1019 494h1v1h-1zM1019 482h1v1h-1zM1019 469h1v1h-1zM1019 457h1v1h-1zM1019 445h1v1h-1zM1019 433h1v1h-1zM1019 420h1v1h-1zM1019 408h1v1h-1zM1019 396h1v1h-1zM1019 384h1v1h-1zM1019 371h1v1h-1zM1019 359h1v1h-1zM1019 347h1v1h-1zM1019 334h1v1h-1zM1019 322h1v1h-1zM1019 310h1v1h-1zM1019 298h1v1h-1zM1019 285h1v1h-1zM1019 273h1v1h-1zM1019 261h1v1h-1zM1019 249h1v1h-1zM1019 236h1v1h-1zM1019 224h1v1h-1zM1019 212h1v1h-1zM1019 199h1v1h-1zM1019 187h1v1h-1zM1019 175h1v1h-1zM1019 163h1v1h-1zM1019 150h1v1h-1zM1019 138h1v1h-1zM1019 126h1v1h-1zM1019 114h1v1h-1zM1019 101h1v1h-1zM1019 89h1v1h-1zM1019 77h1v1h-1zM1019 64h1v1h-1zM1019 52h1v1h-1zM1019 40h1v1h-1zM1019 28h1v1h-1zM1019 15h1v1h-1zM1019 3h1v1h-1zM1031 568h1v1h-1zM1031 555h1v1h-1zM1031 543h1v1h-1zM1031 531h1v1h-1zM1031 518h1v1h-1zM1031 506h1v1h-1zM1031 494h1v1h-1zM1031 482h1v1h-1zM1031 469h1v1h-1zM1031 457h1v1h-1zM1031 445h1v1h-1zM1031 433h1v1h-1zM1031 420h1v1h-1zM1031 408h1v1h-1zM1031 396h1v1h-1zM1031 384h1v1h-1zM1031 371h1v1h-1zM1031 359h1v1h-1zM1031 347h1v1h-1zM1031 334h1v1h-1zM1031 322h1v1h-1zM1031 310h1v1h-1zM1031 298h1v1h-1zM1031 285h1v1h-1zM1031 273h1v1h-1zM1031 261h1v1h-1zM1031 249h1v1h-1zM1031 236h1v1h-1zM1031 224h1v1h-1zM1031 212h1v1h-1zM1031 199h1v1h-1zM1031 187h1v1h-1zM1031 175h1v1h-1zM1031 163h1v1h-1zM1031 150h1v1h-1zM1031 138h1v1h-1zM1031 126h1v1h-1zM1031 114h1v1h-1zM1031 101h1v1h-1zM1031 89h1v1h-1zM1031 77h1v1h-1zM1031 64h1v1h-1zM1031 52h1v1h-1zM1031 40h1v1h-1zM1031 28h1v1h-1zM1031 15h1v1h-1zM1031 3h1v1h-1z" fill="#3c3c3c"/></g><g fill="none" stroke="#c8c8c8" stroke-width="1">
<path d="M409 277.5 L715.3 261.5 L794.5 551"/>
<path d="M409.5 283.5 L713 267.5 L791 551 L794.5 551"/>
<path d="M793 580.5 L779.5 629 M799 580.5 L784.5 629 M793 580.5 L799 580.5"/>
<path d="M738.5 255 L776.5 395 L806 500 Q 832 570 810 632"/>
</g>
<g fill="none" stroke="#a87c44" stroke-width="1">
<path d="M423 402.5 C 460 404, 500 385, 522 355 C 545 325, 575 316, 610 316 C 655 318, 684 355, 684 412 C 684 440, 665 460, 670 490 C 675 515, 700 530, 704 555 C 705 562, 708 563, 715 560 C 740 553, 760 551, 794 551"/>
<path d="M421.7 421.8 C 460 422, 500 405, 522 383 C 540 365, 560 335, 610 335 C 640 335, 663 365, 664 408 C 664 430, 648 455, 650 480 C 652 505, 680 520, 683 548 C 683 565, 670 590, 645 591 C 615 592, 600 560, 570 560 C 540 560, 520 590, 518.5 613"/>
<path d="M536.7 614.4 C 540 595, 555 579, 570 579 C 600 579, 620 612, 645 611.5 C 665 611, 680 600, 700 588 C 720 576, 740 570, 756 570.4 C 775 570, 790 575, 797 580.7"/>
</g>
<path d="M515.5 352.2 L517.5 354.2 L516.4 356.2 L518.9 358.6 L517.2 360.5 L519.2 363.2 L518.4 365.3 L519.7 368.2 L517.1 369.6 L517.7 372.6 L514.9 373.6 L514.2 375.8 L510.8 376.0 L510.1 378.3 L506.7 377.9 L506.5 380.8 L503.5 380.4 L502.1 382.1 L499.6 381.9 L498.9 384.9 L496.2 383.9 L494.8 386.0 L492.4 385.2 L490.8 386.8 L488.5 385.9 L486.7 387.3 L484.5 385.3 L482.7 386.4 L480.8 384.6 L478.8 385.5 L477.2 383.7 L475.0 385.0 L473.4 383.9 L470.9 385.5 L469.5 383.5 L466.6 385.4 L465.1 383.7 L461.9 385.0 L461.3 382.1 L458.4 382.5 L457.6 380.1 L454.9 379.7 L455.5 376.3 L452.8 375.9 L453.8 372.5 L451.5 371.6 L452.9 368.5 L450.6 367.5 L451.4 365.0 L448.4 364.1 L449.7 361.6 L446.6 360.4 L447.4 358.1 L445.1 356.4 L445.5 354.3 L443.2 352.2 L445.1 350.1 L443.8 347.9 L445.7 346.0 L444.2 343.5 L447.0 342.0 L445.9 339.4 L448.2 338.0 L447.3 335.3 L449.8 334.2 L448.7 331.0 L451.0 329.9 L450.7 326.8 L453.0 325.8 L453.8 323.5 L456.7 323.3 L457.1 320.4 L460.8 321.6 L462.1 319.7 L465.1 320.8 L466.8 319.6 L469.9 321.8 L471.1 319.6 L473.7 321.6 L475.0 319.3 L477.2 320.8 L478.8 318.7 L480.8 320.3 L482.7 317.3 L484.6 318.6 L486.8 316.7 L488.6 318.3 L491.2 316.2 L492.7 318.5 L495.1 317.7 L496.0 321.0 L498.8 319.8 L499.2 323.2 L502.1 322.4 L502.4 325.3 L505.3 325.0 L505.7 327.5 L508.3 327.8 L508.6 330.2 L512.0 330.2 L512.1 332.7 L514.5 333.7 L513.9 336.4 L516.0 337.7 L514.9 340.3 L516.7 341.9 L514.8 344.5 L516.7 346.1 L514.9 348.4 L516.3 350.2Z" fill="none" stroke="#6fa534" stroke-width="0.9" stroke-linejoin="round"/><path d="M497.5 369.9 L497.6 372.7 L495.7 373.0 L495.3 375.6 L493.3 375.7 L492.4 378.1 L490.0 376.8 L488.5 378.3 L486.5 377.0 L484.8 377.5 L483.0 375.5 L481.4 377.0 L479.9 375.4 L478.1 376.9 L476.8 374.7 L474.6 376.9 L473.3 375.4 L470.9 376.7 L469.4 375.7 L467.1 376.2 L466.1 374.3 L464.0 373.9 L463.4 371.9 L461.5 371.1 L461.2 369.0" fill="none" stroke="#6fa534" stroke-width="0.8" stroke-linejoin="round"/><path d="M481.0 374.2 L479.7 374.6 L478.7 373.1 L477.3 374.0 L476.4 372.2 L474.6 373.9 L473.9 372.2 L471.8 373.9 L471.1 372.4 L468.8 373.6 L467.9 372.5 L465.7 373.1 L465.3 371.3 L463.0 371.6 L462.9 369.6 L461.0 369.3 L461.4 367.1 L459.7 366.5 L460.6 364.3 L458.8 363.6 L459.9 361.6 L459.0 360.5 L460.2 358.7 L458.1 357.9 L459.1 356.3" fill="none" stroke="#6fa534" stroke-width="0.8" stroke-linejoin="round"/><path d="M466.4 330.8 L466.6 329.0 L468.4 329.5 L469.2 328.5 L470.9 329.4 L471.6 328.1 L473.4 329.7 L474.3 328.7 L475.8 330.3 L476.7 329.4 L478.0 330.8 L478.7 329.1 L479.9 330.9 L480.8 329.6 L481.8 330.3 L482.9 329.0 L483.8 330.3 L485.2 327.9 L485.9 329.7 L487.5 327.6 L488.1 329.6 L489.8 327.7 L490.2 330.0 L491.9 328.8 L492.2 330.8" fill="none" stroke="#6fa534" stroke-width="0.8" stroke-linejoin="round"/><path d="M505.0 356.4 L506.9 358.2 L506.1 359.5 L507.8 361.6 L506.2 362.6 L507.5 364.9 L505.7 365.8 L506.5 368.1 L504.2 368.5 L504.3 370.6 L502.2 370.9 L502.0 372.9 L499.3 372.3 L498.7 373.9 L496.3 373.2 L496.0 375.4 L493.9 374.8 L493.2 376.6 L491.1 375.6 L490.2 377.4 L488.4 376.4 L487.3 378.0 L485.7 376.9 L484.3 377.8 L482.8 376.5" fill="none" stroke="#6fa534" stroke-width="0.8" stroke-linejoin="round"/><path d="M483.2 332.1 L484.6 330.2 L485.6 331.7 L487.1 330.4 L487.7 332.8 L489.4 331.6 L489.5 334.5 L491.0 333.8 L491.2 335.9 L492.7 335.5 L492.4 337.8 L493.8 337.7 L493.7 339.4 L495.5 339.0 L494.7 341.2 L497.1 340.6 L496.5 342.2 L498.7 342.1 L497.6 343.9 L499.3 344.3 L498.5 345.8 L500.1 346.3 L499.2 347.7 L500.6 348.4 L499.3 349.7" fill="none" stroke="#6fa534" stroke-width="0.8" stroke-linejoin="round"/><path d="M482.0 353.6 L504.4 348.0 L481.4 350.8ZM496.4 350.1 L504.5 338.9 L495.2 349.1ZM494.9 350.5 L504.0 342.1 L493.9 349.2ZM480.7 353.2 L497.6 369.0 L482.7 351.2ZM493.3 365.4 L506.8 365.9 L493.5 363.8ZM490.9 362.8 L498.6 362.6 L491.1 361.2ZM480.3 352.0 L477.4 375.5 L483.1 352.4ZM479.6 360.1 L471.1 369.1 L480.7 361.2ZM478.0 369.0 L469.4 378.8 L479.1 370.1ZM480.4 351.0 L462.7 372.7 L483.0 353.4ZM473.4 360.2 L473.3 369.3 L475.0 360.4ZM469.1 364.8 L456.4 368.4 L469.5 366.4ZM481.8 350.8 L458.8 351.0 L481.6 353.6ZM471.9 351.1 L461.5 341.8 L470.7 352.2ZM464.3 350.7 L457.5 357.5 L465.4 351.9ZM482.6 351.3 L465.6 335.2 L480.8 353.1ZM472.1 341.0 L469.7 333.7 L470.6 341.4ZM470.7 339.5 L465.9 327.4 L469.1 339.9ZM483.1 352.1 L480.6 334.1 L480.3 352.3ZM481.6 339.3 L475.5 329.3 L480.2 340.0ZM481.9 346.0 L489.2 334.2 L480.6 345.1ZM482.7 352.9 L493.0 336.7 L480.7 351.5ZM486.5 346.7 L485.2 339.3 L484.9 346.8ZM487.0 346.1 L495.1 341.9 L486.4 344.7Z" fill="#6fa534"/><path d="M495.8 349.6 L508.5 343.0 L504.4 348.0" fill="none" stroke="#6fa534" stroke-width="0.8"/><path d="M494.4 349.8 L509.4 343.9 L504.4 348.0" fill="none" stroke="#6fa534" stroke-width="0.8"/><path d="M493.4 364.6 L504.0 369.6 L497.6 369.0" fill="none" stroke="#6fa534" stroke-width="0.8"/><path d="M491.0 362.0 L504.0 369.5 L497.6 369.0" fill="none" stroke="#6fa534" stroke-width="0.8"/><path d="M480.2 360.7 L472.7 379.9 L477.4 375.5" fill="none" stroke="#6fa534" stroke-width="0.8"/><path d="M478.5 369.5 L472.9 380.1 L477.4 375.5" fill="none" stroke="#6fa534" stroke-width="0.8"/><path d="M474.2 360.3 L462.0 379.2 L462.7 372.7" fill="none" stroke="#6fa534" stroke-width="0.8"/><path d="M469.3 365.6 L456.4 374.1 L462.7 372.7" fill="none" stroke="#6fa534" stroke-width="0.8"/><path d="M471.3 351.7 L454.3 346.4 L458.8 351.0" fill="none" stroke="#6fa534" stroke-width="0.8"/><path d="M464.9 351.3 L453.8 355.2 L458.8 351.0" fill="none" stroke="#6fa534" stroke-width="0.8"/><path d="M471.3 341.2 L464.3 328.8 L465.6 335.2" fill="none" stroke="#6fa534" stroke-width="0.8"/><path d="M469.9 339.7 L463.7 329.0 L465.6 335.2" fill="none" stroke="#6fa534" stroke-width="0.8"/><path d="M480.9 339.6 L477.5 328.4 L480.6 334.1" fill="none" stroke="#6fa534" stroke-width="0.8"/><path d="M481.3 345.5 L484.3 328.8 L480.6 334.1" fill="none" stroke="#6fa534" stroke-width="0.8"/><path d="M485.7 346.7 L492.6 330.3 L493.0 336.7" fill="none" stroke="#6fa534" stroke-width="0.8"/><path d="M486.7 345.4 L499.0 334.2 L493.0 336.7" fill="none" stroke="#6fa534" stroke-width="0.8"/><ellipse cx="481.7" cy="352.2" rx="5.0" ry="3.2" fill="#6fa534"/>
<path d="M736.3 477.0 L739.0 479.2 L737.3 481.1 L739.9 483.7 L738.1 485.6 L739.4 488.2 L736.7 489.6 L737.5 492.3 L734.9 493.5 L734.9 496.0 L732.1 496.8 L732.4 499.6 L729.1 499.7 L729.8 503.2 L726.8 503.3 L726.6 506.2 L724.1 506.5 L723.0 508.8 L720.7 509.1 L719.3 511.1 L716.5 510.2 L714.9 511.9 L712.0 510.0 L710.5 512.1 L708.0 510.2 L706.3 511.8 L704.2 510.8 L702.3 512.2 L700.3 511.2 L698.2 513.2 L696.4 511.3 L693.8 514.1 L691.9 512.6 L689.2 514.3 L687.9 511.4 L685.0 512.7 L684.3 509.2 L681.5 509.8 L681.5 506.0 L679.2 505.7 L679.5 502.1 L676.8 502.3 L677.2 499.1 L674.9 498.6 L675.7 495.6 L672.9 495.2 L673.2 492.8 L670.4 492.2 L671.3 489.7 L668.2 488.8 L669.3 486.4 L666.8 485.0 L668.4 482.7 L665.6 481.1 L667.7 478.9 L665.8 477.0 L668.1 475.1 L665.6 472.9 L667.4 471.1 L665.7 468.7 L666.8 466.9 L664.9 464.0 L666.5 462.3 L665.0 459.1 L667.3 457.8 L666.5 454.6 L669.4 453.9 L669.4 450.9 L673.2 451.2 L673.8 448.7 L677.3 449.3 L678.2 447.1 L681.6 448.2 L682.7 446.2 L685.3 446.7 L686.5 444.5 L689.1 445.7 L690.1 442.5 L692.3 442.9 L693.9 440.3 L696.2 441.8 L698.0 438.8 L700.3 440.4 L702.4 438.7 L704.4 440.6 L706.7 439.6 L708.4 442.1 L710.6 441.7 L711.9 444.4 L714.3 443.5 L715.6 445.7 L718.4 444.5 L719.4 447.0 L721.9 446.8 L722.6 449.4 L725.6 448.9 L725.8 451.8 L728.2 452.3 L728.3 455.0 L730.1 456.1 L729.2 459.1 L730.9 460.3 L729.4 463.2 L731.3 464.3 L730.2 466.7 L732.2 467.9 L731.8 469.9 L734.6 471.2 L734.0 473.3 L736.3 475.0Z" fill="none" stroke="#6fa534" stroke-width="0.9" stroke-linejoin="round"/><path d="M728.4 469.2 L729.0 470.4 L727.5 471.9 L728.3 473.0 L726.1 474.4 L727.6 475.4 L725.3 476.6 L726.5 477.6 L724.5 478.6 L725.6 479.8 L724.3 480.6 L725.5 481.9 L723.9 482.6 L725.5 484.1 L724.1 484.8 L725.5 486.5 L724.2 487.2 L725.4 489.0 L723.9 489.5 L725.0 491.5 L723.2 491.7 L723.2 493.1 L721.1 493.0 L721.7 495.0 L719.9 494.9" fill="none" stroke="#6fa534" stroke-width="0.8" stroke-linejoin="round"/><path d="M724.3 490.6 L724.6 492.9 L722.5 493.6 L721.7 495.4 L719.4 495.6 L718.8 497.5 L716.3 497.1 L715.5 498.9 L713.3 498.6 L712.4 500.4 L710.3 499.9 L709.4 502.2 L707.2 500.7 L705.8 502.1 L704.0 500.9 L702.4 501.6 L700.8 499.4 L699.2 500.9 L698.0 498.2 L696.2 499.9 L695.2 497.7 L692.9 499.7 L692.0 497.9 L689.4 499.5 L688.3 498.2" fill="none" stroke="#6fa534" stroke-width="0.8" stroke-linejoin="round"/><path d="M690.2 457.0 L691.0 455.4 L693.1 456.6 L694.1 455.5 L696.2 457.7 L697.2 456.5 L698.8 458.3 L699.8 456.8 L701.1 458.4 L702.3 456.8 L703.5 457.5 L705.0 455.7 L706.0 457.3 L707.7 456.2 L708.4 458.0 L710.4 456.7 L711.0 458.6 L712.7 458.2 L712.8 460.5 L714.6 460.1 L714.8 462.0 L716.8 461.7 L717.1 463.2 L719.1 463.4 L719.5 464.8" fill="none" stroke="#6fa534" stroke-width="0.8" stroke-linejoin="round"/><path d="M681.7 461.5 L681.1 459.4 L682.9 459.4 L682.7 457.5 L685.0 458.2 L684.8 456.0 L687.2 457.3 L687.4 455.4 L689.2 456.2 L689.7 454.6 L691.6 455.9 L692.3 454.8 L693.8 455.7 L694.4 454.1 L696.1 456.0 L696.6 453.6 L697.9 454.8 L698.8 452.7 L700.0 454.1 L701.1 452.3 L702.2 453.1 L703.5 451.3 L704.6 452.2 L706.0 450.9 L706.9 452.5" fill="none" stroke="#6fa534" stroke-width="0.8" stroke-linejoin="round"/><path d="M679.0 487.4 L677.4 486.3 L678.8 484.1 L677.4 482.8 L678.9 480.9 L677.7 479.6 L678.7 478.0 L677.5 476.4 L678.6 475.0 L677.4 473.3 L679.3 472.1 L678.3 470.2 L681.1 469.6 L680.5 467.8 L683.1 467.4 L682.4 465.4 L685.1 465.6 L685.0 463.8 L686.7 463.5 L686.3 461.2 L688.0 461.0 L688.1 458.7 L689.6 458.4 L690.0 456.1 L691.9 456.5" fill="none" stroke="#6fa534" stroke-width="0.8" stroke-linejoin="round"/><path d="M701.6 478.4 L718.5 473.8 L701.0 475.6ZM709.0 476.3 L717.8 469.4 L708.1 475.0ZM710.1 476.1 L718.1 468.4 L709.0 474.8ZM700.6 478.0 L716.2 487.8 L702.0 476.0ZM708.1 482.6 L720.7 479.4 L707.8 481.0ZM711.7 485.5 L721.0 486.0 L712.0 483.9ZM699.6 476.6 L694.1 504.4 L703.0 477.4ZM697.1 490.5 L688.5 497.1 L698.0 491.8ZM697.6 488.2 L688.2 498.6 L698.8 489.3ZM700.4 475.6 L677.6 492.0 L702.2 478.4ZM693.0 481.5 L679.5 480.6 L692.8 483.1ZM683.2 487.6 L679.4 498.6 L684.7 488.3ZM701.2 475.6 L683.1 477.9 L701.4 478.4ZM687.9 476.9 L679.0 482.6 L688.6 478.3ZM687.3 477.1 L680.5 472.4 L686.2 478.3ZM702.7 475.9 L690.8 463.6 L699.9 478.1ZM695.4 468.4 L693.4 458.8 L693.8 468.6ZM694.9 467.8 L694.6 459.2 L693.3 467.7ZM702.9 476.8 L698.0 450.4 L699.7 477.2ZM700.4 463.9 L692.0 452.8 L699.1 464.8ZM700.4 463.8 L693.4 453.8 L699.0 464.6ZM702.1 478.4 L726.0 463.3 L700.5 475.6ZM721.3 466.6 L725.2 457.9 L719.9 465.9ZM711.4 472.0 L724.4 475.5 L711.9 470.5Z" fill="#6fa534"/><path d="M708.5 475.7 L723.9 470.2 L718.5 473.8" fill="none" stroke="#6fa534" stroke-width="0.8"/><path d="M709.6 475.5 L723.5 469.6 L718.5 473.8" fill="none" stroke="#6fa534" stroke-width="0.8"/><path d="M707.9 481.8 L722.5 486.6 L716.2 487.8" fill="none" stroke="#6fa534" stroke-width="0.8"/><path d="M711.9 484.7 L722.6 488.8 L716.2 487.8" fill="none" stroke="#6fa534" stroke-width="0.8"/><path d="M697.6 491.2 L688.7 507.9 L694.1 504.4" fill="none" stroke="#6fa534" stroke-width="0.8"/><path d="M698.2 488.8 L689.5 508.9 L694.1 504.4" fill="none" stroke="#6fa534" stroke-width="0.8"/><path d="M692.9 482.3 L671.1 491.2 L677.6 492.0" fill="none" stroke="#6fa534" stroke-width="0.8"/><path d="M683.9 488.0 L675.0 497.9 L677.6 492.0" fill="none" stroke="#6fa534" stroke-width="0.8"/><path d="M688.3 477.6 L677.4 480.9 L683.1 477.9" fill="none" stroke="#6fa534" stroke-width="0.8"/><path d="M686.8 477.7 L678.1 473.7 L683.1 477.9" fill="none" stroke="#6fa534" stroke-width="0.8"/><path d="M694.6 468.5 L690.0 457.2 L690.8 463.6" fill="none" stroke="#6fa534" stroke-width="0.8"/><path d="M694.1 467.8 L691.2 457.1 L690.8 463.6" fill="none" stroke="#6fa534" stroke-width="0.8"/><path d="M699.7 464.4 L694.4 445.0 L698.0 450.4" fill="none" stroke="#6fa534" stroke-width="0.8"/><path d="M699.7 464.2 L694.6 444.9 L698.0 450.4" fill="none" stroke="#6fa534" stroke-width="0.8"/><path d="M720.6 466.3 L729.1 457.6 L726.0 463.3" fill="none" stroke="#6fa534" stroke-width="0.8"/><path d="M711.6 471.2 L732.1 465.3 L726.0 463.3" fill="none" stroke="#6fa534" stroke-width="0.8"/><ellipse cx="701.3" cy="477" rx="5.0" ry="3.2" fill="#6fa534"/>
<path d="M606.5 448.6 L607.5 450.8 L605.5 452.6 L605.4 454.7 L603.4 456.1 L604.1 458.6 L602.6 460.0 L603.1 462.9 L600.7 463.7 L600.5 466.5 L597.8 466.6 L596.8 468.9 L594.1 468.5 L592.7 470.3 L590.0 469.0 L588.6 471.2 L586.3 470.0 L584.4 472.0 L582.4 470.8 L580.3 471.7 L578.6 469.5 L576.5 470.0 L575.0 468.2 L572.7 468.5 L571.8 466.2 L568.9 466.7 L568.2 464.5 L565.0 464.7 L564.7 462.2 L561.9 461.5 L562.3 458.8 L560.2 457.3 L561.5 454.6 L559.4 453.0 L560.8 450.6 L559.9 448.6 L560.8 446.6 L559.4 444.2 L561.5 442.5 L560.7 440.1 L562.9 438.7 L563.0 436.4 L565.5 435.6 L565.9 433.3 L568.3 432.8 L568.6 430.1 L571.2 430.0 L571.8 427.1 L574.5 427.8 L575.8 425.2 L578.5 427.0 L580.2 425.3 L582.4 427.0 L584.4 426.0 L586.1 428.5 L588.4 426.7 L589.9 428.7 L592.4 427.4 L593.9 429.1 L596.6 428.7 L597.3 431.1 L599.8 431.5 L600.5 433.6 L602.9 434.4 L602.5 437.2 L605.0 438.2 L604.9 440.5 L607.4 442.0 L606.9 444.3 L608.1 446.4Z" fill="none" stroke="#6fa534" stroke-width="0.9" stroke-linejoin="round"/><path d="M584.5 463.1 L583.4 464.0 L582.3 462.6 L581.2 463.1 L580.3 461.9 L578.8 463.0 L578.0 462.0 L576.3 463.1 L575.4 462.2 L573.4 462.9 L572.7 461.6 L570.5 462.1 L570.7 460.0 L569.2 459.5 L569.3 457.8 L568.2 456.9 L569.1 455.1" fill="none" stroke="#6fa534" stroke-width="0.8" stroke-linejoin="round"/><path d="M570.2 438.5 L569.5 436.5 L570.7 436.1 L570.5 434.1 L572.4 434.4 L572.7 432.7 L574.5 433.4 L575.1 432.1 L577.0 433.5 L577.8 432.6 L579.3 433.7 L580.1 432.6 L581.4 434.3 L582.2 433.3 L583.3 434.6 L584.3 432.9 L585.2 433.8" fill="none" stroke="#6fa534" stroke-width="0.8" stroke-linejoin="round"/><path d="M600.2 450.0 L602.1 451.5 L601.2 452.7 L602.6 454.5 L601.0 455.5 L602.2 457.5 L599.8 457.9 L600.0 459.7 L598.0 459.9 L597.7 461.4 L595.4 461.1 L594.8 462.4 L593.1 462.2 L592.8 464.0 L591.0 463.2 L590.7 465.7 L589.1 465.2" fill="none" stroke="#6fa534" stroke-width="0.8" stroke-linejoin="round"/><path d="M585.2 466.2 L583.8 467.6 L582.3 466.2 L580.8 467.1 L579.7 465.2 L578.2 465.4 L577.3 463.8 L575.7 464.1 L574.9 462.7 L572.8 463.4 L572.0 462.1 L569.4 462.7 L569.0 460.9 L566.4 460.9 L566.5 458.9 L564.2 458.3 L565.2 456.0" fill="none" stroke="#6fa534" stroke-width="0.8" stroke-linejoin="round"/><path d="M583.3 450.3 L598.8 449.9 L583.5 446.9ZM595.9 450.2 L601.1 444.4 L594.8 449.0ZM591.1 449.8 L594.0 445.8 L590.0 448.6ZM582.2 449.6 L590.9 457.6 L584.6 447.6ZM587.9 454.9 L594.1 454.8 L588.1 453.3ZM585.9 452.7 L588.3 460.2 L587.4 452.3ZM582.1 448.6 L583.8 463.1 L584.7 448.6ZM582.9 454.1 L586.2 458.3 L584.2 453.3ZM583.1 460.6 L588.4 467.3 L584.4 459.7ZM582.9 447.4 L569.7 454.7 L583.9 449.8ZM572.0 453.1 L570.6 461.3 L573.6 453.6ZM576.9 450.8 L568.4 450.0 L576.6 452.4ZM583.9 447.0 L571.5 445.1 L582.9 450.2ZM576.6 445.9 L571.6 442.6 L575.6 447.1ZM578.2 446.3 L573.0 442.4 L577.0 447.5ZM585.0 447.8 L578.3 438.0 L581.8 449.4ZM580.2 440.6 L581.0 436.2 L578.7 440.1ZM580.6 441.2 L580.9 433.2 L579.0 441.0ZM584.7 449.5 L592.5 436.4 L582.1 447.7ZM591.3 439.0 L589.3 430.7 L589.7 439.2ZM590.7 439.9 L598.4 436.9 L590.2 438.4Z" fill="#6fa534"/><path d="M595.4 449.6 L601.8 447.3 L598.8 449.9" fill="none" stroke="#6fa534" stroke-width="0.8"/><path d="M590.5 449.2 L601.7 447.2 L598.8 449.9" fill="none" stroke="#6fa534" stroke-width="0.8"/><path d="M588.0 454.1 L594.8 458.0 L590.9 457.6" fill="none" stroke="#6fa534" stroke-width="0.8"/><path d="M586.6 452.5 L591.7 461.4 L590.9 457.6" fill="none" stroke="#6fa534" stroke-width="0.8"/><path d="M583.5 453.7 L585.8 466.5 L583.8 463.1" fill="none" stroke="#6fa534" stroke-width="0.8"/><path d="M583.7 460.1 L585.9 466.5 L583.8 463.1" fill="none" stroke="#6fa534" stroke-width="0.8"/><path d="M572.8 453.4 L568.7 458.5 L569.7 454.7" fill="none" stroke="#6fa534" stroke-width="0.8"/><path d="M576.8 451.6 L565.8 454.0 L569.7 454.7" fill="none" stroke="#6fa534" stroke-width="0.8"/><path d="M576.1 446.5 L568.6 442.6 L571.5 445.1" fill="none" stroke="#6fa534" stroke-width="0.8"/><path d="M577.6 446.9 L568.7 442.4 L571.5 445.1" fill="none" stroke="#6fa534" stroke-width="0.8"/><path d="M579.4 440.4 L579.7 434.3 L578.3 438.0" fill="none" stroke="#6fa534" stroke-width="0.8"/><path d="M579.8 441.1 L578.8 434.1 L578.3 438.0" fill="none" stroke="#6fa534" stroke-width="0.8"/><path d="M590.5 439.1 L592.0 432.5 L592.5 436.4" fill="none" stroke="#6fa534" stroke-width="0.8"/><path d="M590.4 439.1 L596.3 435.3 L592.5 436.4" fill="none" stroke="#6fa534" stroke-width="0.8"/><ellipse cx="583.4" cy="448.6" rx="3.1" ry="2.0" fill="#6fa534"/>
<path d="M611.7 379.5 L612.2 381.1 L611.2 382.7 L612.3 384.5 L610.3 385.7 L611.3 387.7 L609.6 388.9 L610.0 390.7 L608.3 391.8 L608.3 393.6 L606.9 394.6 L606.6 396.3 L604.6 396.8 L604.7 399.1 L602.4 399.1 L602.2 401.2 L600.1 401.2 L599.3 402.7 L597.3 402.5 L596.5 404.4 L594.4 403.6 L593.6 405.7 L591.8 405.2 L590.5 406.7 L588.7 405.9 L587.4 407.5 L585.8 406.9 L584.2 408.1 L582.6 407.3 L580.9 408.5 L579.5 406.6 L577.7 407.7 L576.4 406.3 L574.5 407.0 L573.5 404.9 L571.5 405.6 L570.8 403.3 L568.8 403.7 L568.1 401.9 L566.1 401.9 L565.6 400.1 L563.8 399.7 L563.2 398.0 L561.1 397.7 L561.0 395.8 L559.5 394.8 L559.5 393.0 L557.8 392.1 L558.1 390.2 L556.5 389.1 L557.0 387.2 L555.3 386.0 L556.2 384.2 L555.0 382.8 L555.7 381.1 L554.4 379.5 L555.4 377.9 L554.5 376.2 L555.8 374.7 L554.9 372.9 L556.4 371.6 L555.5 369.6 L557.3 368.5 L557.5 366.8 L559.1 365.8 L559.1 363.9 L561.3 363.4 L561.6 361.6 L563.4 361.1 L563.9 359.4 L565.7 359.1 L566.4 357.4 L568.2 357.3 L568.7 355.1 L570.9 355.7 L571.6 353.6 L573.6 354.4 L574.7 352.7 L576.4 353.0 L577.7 351.4 L579.6 352.8 L581.0 351.3 L582.6 352.7 L584.2 351.2 L585.7 352.7 L587.4 351.6 L588.8 352.6 L590.6 352.0 L591.9 353.2 L593.8 352.8 L594.7 354.7 L596.8 354.1 L597.8 355.6 L599.4 356.0 L600.3 357.6 L602.2 357.8 L602.4 359.9 L604.1 360.5 L604.5 362.2 L606.4 362.8 L606.1 364.9 L607.8 365.7 L608.0 367.4 L609.4 368.5 L609.5 370.2 L611.1 371.4 L610.7 373.2 L611.8 374.6 L611.2 376.3 L612.4 377.8Z" fill="none" stroke="#6fa534" stroke-width="0.9" stroke-linejoin="round"/><path d="M596.5 359.1 L598.4 358.2 L598.5 359.9 L600.8 358.8 L600.5 360.8 L602.4 360.5 L601.7 362.7 L603.6 362.5 L603.3 364.1 L605.5 363.9 L604.4 366.0 L606.7 365.9 L605.7 367.7 L607.3 368.2 L606.6 369.7 L608.4 370.2 L606.7 371.9 L609.2 372.3 L607.5 373.9 L609.7 374.6 L608.0 376.0 L609.8 376.8 L608.7 378.1 L610.6 379.1 L608.3 380.2 L610.2 381.4 L608.7 382.4 L609.6 383.6 L607.9 384.5 L608.8 385.8 L606.6 386.3 L607.8 387.8 L605.5 388.1 L607.3 390.0 L605.2 390.2 L605.7 391.7 L603.7 391.7 L604.2 393.3 L602.6 393.5 L603.7 395.6 L601.7 395.4 L602.2 397.3 L600.4 397.0 L600.8 399.0 L598.5 398.0 L598.9 400.3 L597.5 400.1 L597.1 401.6 L595.5 400.9 L595.2 402.7 L593.8 402.3 L593.3 404.0 L591.5 402.3 L591.2 404.6 L589.6 403.3 L589.0 405.3 L587.6 404.0 L586.8 405.6 L585.5 404.2 L584.5 405.9 L583.4 403.6 L582.3 405.5 L581.3 404.0 L580.0 406.0 L579.1 404.3 L577.8 405.3 L577.2 403.1 L575.3 405.5 L574.9 403.3 L573.3 404.4 L573.3 401.6" fill="none" stroke="#6fa534" stroke-width="0.9" stroke-linejoin="round"/><path d="M603.9 368.3 L606.4 368.4 L604.5 370.6 L607.4 370.7 L606.0 372.5 L607.9 373.2 L606.2 374.9 L607.9 375.8 L605.5 377.3 L608.5 378.2 L606.2 379.5 L607.9 380.7 L605.1 381.7 L606.8 383.0 L604.9 383.9 L606.6 385.4 L604.1 385.9 L605.9 387.7 L603.3 387.9 L604.6 389.7 L602.4 389.9 L604.4 392.4 L601.1 391.6 L602.7 394.2 L600.7 394.0 L600.6 395.6 L599.0 395.6 L599.6 397.9 L597.2 396.9 L597.3 399.0 L595.1 397.7 L595.3 400.3 L593.5 399.3 L593.4 401.8 L591.7 401.0 L591.3 403.1 L589.4 401.2 L588.8 403.6 L587.4 402.6 L586.4 404.5 L585.1 403.2" fill="none" stroke="#6fa534" stroke-width="0.8" stroke-linejoin="round"/><path d="M589.9 388.3 l-0.8 -2.1" stroke="#6fa534" stroke-width="1.5"/><path d="M594.4 388.6 l3.3 1.8" stroke="#6fa534" stroke-width="1.5"/><path d="M582.2 391.7 l0.3 -1.3" stroke="#6fa534" stroke-width="1.5"/><path d="M590.7 387.7 l-2.3 2.6" stroke="#6fa534" stroke-width="1.5"/><path d="M579.8 398.0 l2.4 -1.8" stroke="#6fa534" stroke-width="1.5"/><path d="M592.0 394.0 l1.9 2.1" stroke="#6fa534" stroke-width="1.5"/><path d="M580.6 389.9 l0.8 1.0" stroke="#6fa534" stroke-width="1.5"/>
<path d="M554.7 489.0 L556.3 490.7 L554.6 492.1 L555.6 493.9 L554.6 495.3 L555.7 497.3 L553.8 498.5 L554.7 500.6 L553.0 501.6 L553.1 503.6 L551.3 504.5 L551.2 506.4 L549.2 506.9 L548.8 508.7 L547.1 509.4 L546.5 511.1 L544.4 511.2 L544.1 513.5 L542.1 513.5 L541.2 515.4 L539.3 515.2 L538.1 516.8 L536.2 516.4 L534.8 517.5 L532.9 516.8 L531.5 518.2 L529.7 517.5 L528.2 518.8 L526.5 517.0 L524.8 518.1 L523.3 516.6 L521.5 517.8 L520.1 516.3 L518.2 517.0 L517.0 515.4 L514.8 516.4 L513.9 514.3 L511.6 515.1 L510.8 513.2 L508.8 513.0 L508.1 511.2 L506.4 510.5 L505.8 508.8 L504.2 507.9 L504.2 505.8 L502.6 504.9 L502.7 502.9 L500.9 502.0 L501.2 500.0 L499.4 498.9 L500.2 496.9 L498.8 495.6 L499.5 493.8 L498.0 492.4 L498.9 490.6 L497.7 489.0 L499.0 487.4 L498.2 485.7 L500.0 484.3 L499.3 482.5 L500.8 481.2 L500.1 479.3 L501.7 478.2 L501.5 476.3 L502.6 475.1 L502.8 473.2 L504.6 472.5 L504.5 470.3 L506.3 469.7 L506.3 467.4 L508.6 467.5 L509.1 465.4 L511.0 465.2 L511.9 463.5 L514.1 464.0 L515.1 462.4 L517.1 462.8 L518.2 461.0 L520.2 462.1 L521.5 460.6 L523.3 461.4 L524.8 460.0 L526.5 460.6 L528.1 459.3 L529.7 460.8 L531.5 459.6 L533.0 461.1 L534.9 460.0 L536.2 461.5 L538.1 461.2 L539.3 462.7 L541.1 462.8 L542.2 464.3 L544.2 464.3 L544.6 466.5 L546.7 466.6 L547.6 468.1 L549.7 468.5 L549.7 470.7 L551.6 471.3 L551.8 473.3 L553.5 474.2 L553.0 476.4 L554.8 477.4 L554.2 479.4 L555.3 480.8 L554.4 482.7 L555.7 484.1 L554.9 485.8 L556.3 487.3Z" fill="none" stroke="#6fa534" stroke-width="0.9" stroke-linejoin="round"/><path d="M541.3 467.2 L543.3 466.3 L542.7 469.0 L545.0 468.0 L544.7 470.0 L546.6 469.7 L546.2 471.6 L548.0 471.5 L547.2 473.6 L550.2 472.8 L549.4 474.8 L551.6 474.8 L550.3 476.9 L552.5 477.0 L551.7 478.7 L553.8 479.1 L552.4 480.8 L554.6 481.4 L552.7 483.1 L554.4 483.9 L552.8 485.3 L555.3 486.2 L552.5 487.6 L554.7 488.6 L553.1 489.7 L553.7 490.9 L552.5 491.9 L554.2 493.3 L551.9 494.0 L553.1 495.4 L550.8 495.9 L552.4 497.6 L550.5 498.0 L551.8 499.8 L550.1 500.2 L551.0 501.9 L548.5 501.8 L549.5 503.7 L547.9 504.0 L548.4 505.8 L546.7 505.8 L546.9 507.6 L544.6 506.8 L545.4 509.3 L543.2 508.5 L543.7 510.9 L541.7 510.1 L541.6 512.0 L539.8 511.1 L539.7 513.3 L538.0 512.5 L537.7 514.7 L536.1 513.6 L535.4 515.2 L533.8 513.9 L533.3 516.7 L531.8 514.9 L530.9 516.8 L529.6 515.4 L528.5 516.8 L527.3 515.1 L526.1 516.6 L525.0 515.3 L523.7 516.4 L522.8 514.7 L521.4 515.9 L520.9 513.3 L519.2 515.2 L518.8 512.9 L517.1 514.0 L516.7 512.1" fill="none" stroke="#6fa534" stroke-width="0.9" stroke-linejoin="round"/><path d="M548.9 477.2 L551.2 477.5 L549.6 479.6 L551.6 480.1 L550.1 481.9 L552.4 482.6 L550.1 484.4 L552.1 485.3 L550.7 486.6 L552.2 487.8 L550.2 489.0 L552.8 490.3 L551.0 491.4 L552.9 492.9 L549.6 493.5 L552.1 495.3 L549.4 495.8 L550.7 497.5 L549.1 498.2 L549.9 499.9 L547.9 500.2 L548.2 501.8 L546.3 502.0 L546.6 503.7 L544.7 503.7 L545.5 505.9 L543.0 505.1 L543.9 507.9 L541.6 507.0 L542.1 509.7 L539.9 508.6 L540.1 511.3 L538.2 510.4 L538.1 513.2 L535.7 510.7 L535.6 513.9 L533.6 511.6 L532.9 513.8 L531.3 512.3 L530.3 513.9 L529.0 512.5" fill="none" stroke="#6fa534" stroke-width="0.8" stroke-linejoin="round"/><path d="M529.1 507.7 l2.4 2.7" stroke="#6fa534" stroke-width="1.5"/><path d="M525.9 509.8 l-3.8 -0.2" stroke="#6fa534" stroke-width="1.5"/><path d="M521.2 505.6 l3.2 -2.3" stroke="#6fa534" stroke-width="1.5"/><path d="M531.3 501.4 l0.4 0.4" stroke="#6fa534" stroke-width="1.5"/><path d="M537.6 496.3 l-1.8 2.5" stroke="#6fa534" stroke-width="1.5"/><path d="M526.1 500.9 l2.4 -2.2" stroke="#6fa534" stroke-width="1.5"/><path d="M528.5 500.6 l-4.0 2.2" stroke="#6fa534" stroke-width="1.5"/>
<path d="M664.3 552.8 L664.9 553.9 L663.9 554.8 L665.0 556.1 L663.5 556.9 L664.5 558.2 L663.1 558.9 L663.9 560.3 L662.5 560.9 L663.4 562.6 L661.9 562.9 L662.2 564.5 L660.6 564.6 L660.7 566.2 L659.2 566.2 L659.2 568.0 L657.6 567.7 L657.3 569.2 L655.6 568.5 L655.3 570.3 L653.8 569.6 L653.1 570.7 L651.7 570.1 L651.1 571.9 L649.8 570.9 L648.9 572.0 L647.7 571.5 L646.7 572.6 L645.6 571.5 L644.4 572.8 L643.5 571.1 L642.2 571.9 L641.4 570.6 L640.1 571.4 L639.5 569.7 L637.8 570.9 L637.5 569.1 L635.9 569.7 L635.7 568.0 L633.9 568.6 L634.1 566.6 L632.5 566.8 L632.3 565.5 L630.7 565.4 L631.0 563.8 L629.5 563.5 L629.9 562.0 L628.5 561.5 L629.4 559.8 L628.3 559.2 L629.0 557.8 L627.7 557.1 L628.3 555.9 L627.2 555.0 L628.0 553.8 L627.1 552.8 L628.2 551.8 L626.7 550.6 L627.7 549.6 L626.9 548.3 L628.1 547.5 L627.7 546.2 L629.3 545.7 L628.4 544.1 L629.9 543.7 L629.7 542.2 L631.1 541.9 L631.1 540.5 L632.7 540.5 L632.6 538.9 L633.9 538.7 L633.9 537.0 L635.5 537.3 L635.7 535.5 L637.3 536.1 L637.7 534.5 L639.4 535.7 L640.0 533.9 L641.5 535.1 L642.2 533.6 L643.5 534.9 L644.4 533.2 L645.6 534.6 L646.7 533.4 L647.7 534.7 L648.9 533.5 L649.8 534.4 L651.2 533.6 L651.9 534.9 L653.3 534.3 L653.8 535.9 L655.3 535.3 L656.0 536.5 L657.2 536.6 L657.5 538.1 L659.0 538.0 L659.1 539.5 L660.5 539.6 L660.0 541.4 L661.7 541.5 L661.5 542.9 L663.2 543.2 L662.4 544.8 L663.8 545.3 L663.3 546.7 L664.7 547.3 L664.1 548.6 L665.1 549.5 L664.3 550.7 L665.5 551.7Z" fill="none" stroke="#6fa534" stroke-width="0.9" stroke-linejoin="round"/><path d="M654.5 539.8 L656.1 538.6 L655.6 540.5 L657.2 539.6 L656.8 541.1 L658.8 540.1 L657.7 542.1 L659.5 541.5 L659.1 542.8 L660.5 542.6 L659.5 544.2 L661.8 543.6 L660.8 545.0 L662.7 544.9 L660.5 546.7 L662.9 546.5 L661.1 547.9 L662.7 548.2 L661.8 549.1 L663.3 549.6 L661.9 550.5 L663.1 551.1 L661.8 551.9 L662.9 552.6 L661.6 553.2 L663.3 554.0 L661.2 554.5 L663.2 555.5 L661.2 555.9 L662.9 557.0 L660.8 557.1 L662.4 558.4 L660.7 558.5 L662.3 559.9 L659.4 559.4 L661.4 561.2 L659.0 560.6 L660.2 562.1 L658.6 561.9 L659.3 563.3 L657.9 563.0 L658.7 564.7 L656.8 563.8 L657.7 565.9 L655.9 564.8 L656.7 567.0 L654.7 565.4 L655.1 567.2 L654.0 566.7 L654.3 568.8 L652.7 567.2 L652.9 569.6 L651.4 567.8 L651.2 569.2 L650.0 567.9 L649.9 570.1 L648.8 568.3 L648.3 569.5 L647.4 568.3 L646.8 570.4 L646.1 567.8 L645.4 569.5 L644.8 568.2 L644.0 569.3 L643.4 568.2 L642.4 569.8 L642.1 568.0 L641.0 569.3 L640.9 567.5 L639.7 568.7 L639.7 566.8" fill="none" stroke="#6fa534" stroke-width="0.9" stroke-linejoin="round"/><path d="M658.8 545.9 L660.1 546.0 L659.1 547.3 L660.9 547.4 L659.0 548.8 L661.7 548.8 L659.3 550.1 L661.5 550.5 L659.2 551.5 L661.0 552.1 L659.3 552.8 L660.8 553.5 L658.6 554.1 L660.5 555.0 L658.5 555.3 L660.3 556.4 L658.5 556.6 L660.3 558.0 L658.5 558.0 L660.4 559.7 L658.4 559.5 L658.9 560.7 L656.9 560.2 L658.5 562.2 L656.7 561.8 L657.8 563.7 L655.1 562.0 L656.0 564.0 L654.4 563.3 L654.8 564.9 L653.4 564.1 L653.8 566.2 L652.3 565.0 L652.5 567.1 L651.1 565.7 L650.9 567.2 L649.6 565.4 L649.5 567.9 L648.4 566.2 L648.0 568.3 L647.1 566.2" fill="none" stroke="#6fa534" stroke-width="0.8" stroke-linejoin="round"/><path d="M644.3 565.6 l-0.1 -1.4" stroke="#6fa534" stroke-width="1.5"/><path d="M655.7 559.4 l-0.2 1.6" stroke="#6fa534" stroke-width="1.5"/><path d="M651.5 564.1 l-1.8 1.8" stroke="#6fa534" stroke-width="1.5"/><path d="M645.6 562.6 l0.3 1.1" stroke="#6fa534" stroke-width="1.5"/><path d="M653.1 561.1 l2.4 -1.4" stroke="#6fa534" stroke-width="1.5"/><path d="M644.3 564.5 l2.8 -1.0" stroke="#6fa534" stroke-width="1.5"/><path d="M655.6 561.3 l2.4 -0.3" stroke="#6fa534" stroke-width="1.5"/>
<path d="M462.3 450.5 L463.0 452.1 L462.2 453.5 L462.4 455.3 L460.8 456.2 L460.4 457.9 L458.8 458.5 L457.8 459.8 L456.0 459.7 L454.6 460.7 L453.0 460.2 L451.4 460.7 L450.0 459.6 L448.4 459.6 L447.2 458.4 L445.6 457.9 L445.2 456.2 L443.9 455.1 L444.0 453.4 L442.8 452.1 L443.4 450.5 L443.0 448.9 L443.9 447.6 L444.0 445.9 L445.0 444.7 L445.6 443.1 L447.2 442.5 L448.3 441.2 L450.0 441.3 L451.4 440.5 L453.0 440.7 L454.6 440.5 L456.0 441.4 L457.7 441.2 L458.7 442.7 L460.2 443.3 L461.0 444.7 L462.3 445.8 L462.2 447.5 L462.9 448.9Z" fill="none" stroke="#6fa534" stroke-width="1.0" stroke-linejoin="round"/><path d="M453.0 450.5 Q460.6 454.2 457.7 456.5 M454.8 451.4 L457.4 454.6 M453.0 450.5 Q452.8 459.0 449.5 457.3 M452.9 452.5 L451.1 456.2 M453.0 450.5 Q444.8 452.6 445.5 448.9 M451.1 451.0 L447.0 450.2 M453.0 450.5 Q449.0 443.0 452.7 442.9 M452.1 448.7 L451.9 444.6 M453.0 450.5 Q456.7 442.8 459.0 445.7 M453.9 448.7 L457.1 446.1 " fill="none" stroke="#6fa534" stroke-width="1.1"/><path d="M458.4 450.5 L459.4 453.6 L456.4 454.8 L454.5 457.1 L451.8 456.0 L448.9 455.6 L448.6 452.6 L446.6 450.5 L448.0 448.1 L448.9 445.3 L451.8 445.1 L454.6 443.6 L456.3 446.4 L458.8 447.7Z" fill="none" stroke="#6fa534" stroke-width="0.9" stroke-linejoin="round"/>
<path d="M492.1 446.8 L492.5 448.4 L491.6 449.8 L491.9 451.6 L490.5 452.6 L489.9 454.2 L488.3 454.7 L487.1 455.8 L485.5 456.0 L484.1 457.0 L482.5 456.5 L480.9 456.9 L479.6 455.8 L477.9 455.8 L476.7 454.8 L475.0 454.3 L474.6 452.5 L473.2 451.6 L473.4 449.8 L472.5 448.4 L472.7 446.8 L472.2 445.2 L473.1 443.8 L473.1 442.0 L474.6 441.1 L475.2 439.5 L476.8 438.9 L477.8 437.6 L479.6 437.8 L480.9 436.8 L482.5 437.4 L484.1 436.8 L485.5 437.7 L487.1 437.7 L488.2 438.9 L489.9 439.4 L490.4 441.0 L491.9 442.0 L491.9 443.7 L492.9 445.2Z" fill="none" stroke="#6fa534" stroke-width="1.0" stroke-linejoin="round"/><path d="M482.5 446.8 Q491.0 447.5 489.1 450.7 M484.5 447.0 L488.1 449.0 M482.5 446.8 Q482.2 455.3 479.0 453.6 M482.4 448.8 L480.6 452.5 M482.5 446.8 Q474.4 449.4 474.9 445.7 M480.6 447.4 L476.5 446.9 M482.5 446.8 Q477.0 440.3 480.6 439.4 M481.2 445.3 L480.1 441.3 M482.5 446.8 Q486.0 439.0 488.4 441.9 M483.3 445.0 L486.5 442.3 " fill="none" stroke="#6fa534" stroke-width="1.1"/><path d="M487.3 446.8 L488.1 449.5 L485.9 451.1 L483.9 452.8 L481.3 452.2 L478.4 451.9 L477.8 449.1 L476.2 446.8 L477.7 444.5 L478.4 441.7 L481.3 441.7 L484.1 440.0 L486.3 442.0 L488.2 444.0Z" fill="none" stroke="#6fa534" stroke-width="0.9" stroke-linejoin="round"/>
<path d="M519.5 436.4 L520.2 438.0 L519.4 439.5 L519.2 441.1 L517.7 442.1 L517.3 443.8 L515.7 444.3 L514.7 445.8 L512.9 445.7 L511.5 446.7 L509.9 445.9 L508.3 446.7 L506.9 445.6 L505.2 445.7 L504.2 444.3 L502.7 443.6 L502.3 441.9 L500.9 441.0 L500.6 439.4 L499.5 438.0 L500.2 436.4 L499.5 434.8 L500.7 433.4 L500.4 431.6 L502.0 430.6 L502.5 429.0 L504.3 428.6 L505.3 427.3 L507.0 427.3 L508.3 426.1 L509.9 426.6 L511.6 425.9 L512.9 427.3 L514.5 427.4 L515.4 428.8 L517.2 429.1 L517.7 430.7 L518.8 431.9 L518.9 433.5 L519.8 434.8Z" fill="none" stroke="#6fa534" stroke-width="1.0" stroke-linejoin="round"/><path d="M509.9 436.4 Q517.4 440.3 514.5 442.5 M511.7 437.3 L514.2 440.6 M509.9 436.4 Q512.0 444.6 508.3 443.9 M510.4 438.3 L509.6 442.4 M509.9 436.4 Q503.0 441.3 502.4 437.7 M508.3 437.6 L504.2 438.3 M509.9 436.4 Q506.3 428.7 510.0 428.7 M509.0 434.6 L509.0 430.5 M509.9 436.4 Q513.3 428.6 515.7 431.4 M510.7 434.6 L513.8 431.8 " fill="none" stroke="#6fa534" stroke-width="1.1"/><path d="M515.4 436.4 L516.4 439.5 L513.0 440.3 L511.3 442.3 L508.8 441.2 L505.6 441.8 L505.1 438.7 L503.1 436.4 L505.1 434.1 L505.9 431.4 L508.9 431.9 L511.5 429.5 L513.3 432.1 L516.3 433.3Z" fill="none" stroke="#6fa534" stroke-width="0.9" stroke-linejoin="round"/>
<path d="M650.2 415.2 L650.8 416.8 L649.9 418.3 L649.9 420.0 L648.5 421.0 L647.8 422.5 L646.2 423.1 L645.2 424.4 L643.5 424.5 L642.1 425.2 L640.5 425.0 L638.9 425.4 L637.5 424.5 L635.7 424.5 L634.8 423.0 L633.3 422.4 L632.7 420.8 L631.4 419.8 L631.5 418.1 L630.3 416.8 L630.9 415.2 L630.2 413.6 L631.2 412.2 L631.1 410.4 L632.5 409.4 L633.0 407.7 L634.8 407.3 L635.9 406.1 L637.5 406.0 L638.9 405.0 L640.5 405.5 L642.1 404.8 L643.5 405.9 L645.2 406.0 L646.2 407.3 L647.7 408.0 L648.3 409.5 L649.7 410.5 L649.6 412.2 L650.3 413.6Z" fill="none" stroke="#6fa534" stroke-width="1.0" stroke-linejoin="round"/><path d="M640.5 415.2 Q648.1 419.0 645.2 421.3 M642.3 416.1 L644.8 419.3 M640.5 415.2 Q639.1 423.6 636.1 421.5 M640.2 417.2 L637.8 420.6 M640.5 415.2 Q632.1 416.7 633.1 413.2 M638.5 415.6 L634.5 414.5 M640.5 415.2 Q633.8 409.9 637.2 408.3 M638.9 414.0 L637.1 410.3 M640.5 415.2 Q645.4 408.2 647.2 411.5 M641.6 413.6 L645.2 411.5 " fill="none" stroke="#6fa534" stroke-width="1.1"/><path d="M645.9 415.2 L645.9 417.8 L643.7 419.2 L642.0 422.0 L639.1 421.3 L636.4 420.3 L635.7 417.5 L633.9 415.2 L635.9 413.0 L636.4 410.0 L639.2 409.5 L642.1 408.3 L643.8 411.1 L646.4 412.3Z" fill="none" stroke="#6fa534" stroke-width="0.9" stroke-linejoin="round"/>
<path d="M642.4 443.0 L643.0 444.6 L642.1 445.9 L642.0 447.6 L640.7 448.6 L640.3 450.3 L638.7 450.9 L637.8 452.3 L635.9 452.1 L634.6 453.1 L633.0 452.5 L631.3 453.5 L629.9 452.5 L628.2 452.4 L627.4 450.8 L625.6 450.4 L625.1 448.7 L623.9 447.7 L624.0 445.9 L623.1 444.6 L623.7 443.0 L622.9 441.4 L623.7 440.0 L623.8 438.3 L625.0 437.2 L625.7 435.7 L627.3 435.2 L628.3 433.7 L630.0 433.9 L631.4 432.8 L633.0 433.4 L634.6 432.9 L636.0 433.6 L637.8 433.6 L638.8 435.1 L640.5 435.5 L640.7 437.4 L642.2 438.3 L642.1 440.1 L643.1 441.4Z" fill="none" stroke="#6fa534" stroke-width="1.0" stroke-linejoin="round"/><path d="M633.0 443.0 Q641.0 446.0 638.3 448.5 M634.9 443.7 L637.8 446.7 M633.0 443.0 Q632.1 451.5 629.0 449.5 M632.8 445.0 L630.6 448.5 M633.0 443.0 Q625.7 447.3 625.4 443.7 M631.3 444.0 L627.2 444.4 M633.0 443.0 Q629.4 435.3 633.1 435.3 M632.1 441.2 L632.1 437.1 M633.0 443.0 Q636.4 435.2 638.8 438.0 M633.8 441.2 L636.9 438.5 " fill="none" stroke="#6fa534" stroke-width="1.1"/><path d="M638.1 443.0 L638.6 445.7 L636.2 447.1 L634.5 449.4 L631.8 448.3 L628.5 448.7 L627.9 445.4 L626.4 443.0 L628.4 440.8 L628.9 437.9 L631.9 438.1 L634.5 436.4 L636.7 438.4 L639.3 439.9Z" fill="none" stroke="#6fa534" stroke-width="0.9" stroke-linejoin="round"/>
<path d="M636.4 473.9 L637.1 475.5 L636.0 476.9 L635.9 478.6 L634.4 479.5 L633.9 481.1 L632.3 481.6 L631.3 482.9 L629.6 483.0 L628.3 483.8 L626.7 483.3 L625.1 484.1 L623.7 483.1 L621.9 483.4 L620.9 481.9 L619.2 481.4 L618.8 479.7 L617.6 478.5 L617.5 476.9 L616.6 475.5 L617.1 473.9 L616.4 472.3 L617.4 470.9 L617.5 469.2 L618.8 468.2 L619.4 466.6 L621.0 466.0 L622.1 464.9 L623.8 464.8 L625.1 463.9 L626.7 464.3 L628.3 463.8 L629.7 464.7 L631.3 464.8 L632.5 465.9 L634.2 466.4 L634.7 468.1 L636.0 469.2 L635.9 470.9 L636.8 472.3Z" fill="none" stroke="#6fa534" stroke-width="1.0" stroke-linejoin="round"/><path d="M626.7 473.9 Q635.0 475.5 632.8 478.5 M628.7 474.3 L632.0 476.7 M626.7 473.9 Q625.4 482.3 622.4 480.2 M626.4 475.9 L624.1 479.3 M626.7 473.9 Q618.4 475.6 619.3 472.1 M624.7 474.3 L620.7 473.3 M626.7 473.9 Q620.4 468.2 623.8 466.8 M625.2 472.6 L623.6 468.7 M626.7 473.9 Q632.5 467.7 633.8 471.1 M628.1 472.4 L631.9 470.9 " fill="none" stroke="#6fa534" stroke-width="1.1"/><path d="M632.5 473.9 L632.8 476.9 L629.9 478.0 L628.2 480.4 L625.5 479.2 L622.7 478.9 L622.4 476.0 L619.9 473.9 L621.5 471.4 L622.7 468.9 L625.5 468.7 L628.1 467.6 L629.6 470.3 L632.5 471.1Z" fill="none" stroke="#6fa534" stroke-width="0.9" stroke-linejoin="round"/>
<path d="M642.7 505.9 L643.1 507.5 L642.1 508.8 L642.1 510.6 L640.8 511.6 L640.3 513.2 L638.7 513.7 L637.7 515.2 L636.0 515.0 L634.7 516.3 L633.0 515.8 L631.3 516.5 L630.0 515.2 L628.2 515.3 L627.3 513.8 L625.7 513.2 L625.2 511.6 L624.0 510.5 L623.8 508.9 L622.7 507.5 L623.6 505.9 L622.9 504.3 L623.9 502.9 L623.9 501.3 L625.3 500.3 L625.9 498.8 L627.4 498.2 L628.4 496.9 L629.9 496.4 L631.4 495.6 L633.0 496.0 L634.6 495.5 L636.0 496.7 L637.8 496.5 L638.7 498.0 L640.4 498.5 L640.8 500.2 L642.1 501.2 L642.1 502.9 L643.3 504.3Z" fill="none" stroke="#6fa534" stroke-width="1.0" stroke-linejoin="round"/><path d="M633.0 505.9 Q640.9 509.0 638.2 511.5 M634.9 506.6 L637.7 509.6 M633.0 505.9 Q634.8 514.2 631.2 513.3 M633.4 507.9 L632.5 511.9 M633.0 505.9 Q625.6 510.2 625.4 506.5 M631.3 506.9 L627.2 507.2 M633.0 505.9 Q627.9 499.1 631.5 498.4 M631.8 504.3 L631.0 500.2 M633.0 505.9 Q635.9 497.9 638.5 500.5 M633.7 504.0 L636.6 501.1 " fill="none" stroke="#6fa534" stroke-width="1.1"/><path d="M638.5 505.9 L638.8 508.7 L636.1 509.8 L634.5 512.6 L631.9 510.8 L628.9 511.0 L628.1 508.3 L626.3 505.9 L628.5 503.7 L628.7 500.5 L631.8 500.5 L634.6 499.0 L636.3 501.8 L639.4 502.8Z" fill="none" stroke="#6fa534" stroke-width="0.9" stroke-linejoin="round"/>
<path d="M537.8 543.4 L538.1 545.0 L537.2 546.3 L537.3 548.0 L536.0 549.1 L535.5 550.7 L534.0 551.4 L533.0 552.9 L531.2 552.7 L529.8 553.4 L528.2 552.8 L526.6 553.6 L525.1 552.8 L523.4 552.9 L522.5 551.3 L520.8 550.8 L520.4 549.1 L518.8 548.2 L518.8 546.4 L517.9 545.0 L518.7 543.4 L518.3 541.8 L519.3 540.5 L519.1 538.8 L520.4 537.7 L520.8 536.0 L522.5 535.5 L523.6 534.3 L525.2 534.2 L526.6 533.3 L528.2 533.7 L529.8 533.0 L531.2 534.3 L532.9 534.2 L534.0 535.4 L535.7 535.9 L536.3 537.5 L537.6 538.6 L537.4 540.4 L538.4 541.8Z" fill="none" stroke="#6fa534" stroke-width="1.0" stroke-linejoin="round"/><path d="M528.2 543.4 Q536.3 546.1 533.7 548.8 M530.1 544.0 L533.1 546.9 M528.2 543.4 Q527.9 551.9 524.6 550.2 M528.1 545.4 L526.2 549.1 M528.2 543.4 Q519.8 544.7 520.9 541.1 M526.2 543.7 L522.3 542.5 M528.2 543.4 Q521.8 537.8 525.3 536.3 M526.7 542.1 L525.1 538.3 M528.2 543.4 Q531.1 535.4 533.7 538.1 M528.9 541.5 L531.8 538.6 " fill="none" stroke="#6fa534" stroke-width="1.1"/><path d="M533.6 543.4 L533.7 546.1 L531.4 547.5 L529.7 549.9 L527.0 548.8 L523.9 548.8 L523.2 545.8 L521.1 543.4 L523.9 541.3 L524.4 538.6 L526.9 537.7 L529.7 537.0 L531.4 539.4 L534.3 540.4Z" fill="none" stroke="#6fa534" stroke-width="0.9" stroke-linejoin="round"/>
<path d="M516.7 563.0 L517.0 564.6 L516.2 566.0 L516.2 567.8 L514.8 568.8 L514.1 570.3 L512.3 570.6 L511.4 572.0 L509.8 572.3 L508.4 573.1 L506.8 572.8 L505.2 573.1 L503.9 571.9 L502.2 572.0 L501.3 570.6 L499.6 570.2 L499.2 568.5 L497.7 567.6 L497.8 565.9 L496.5 564.6 L496.8 563.0 L496.4 561.4 L497.4 560.0 L497.6 558.3 L498.8 557.2 L499.4 555.6 L501.1 555.2 L502.1 553.9 L503.8 553.9 L505.2 552.8 L506.8 553.3 L508.4 552.9 L509.8 553.7 L511.4 553.9 L512.4 555.3 L513.8 556.0 L514.4 557.5 L516.0 558.3 L516.1 560.0 L517.1 561.4Z" fill="none" stroke="#6fa534" stroke-width="1.0" stroke-linejoin="round"/><path d="M506.8 563.0 Q515.3 563.5 513.5 566.7 M508.8 563.1 L512.4 565.1 M506.8 563.0 Q508.9 571.2 505.3 570.5 M507.3 564.9 L506.5 569.0 M506.8 563.0 Q498.8 565.8 499.2 562.1 M504.9 563.6 L500.8 563.2 M506.8 563.0 Q500.4 557.4 503.8 556.0 M505.3 561.7 L503.6 557.9 M506.8 563.0 Q510.0 555.1 512.5 557.8 M507.5 561.1 L510.6 558.3 " fill="none" stroke="#6fa534" stroke-width="1.1"/><path d="M512.3 563.0 L512.7 565.9 L510.4 567.5 L508.2 569.2 L505.6 568.3 L503.0 567.7 L502.3 565.1 L500.0 563.0 L501.4 560.4 L502.7 557.9 L505.6 557.6 L508.3 556.6 L509.8 559.2 L512.1 560.4Z" fill="none" stroke="#6fa534" stroke-width="0.9" stroke-linejoin="round"/>
<path d="M502.7 589.5 L503.2 591.1 L502.2 592.5 L502.1 594.1 L500.5 595.0 L500.0 596.5 L498.6 597.2 L497.6 598.6 L496.0 598.9 L494.7 600.0 L493.0 599.3 L491.4 599.7 L490.0 598.8 L488.2 598.8 L487.3 597.4 L485.8 596.7 L485.2 595.2 L483.8 594.2 L483.8 592.5 L482.6 591.1 L483.1 589.5 L482.8 587.9 L483.9 586.5 L484.0 584.9 L485.2 583.9 L485.8 582.3 L487.4 581.8 L488.3 580.4 L490.1 580.4 L491.4 579.2 L493.0 579.7 L494.7 579.1 L496.0 580.2 L497.7 580.3 L498.6 581.8 L500.2 582.3 L500.8 583.8 L502.3 584.8 L502.4 586.4 L503.1 587.9Z" fill="none" stroke="#6fa534" stroke-width="1.0" stroke-linejoin="round"/><path d="M493.0 589.5 Q501.2 591.8 498.7 594.6 M494.9 590.0 L498.0 592.8 M493.0 589.5 Q494.2 597.9 490.7 596.8 M493.3 591.5 L492.1 595.4 M493.0 589.5 Q484.7 591.2 485.6 587.7 M491.0 589.9 L487.0 588.9 M493.0 589.5 Q486.9 583.6 490.4 582.3 M491.6 588.1 L490.1 584.2 M493.0 589.5 Q497.6 582.3 499.5 585.5 M494.1 587.8 L497.6 585.6 " fill="none" stroke="#6fa534" stroke-width="1.1"/><path d="M498.5 589.5 L499.0 592.4 L496.3 593.7 L494.4 595.6 L491.8 594.9 L489.0 594.5 L488.2 591.8 L485.9 589.5 L488.1 587.1 L489.0 584.5 L491.7 583.7 L494.5 583.0 L496.4 585.3 L498.4 586.9Z" fill="none" stroke="#6fa534" stroke-width="0.9" stroke-linejoin="round"/>
<g transform="translate(544,298.5) rotate(-20)"><rect x="-15.0" y="-4.5" width="30" height="9" rx="1.5" fill="#2c2c2c" stroke="#cfcfcf" stroke-width="1"/><path d="M-14.0 -2.7 L14.0 -2.7" stroke="#a8a8a8" stroke-width="0.7"/><path d="M-14.0 -0.9 L14.0 -0.9" stroke="#a8a8a8" stroke-width="0.7"/><path d="M-14.0 0.9 L14.0 0.9" stroke="#a8a8a8" stroke-width="0.7"/><path d="M-14.0 2.7 L14.0 2.7" stroke="#a8a8a8" stroke-width="0.7"/><path d="M-12.5 -4.0 L-11.0 4.0" stroke="#8a8a8a" stroke-width="0.5"/><path d="M-10.0 -4.0 L-8.5 4.0" stroke="#8a8a8a" stroke-width="0.5"/><path d="M-7.5 -4.0 L-6.0 4.0" stroke="#8a8a8a" stroke-width="0.5"/><path d="M-5.0 -4.0 L-3.5 4.0" stroke="#8a8a8a" stroke-width="0.5"/><path d="M-2.5 -4.0 L-1.0 4.0" stroke="#8a8a8a" stroke-width="0.5"/><path d="M0.0 -4.0 L1.5 4.0" stroke="#8a8a8a" stroke-width="0.5"/><path d="M2.5 -4.0 L4.0 4.0" stroke="#8a8a8a" stroke-width="0.5"/><path d="M5.0 -4.0 L6.5 4.0" stroke="#8a8a8a" stroke-width="0.5"/><path d="M7.5 -4.0 L9.0 4.0" stroke="#8a8a8a" stroke-width="0.5"/><path d="M10.0 -4.0 L11.5 4.0" stroke="#8a8a8a" stroke-width="0.5"/><path d="M12.5 -4.0 L14.0 4.0" stroke="#8a8a8a" stroke-width="0.5"/><path d="M0 -4.5 L0 4.5" stroke="#cfcfcf" stroke-width="0.7"/></g>
<g transform="translate(591.5,287.4) rotate(-2)"><rect x="-15.0" y="-4.5" width="30" height="9" rx="1.5" fill="#2c2c2c" stroke="#cfcfcf" stroke-width="1"/><path d="M-14.0 -2.7 L14.0 -2.7" stroke="#a8a8a8" stroke-width="0.7"/><path d="M-14.0 -0.9 L14.0 -0.9" stroke="#a8a8a8" stroke-width="0.7"/><path d="M-14.0 0.9 L14.0 0.9" stroke="#a8a8a8" stroke-width="0.7"/><path d="M-14.0 2.7 L14.0 2.7" stroke="#a8a8a8" stroke-width="0.7"/><path d="M-12.5 -4.0 L-11.0 4.0" stroke="#8a8a8a" stroke-width="0.5"/><path d="M-10.0 -4.0 L-8.5 4.0" stroke="#8a8a8a" stroke-width="0.5"/><path d="M-7.5 -4.0 L-6.0 4.0" stroke="#8a8a8a" stroke-width="0.5"/><path d="M-5.0 -4.0 L-3.5 4.0" stroke="#8a8a8a" stroke-width="0.5"/><path d="M-2.5 -4.0 L-1.0 4.0" stroke="#8a8a8a" stroke-width="0.5"/><path d="M0.0 -4.0 L1.5 4.0" stroke="#8a8a8a" stroke-width="0.5"/><path d="M2.5 -4.0 L4.0 4.0" stroke="#8a8a8a" stroke-width="0.5"/><path d="M5.0 -4.0 L6.5 4.0" stroke="#8a8a8a" stroke-width="0.5"/><path d="M7.5 -4.0 L9.0 4.0" stroke="#8a8a8a" stroke-width="0.5"/><path d="M10.0 -4.0 L11.5 4.0" stroke="#8a8a8a" stroke-width="0.5"/><path d="M12.5 -4.0 L14.0 4.0" stroke="#8a8a8a" stroke-width="0.5"/><path d="M0 -4.5 L0 4.5" stroke="#cfcfcf" stroke-width="0.7"/></g>
<g transform="translate(639.8,296) rotate(20)"><rect x="-15.0" y="-4.5" width="30" height="9" rx="1.5" fill="#2c2c2c" stroke="#cfcfcf" stroke-width="1"/><path d="M-14.0 -2.7 L14.0 -2.7" stroke="#a8a8a8" stroke-width="0.7"/><path d="M-14.0 -0.9 L14.0 -0.9" stroke="#a8a8a8" stroke-width="0.7"/><path d="M-14.0 0.9 L14.0 0.9" stroke="#a8a8a8" stroke-width="0.7"/><path d="M-14.0 2.7 L14.0 2.7" stroke="#a8a8a8" stroke-width="0.7"/><path d="M-12.5 -4.0 L-11.0 4.0" stroke="#8a8a8a" stroke-width="0.5"/><path d="M-10.0 -4.0 L-8.5 4.0" stroke="#8a8a8a" stroke-width="0.5"/><path d="M-7.5 -4.0 L-6.0 4.0" stroke="#8a8a8a" stroke-width="0.5"/><path d="M-5.0 -4.0 L-3.5 4.0" stroke="#8a8a8a" stroke-width="0.5"/><path d="M-2.5 -4.0 L-1.0 4.0" stroke="#8a8a8a" stroke-width="0.5"/><path d="M0.0 -4.0 L1.5 4.0" stroke="#8a8a8a" stroke-width="0.5"/><path d="M2.5 -4.0 L4.0 4.0" stroke="#8a8a8a" stroke-width="0.5"/><path d="M5.0 -4.0 L6.5 4.0" stroke="#8a8a8a" stroke-width="0.5"/><path d="M7.5 -4.0 L9.0 4.0" stroke="#8a8a8a" stroke-width="0.5"/><path d="M10.0 -4.0 L11.5 4.0" stroke="#8a8a8a" stroke-width="0.5"/><path d="M12.5 -4.0 L14.0 4.0" stroke="#8a8a8a" stroke-width="0.5"/><path d="M0 -4.5 L0 4.5" stroke="#cfcfcf" stroke-width="0.7"/></g>
<g transform="translate(681,322.8) rotate(45)"><rect x="-15.0" y="-4.5" width="30" height="9" rx="1.5" fill="#2c2c2c" stroke="#cfcfcf" stroke-width="1"/><path d="M-14.0 -2.7 L14.0 -2.7" stroke="#a8a8a8" stroke-width="0.7"/><path d="M-14.0 -0.9 L14.0 -0.9" stroke="#a8a8a8" stroke-width="0.7"/><path d="M-14.0 0.9 L14.0 0.9" stroke="#a8a8a8" stroke-width="0.7"/><path d="M-14.0 2.7 L14.0 2.7" stroke="#a8a8a8" stroke-width="0.7"/><path d="M-12.5 -4.0 L-11.0 4.0" stroke="#8a8a8a" stroke-width="0.5"/><path d="M-10.0 -4.0 L-8.5 4.0" stroke="#8a8a8a" stroke-width="0.5"/><path d="M-7.5 -4.0 L-6.0 4.0" stroke="#8a8a8a" stroke-width="0.5"/><path d="M-5.0 -4.0 L-3.5 4.0" stroke="#8a8a8a" stroke-width="0.5"/><path d="M-2.5 -4.0 L-1.0 4.0" stroke="#8a8a8a" stroke-width="0.5"/><path d="M0.0 -4.0 L1.5 4.0" stroke="#8a8a8a" stroke-width="0.5"/><path d="M2.5 -4.0 L4.0 4.0" stroke="#8a8a8a" stroke-width="0.5"/><path d="M5.0 -4.0 L6.5 4.0" stroke="#8a8a8a" stroke-width="0.5"/><path d="M7.5 -4.0 L9.0 4.0" stroke="#8a8a8a" stroke-width="0.5"/><path d="M10.0 -4.0 L11.5 4.0" stroke="#8a8a8a" stroke-width="0.5"/><path d="M12.5 -4.0 L14.0 4.0" stroke="#8a8a8a" stroke-width="0.5"/><path d="M0 -4.5 L0 4.5" stroke="#cfcfcf" stroke-width="0.7"/></g>
<g transform="translate(706.9,365) rotate(68)"><rect x="-15.0" y="-4.5" width="30" height="9" rx="1.5" fill="#2c2c2c" stroke="#cfcfcf" stroke-width="1"/><path d="M-14.0 -2.7 L14.0 -2.7" stroke="#a8a8a8" stroke-width="0.7"/><path d="M-14.0 -0.9 L14.0 -0.9" stroke="#a8a8a8" stroke-width="0.7"/><path d="M-14.0 0.9 L14.0 0.9" stroke="#a8a8a8" stroke-width="0.7"/><path d="M-14.0 2.7 L14.0 2.7" stroke="#a8a8a8" stroke-width="0.7"/><path d="M-12.5 -4.0 L-11.0 4.0" stroke="#8a8a8a" stroke-width="0.5"/><path d="M-10.0 -4.0 L-8.5 4.0" stroke="#8a8a8a" stroke-width="0.5"/><path d="M-7.5 -4.0 L-6.0 4.0" stroke="#8a8a8a" stroke-width="0.5"/><path d="M-5.0 -4.0 L-3.5 4.0" stroke="#8a8a8a" stroke-width="0.5"/><path d="M-2.5 -4.0 L-1.0 4.0" stroke="#8a8a8a" stroke-width="0.5"/><path d="M0.0 -4.0 L1.5 4.0" stroke="#8a8a8a" stroke-width="0.5"/><path d="M2.5 -4.0 L4.0 4.0" stroke="#8a8a8a" stroke-width="0.5"/><path d="M5.0 -4.0 L6.5 4.0" stroke="#8a8a8a" stroke-width="0.5"/><path d="M7.5 -4.0 L9.0 4.0" stroke="#8a8a8a" stroke-width="0.5"/><path d="M10.0 -4.0 L11.5 4.0" stroke="#8a8a8a" stroke-width="0.5"/><path d="M12.5 -4.0 L14.0 4.0" stroke="#8a8a8a" stroke-width="0.5"/><path d="M0 -4.5 L0 4.5" stroke="#cfcfcf" stroke-width="0.7"/></g>
<g transform="translate(713,413.5) rotate(95)"><rect x="-15.0" y="-4.5" width="30" height="9" rx="1.5" fill="#2c2c2c" stroke="#cfcfcf" stroke-width="1"/><path d="M-14.0 -2.7 L14.0 -2.7" stroke="#a8a8a8" stroke-width="0.7"/><path d="M-14.0 -0.9 L14.0 -0.9" stroke="#a8a8a8" stroke-width="0.7"/><path d="M-14.0 0.9 L14.0 0.9" stroke="#a8a8a8" stroke-width="0.7"/><path d="M-14.0 2.7 L14.0 2.7" stroke="#a8a8a8" stroke-width="0.7"/><path d="M-12.5 -4.0 L-11.0 4.0" stroke="#8a8a8a" stroke-width="0.5"/><path d="M-10.0 -4.0 L-8.5 4.0" stroke="#8a8a8a" stroke-width="0.5"/><path d="M-7.5 -4.0 L-6.0 4.0" stroke="#8a8a8a" stroke-width="0.5"/><path d="M-5.0 -4.0 L-3.5 4.0" stroke="#8a8a8a" stroke-width="0.5"/><path d="M-2.5 -4.0 L-1.0 4.0" stroke="#8a8a8a" stroke-width="0.5"/><path d="M0.0 -4.0 L1.5 4.0" stroke="#8a8a8a" stroke-width="0.5"/><path d="M2.5 -4.0 L4.0 4.0" stroke="#8a8a8a" stroke-width="0.5"/><path d="M5.0 -4.0 L6.5 4.0" stroke="#8a8a8a" stroke-width="0.5"/><path d="M7.5 -4.0 L9.0 4.0" stroke="#8a8a8a" stroke-width="0.5"/><path d="M10.0 -4.0 L11.5 4.0" stroke="#8a8a8a" stroke-width="0.5"/><path d="M12.5 -4.0 L14.0 4.0" stroke="#8a8a8a" stroke-width="0.5"/><path d="M0 -4.5 L0 4.5" stroke="#cfcfcf" stroke-width="0.7"/></g>
<g transform="translate(574.5,543) rotate(5)"><rect x="-15.0" y="-4.5" width="30" height="9" rx="1.5" fill="#2c2c2c" stroke="#cfcfcf" stroke-width="1"/><path d="M-14.0 -2.7 L14.0 -2.7" stroke="#a8a8a8" stroke-width="0.7"/><path d="M-14.0 -0.9 L14.0 -0.9" stroke="#a8a8a8" stroke-width="0.7"/><path d="M-14.0 0.9 L14.0 0.9" stroke="#a8a8a8" stroke-width="0.7"/><path d="M-14.0 2.7 L14.0 2.7" stroke="#a8a8a8" stroke-width="0.7"/><path d="M-12.5 -4.0 L-11.0 4.0" stroke="#8a8a8a" stroke-width="0.5"/><path d="M-10.0 -4.0 L-8.5 4.0" stroke="#8a8a8a" stroke-width="0.5"/><path d="M-7.5 -4.0 L-6.0 4.0" stroke="#8a8a8a" stroke-width="0.5"/><path d="M-5.0 -4.0 L-3.5 4.0" stroke="#8a8a8a" stroke-width="0.5"/><path d="M-2.5 -4.0 L-1.0 4.0" stroke="#8a8a8a" stroke-width="0.5"/><path d="M0.0 -4.0 L1.5 4.0" stroke="#8a8a8a" stroke-width="0.5"/><path d="M2.5 -4.0 L4.0 4.0" stroke="#8a8a8a" stroke-width="0.5"/><path d="M5.0 -4.0 L6.5 4.0" stroke="#8a8a8a" stroke-width="0.5"/><path d="M7.5 -4.0 L9.0 4.0" stroke="#8a8a8a" stroke-width="0.5"/><path d="M10.0 -4.0 L11.5 4.0" stroke="#8a8a8a" stroke-width="0.5"/><path d="M12.5 -4.0 L14.0 4.0" stroke="#8a8a8a" stroke-width="0.5"/><path d="M0 -4.5 L0 4.5" stroke="#cfcfcf" stroke-width="0.7"/></g>
<circle cx="661.6" cy="306.9" r="3.6" fill="none" stroke="#e8e8e8" stroke-width="1.3"/>
<circle cx="602.4" cy="545.5" r="3.6" fill="none" stroke="#e8e8e8" stroke-width="1.3"/>
<circle cx="779.8" cy="543.2" r="3.6" fill="none" stroke="#e8e8e8" stroke-width="1.3"/>
<g stroke="#c81010" stroke-width="1" fill="none"><path d="M419 538.5 L460 538.5 M439.5 519 L439.5 559"/><circle cx="439.5" cy="538.5" r="5"/></g></svg>
</div>
<div id="vscroll" class="a"></div>
<div class="a" style="left:1143px;top:303px;width:8px;height:279px;border-radius:4px;background:#7b7b7b"></div>
<div id="hscroll" class="a"></div>
<div class="a" style="left:168px;top:736px;width:858px;height:9px;border-radius:4.5px;background:#7b7b7b"></div>
<div id="ratio" class="a">1 &lt; 10</div>
<div id="cmdhist" class="a"><i>Comando:</i> gb</div>
<div id="cmdrow" class="a"><span style="position:absolute;left:1px;top:1px">Comando:</span></div>
<div class="a" style="left:138px;top:776px;width:989px;height:18px;background:#fff"></div>
<div class="a" style="left:1127px;top:772px;width:26px;height:26px;border:1px solid #b4b4b4;background:linear-gradient(#f4f4f4,#e6e6e6)"></div>
<svg class="a" style="left:1131px;top:776px;" width="18" height="18" viewBox="0 0 18 18"><rect x="1.5" y="4.5" width="14" height="9" fill="#fff" stroke="#111" stroke-width="1"/><rect x="1" y="4" width="15" height="2.5" fill="#111"/></svg>
<div id="dock" class="a"></div>
<div class="dtitle" style="left:1154px;top:108px;width:301px;padding-left:36px;color:#333">Lista de bloques</div>
<div class="cbtn" style="left:1157px;top:111px"></div>
<svg class="a" style="left:1157px;top:111px;" width="14" height="14" viewBox="0 0 14 14"><path d="M4.3 4.3 L9.7 9.7 M9.7 4.3 L4.3 9.7" stroke="#fff" stroke-width="1.8"/></svg>
<div class="cbtn" style="left:1175px;top:111px"></div>
<svg class="a" style="left:1175px;top:111px;" width="14" height="14" viewBox="0 0 14 14"><rect x="5.5" y="3.5" width="5" height="4" fill="none" stroke="#fff" stroke-width="1.1"/><rect x="3.5" y="6" width="5" height="4.5" fill="#6f6f6f" stroke="#fff" stroke-width="1.1"/></svg>
<div class="dtb" style="left:1156px;top:130px;width:37px;height:26px"></div>
<div class="dtb" style="left:1193px;top:130px;width:37px;height:26px"></div>
<div class="dtb" style="left:1230px;top:130px;width:38px;height:26px"></div>
<div class="dtb" style="left:1268px;top:130px;width:37px;height:26px"></div>
<div class="dtb" style="left:1305px;top:130px;width:38px;height:26px"></div>
<div class="dtb" style="left:1343px;top:130px;width:37px;height:26px"></div>
<div class="dtb" style="left:1380px;top:130px;width:38px;height:26px"></div>
<div class="dtb" style="left:1418px;top:130px;width:37px;height:26px"></div>
<svg class="a" style="left:1166px;top:137px;" width="16" height="11" viewBox="0 0 16 11"><path d="M0.3 5.8 C 3 -0.3, 12.5 -0.6, 15.7 5.6 C 12.8 11.6, 3 11.8, 0.3 5.8 Z" fill="#000"/><path d="M3.2 6.2 C 5 2.6, 10.8 2.4, 12.8 6 C 10.8 9.2, 5 9.4, 3.2 6.2 Z" fill="#fff"/><circle cx="7.9" cy="5.5" r="2.7" fill="#000"/><circle cx="7.1" cy="4.6" r="0.7" fill="#fff"/></svg>
<svg class="a" style="left:1203px;top:137px;" width="16" height="11" viewBox="0 0 16 11"><path d="M0.3 5.8 C 3 -0.3, 12.5 -0.6, 15.7 5.6 C 12.8 11.6, 3 11.8, 0.3 5.8 Z" fill="#a8a8a8"/><path d="M3.2 6.2 C 5 2.6, 10.8 2.4, 12.8 6 C 10.8 9.2, 5 9.4, 3.2 6.2 Z" fill="#f0f0f0"/><circle cx="7.9" cy="5.5" r="2.7" fill="#a8a8a8"/><circle cx="7.1" cy="4.6" r="0.7" fill="#f0f0f0"/></svg>
<svg class="a" style="left:1240px;top:134px;" width="18" height="18" viewBox="0 0 18 18"><path d="M9 3 L9 15 M3 9 L15 9" stroke="#e00000" stroke-width="3.2"/><path d="M9 3 L9 15 M3 9 L15 9" stroke="#a00000" stroke-width="0.4" fill="none"/></svg>
<svg class="a" style="left:1277px;top:134px;" width="18" height="18" viewBox="0 0 18 18"><path d="M3 9 L15 9" stroke="#f08080" stroke-width="2.6"/></svg>
<svg class="a" style="left:1312px;top:133px;" width="24" height="20" viewBox="0 0 24 20"><text x="2" y="14" font-family="Liberation Sans" font-size="12" fill="#888">a</text><text x="13" y="14" font-family="Liberation Sans" font-size="12" fill="#888">b</text><path d="M11.5 3 L11.5 17" stroke="#666" stroke-width="0.9"/></svg>
<svg class="a" style="left:1353px;top:134px;" width="16" height="17" viewBox="0 0 16 17"><path d="M1.5 13.5 L11 4 L13 6 L3.5 15.5 L1 16 Z" fill="#e8a838" stroke="#9a6010" stroke-width="0.8"/><path d="M11 4 L12.5 2.5 L14.5 4.5 L13 6 Z" fill="#e03030"/><path d="M1 16 L2 14" stroke="#333" stroke-width="1"/></svg>
<svg class="a" style="left:1390px;top:133px;" width="18" height="20" viewBox="0 0 18 20"><rect x="3" y="1" width="12" height="18" fill="#e4e8f0"/><path d="M7 3 C 11 3, 11 8, 9 9 L9 16 M6 13 L9 16.5 L12 13" fill="none" stroke="#7a9ae8" stroke-width="2"/></svg>
<svg class="a" style="left:1427px;top:135px;" width="16" height="16" viewBox="0 0 16 16"><rect x="1.5" y="1.5" width="13" height="13" fill="#e85a3a" stroke="#c04020" stroke-width="0.8"/><path d="M5 5 L11 11 M11 5 L5 11" stroke="#fff" stroke-width="1.8"/></svg>
<div class="a" style="left:1154px;top:156px;width:301px;height:152px;background:#fff;border-top:1px solid #c8c8c8;border-bottom:1px solid #9a9a9a;border-left:1px solid #c8c8c8"></div>
<svg class="a" style="left:1161px;top:161px;" width="16" height="11" viewBox="0 0 16 11"><path d="M0.3 5.8 C 3 -0.3, 12.5 -0.6, 15.7 5.6 C 12.8 11.6, 3 11.8, 0.3 5.8 Z" fill="#000"/><path d="M3.2 6.2 C 5 2.6, 10.8 2.4, 12.8 6 C 10.8 9.2, 5 9.4, 3.2 6.2 Z" fill="#fff"/><circle cx="7.9" cy="5.5" r="2.7" fill="#000"/><circle cx="7.1" cy="4.6" r="0.7" fill="#fff"/></svg>
<div class="li" style="left:1205px;top:159px">Model (*Model_Space)</div>
<svg class="a" style="left:1161px;top:181px;" width="16" height="11" viewBox="0 0 16 11"><path d="M0.3 5.8 C 3 -0.3, 12.5 -0.6, 15.7 5.6 C 12.8 11.6, 3 11.8, 0.3 5.8 Z" fill="#000"/><path d="M3.2 6.2 C 5 2.6, 10.8 2.4, 12.8 6 C 10.8 9.2, 5 9.4, 3.2 6.2 Z" fill="#fff"/><circle cx="7.9" cy="5.5" r="2.7" fill="#000"/><circle cx="7.1" cy="4.6" r="0.7" fill="#fff"/></svg>
<div class="li" style="left:1205px;top:179px">Layout1 (*Paper_Space)</div>
<svg class="a" style="left:1161px;top:201px;" width="16" height="11" viewBox="0 0 16 11"><path d="M0.3 5.8 C 3 -0.3, 12.5 -0.6, 15.7 5.6 C 12.8 11.6, 3 11.8, 0.3 5.8 Z" fill="#000"/><path d="M3.2 6.2 C 5 2.6, 10.8 2.4, 12.8 6 C 10.8 9.2, 5 9.4, 3.2 6.2 Z" fill="#fff"/><circle cx="7.9" cy="5.5" r="2.7" fill="#000"/><circle cx="7.1" cy="4.6" r="0.7" fill="#fff"/></svg>
<div class="li" style="left:1205px;top:199px">Árbol A</div>
<svg class="a" style="left:1161px;top:221px;" width="16" height="11" viewBox="0 0 16 11"><path d="M0.3 5.8 C 3 -0.3, 12.5 -0.6, 15.7 5.6 C 12.8 11.6, 3 11.8, 0.3 5.8 Z" fill="#000"/><path d="M3.2 6.2 C 5 2.6, 10.8 2.4, 12.8 6 C 10.8 9.2, 5 9.4, 3.2 6.2 Z" fill="#fff"/><circle cx="7.9" cy="5.5" r="2.7" fill="#000"/><circle cx="7.1" cy="4.6" r="0.7" fill="#fff"/></svg>
<div class="li" style="left:1205px;top:219px">Árbol B</div>
<svg class="a" style="left:1161px;top:241px;" width="16" height="11" viewBox="0 0 16 11"><path d="M0.3 5.8 C 3 -0.3, 12.5 -0.6, 15.7 5.6 C 12.8 11.6, 3 11.8, 0.3 5.8 Z" fill="#000"/><path d="M3.2 6.2 C 5 2.6, 10.8 2.4, 12.8 6 C 10.8 9.2, 5 9.4, 3.2 6.2 Z" fill="#fff"/><circle cx="7.9" cy="5.5" r="2.7" fill="#000"/><circle cx="7.1" cy="4.6" r="0.7" fill="#fff"/></svg>
<div class="li" style="left:1205px;top:239px">Banco</div>
<svg class="a" style="left:1161px;top:261px;" width="16" height="11" viewBox="0 0 16 11"><path d="M0.3 5.8 C 3 -0.3, 12.5 -0.6, 15.7 5.6 C 12.8 11.6, 3 11.8, 0.3 5.8 Z" fill="#000"/><path d="M3.2 6.2 C 5 2.6, 10.8 2.4, 12.8 6 C 10.8 9.2, 5 9.4, 3.2 6.2 Z" fill="#fff"/><circle cx="7.9" cy="5.5" r="2.7" fill="#000"/><circle cx="7.1" cy="4.6" r="0.7" fill="#fff"/></svg>
<div class="li" style="left:1205px;top:259px">Papelera</div>
<svg class="a" style="left:1184px;top:158px;" width="16" height="17" viewBox="0 0 16 17"><path d="M1.5 13.5 L11 4 L13 6 L3.5 15.5 L1 16 Z" fill="#e8a838" stroke="#9a6010" stroke-width="0.8"/><path d="M11 4 L12.5 2.5 L14.5 4.5 L13 6 Z" fill="#e03030"/><path d="M1 16 L2 14" stroke="#333" stroke-width="1"/></svg>
<div class="dtitle" style="left:1154px;top:309px;width:301px;height:22px;line-height:25px;padding-left:36px;color:#333">Lista de capas</div>
<div class="cbtn" style="left:1157px;top:312px"></div>
<svg class="a" style="left:1157px;top:312px;" width="14" height="14" viewBox="0 0 14 14"><path d="M4.3 4.3 L9.7 9.7 M9.7 4.3 L4.3 9.7" stroke="#fff" stroke-width="1.8"/></svg>
<div class="cbtn" style="left:1175px;top:312px"></div>
<svg class="a" style="left:1175px;top:312px;" width="14" height="14" viewBox="0 0 14 14"><rect x="5.5" y="3.5" width="5" height="4" fill="none" stroke="#fff" stroke-width="1.1"/><rect x="3.5" y="6" width="5" height="4.5" fill="#6f6f6f" stroke="#fff" stroke-width="1.1"/></svg>
<div class="dtb" style="left:1156px;top:331px;width:58px;height:27px"></div>
<div class="dtb" style="left:1214px;top:331px;width:61px;height:27px"></div>
<div class="dtb" style="left:1275px;top:331px;width:59px;height:27px"></div>
<div class="dtb" style="left:1334px;top:331px;width:60px;height:27px"></div>
<div class="dtb" style="left:1394px;top:331px;width:61px;height:27px"></div>
<svg class="a" style="left:1177px;top:338px;" width="16" height="11" viewBox="0 0 16 11"><path d="M0.3 5.8 C 3 -0.3, 12.5 -0.6, 15.7 5.6 C 12.8 11.6, 3 11.8, 0.3 5.8 Z" fill="#000"/><path d="M3.2 6.2 C 5 2.6, 10.8 2.4, 12.8 6 C 10.8 9.2, 5 9.4, 3.2 6.2 Z" fill="#fff"/><circle cx="7.9" cy="5.5" r="2.7" fill="#000"/><circle cx="7.1" cy="4.6" r="0.7" fill="#fff"/></svg>
<svg class="a" style="left:1237px;top:338px;" width="16" height="11" viewBox="0 0 16 11"><path d="M0.3 5.8 C 3 -0.3, 12.5 -0.6, 15.7 5.6 C 12.8 11.6, 3 11.8, 0.3 5.8 Z" fill="#a8a8a8"/><path d="M3.2 6.2 C 5 2.6, 10.8 2.4, 12.8 6 C 10.8 9.2, 5 9.4, 3.2 6.2 Z" fill="#f0f0f0"/><circle cx="7.9" cy="5.5" r="2.7" fill="#a8a8a8"/><circle cx="7.1" cy="4.6" r="0.7" fill="#f0f0f0"/></svg>
<svg class="a" style="left:1296px;top:335px;" width="18" height="18" viewBox="0 0 18 18"><path d="M9 3 L9 15 M3 9 L15 9" stroke="#e00000" stroke-width="3.2"/></svg>
<svg class="a" style="left:1356px;top:335px;" width="18" height="18" viewBox="0 0 18 18"><path d="M3 9 L15 9" stroke="#e00000" stroke-width="3"/></svg>
<svg class="a" style="left:1417px;top:335px;" width="16" height="17" viewBox="0 0 16 17"><path d="M1.5 13.5 L11 4 L13 6 L3.5 15.5 L1 16 Z" fill="#e8a838" stroke="#9a6010" stroke-width="0.8"/><path d="M11 4 L12.5 2.5 L14.5 4.5 L13 6 Z" fill="#e03030"/><path d="M1 16 L2 14" stroke="#333" stroke-width="1"/></svg>
<div class="a" style="left:1155px;top:358px;width:300px;height:441px;background:#fff;border-top:1px solid #c8c8c8"></div>
<div class="a" style="left:1161px;top:364px;width:16px;height:9px;background:#ffffff;border:1px solid #000"></div>
<div class="li" style="left:1183px;top:360px">0</div>
<svg class="a" style="left:1415px;top:362px;" width="16" height="11" viewBox="0 0 16 11"><path d="M0.3 5.8 C 3 -0.3, 12.5 -0.6, 15.7 5.6 C 12.8 11.6, 3 11.8, 0.3 5.8 Z" fill="#000"/><path d="M3.2 6.2 C 5 2.6, 10.8 2.4, 12.8 6 C 10.8 9.2, 5 9.4, 3.2 6.2 Z" fill="#fff"/><circle cx="7.9" cy="5.5" r="2.7" fill="#000"/><circle cx="7.1" cy="4.6" r="0.7" fill="#fff"/></svg>
<svg class="a" style="left:1438px;top:360px;" width="13" height="15" viewBox="0 0 13 15"><path d="M3 7 L3 4.5 C 3 1, 10 1, 10 4.5 L10 7" fill="none" stroke="#d8b0b0" stroke-width="1.8"/><rect x="1.5" y="6.5" width="10" height="8" rx="1" fill="#d8b0b0"/></svg>
<div class="a" style="left:1161px;top:384px;width:16px;height:9px;background:#d89a5c;border:1px solid #000"></div>
<div class="li" style="left:1183px;top:380px">Caminos</div>
<svg class="a" style="left:1415px;top:382px;" width="16" height="11" viewBox="0 0 16 11"><path d="M0.3 5.8 C 3 -0.3, 12.5 -0.6, 15.7 5.6 C 12.8 11.6, 3 11.8, 0.3 5.8 Z" fill="#000"/><path d="M3.2 6.2 C 5 2.6, 10.8 2.4, 12.8 6 C 10.8 9.2, 5 9.4, 3.2 6.2 Z" fill="#fff"/><circle cx="7.9" cy="5.5" r="2.7" fill="#000"/><circle cx="7.1" cy="4.6" r="0.7" fill="#fff"/></svg>
<svg class="a" style="left:1438px;top:380px;" width="13" height="15" viewBox="0 0 13 15"><path d="M3 7 L3 4.5 C 3 1, 10 1, 10 4.5 L10 7" fill="none" stroke="#d8b0b0" stroke-width="1.8"/><rect x="1.5" y="6.5" width="10" height="8" rx="1" fill="#d8b0b0"/></svg>
<div class="a" style="left:1161px;top:404px;width:16px;height:9px;background:#c8b0b0;border:1px solid #000"></div>
<div class="li" style="left:1183px;top:400px">Instalaciones</div>
<svg class="a" style="left:1415px;top:402px;" width="16" height="11" viewBox="0 0 16 11"><path d="M0.3 5.8 C 3 -0.3, 12.5 -0.6, 15.7 5.6 C 12.8 11.6, 3 11.8, 0.3 5.8 Z" fill="#000"/><path d="M3.2 6.2 C 5 2.6, 10.8 2.4, 12.8 6 C 10.8 9.2, 5 9.4, 3.2 6.2 Z" fill="#fff"/><circle cx="7.9" cy="5.5" r="2.7" fill="#000"/><circle cx="7.1" cy="4.6" r="0.7" fill="#fff"/></svg>
<svg class="a" style="left:1438px;top:400px;" width="13" height="15" viewBox="0 0 13 15"><path d="M3 7 L3 4.5 C 3 1, 10 1, 10 4.5 L10 7" fill="none" stroke="#d8b0b0" stroke-width="1.8"/><rect x="1.5" y="6.5" width="10" height="8" rx="1" fill="#d8b0b0"/></svg>
<div class="a" style="left:1161px;top:424px;width:16px;height:9px;background:#6e8e2a;border:1px solid #000"></div>
<div class="li" style="left:1183px;top:420px">Plantas</div>
<svg class="a" style="left:1415px;top:422px;" width="16" height="11" viewBox="0 0 16 11"><path d="M0.3 5.8 C 3 -0.3, 12.5 -0.6, 15.7 5.6 C 12.8 11.6, 3 11.8, 0.3 5.8 Z" fill="#000"/><path d="M3.2 6.2 C 5 2.6, 10.8 2.4, 12.8 6 C 10.8 9.2, 5 9.4, 3.2 6.2 Z" fill="#fff"/><circle cx="7.9" cy="5.5" r="2.7" fill="#000"/><circle cx="7.1" cy="4.6" r="0.7" fill="#fff"/></svg>
<svg class="a" style="left:1438px;top:420px;" width="13" height="15" viewBox="0 0 13 15"><path d="M3 7 L3 4.5 C 3 1, 10 1, 10 4.5 L10 7" fill="none" stroke="#d8b0b0" stroke-width="1.8"/><rect x="1.5" y="6.5" width="10" height="8" rx="1" fill="#d8b0b0"/></svg>
<svg class="a" style="left:1392px;top:420px;" width="16" height="17" viewBox="0 0 16 17"><path d="M1.5 13.5 L11 4 L13 6 L3.5 15.5 L1 16 Z" fill="#e8a838" stroke="#9a6010" stroke-width="0.8"/><path d="M11 4 L12.5 2.5 L14.5 4.5 L13 6 Z" fill="#e03030"/><path d="M1 16 L2 14" stroke="#333" stroke-width="1"/></svg>
<div class="a" style="left:1154.5px;top:298px;width:1.5px;height:11px;background:linear-gradient(rgba(235,70,70,0),rgba(235,70,70,0.7))"></div>
<div class="a" style="left:1453.5px;top:298px;width:1.5px;height:11px;background:linear-gradient(rgba(235,70,70,0),rgba(235,70,70,0.7))"></div>
<div class="a" style="left:1155px;top:309px;width:300px;height:490px;background:rgba(255,40,50,0.16)"></div>
<div class="a" style="left:1154.5px;top:309px;width:1.5px;height:490px;background:rgba(235,70,70,0.7)"></div>
<div class="a" style="left:1453.5px;top:309px;width:1.5px;height:490px;background:rgba(235,70,70,0.7)"></div>
<div class="a" style="left:1146px;top:308px;width:320px;height:1.5px;background:linear-gradient(90deg,rgba(240,60,60,0),rgba(235,70,70,0.7) 4%,rgba(235,70,70,0.7) 96%,rgba(240,60,60,0))"></div>
<div class="a" style="left:1146px;top:798px;width:320px;height:1.5px;background:linear-gradient(90deg,rgba(240,60,60,0),rgba(235,70,70,0.7) 4%,rgba(235,70,70,0.7) 96%,rgba(240,60,60,0))"></div>
<div class="a" style="left:1155px;top:799px;width:1.5px;height:12px;background:linear-gradient(rgba(240,60,60,0.7),rgba(240,60,60,0))"></div>
<div class="a" style="left:1453px;top:799px;width:1.5px;height:12px;background:linear-gradient(rgba(240,60,60,0.7),rgba(240,60,60,0))"></div>
<svg class="a" style="left:1265px;top:514px;" width="80" height="80" viewBox="0 0 80 80"><defs><radialGradient id="ring"><stop offset="0.78" stop-color="#f0e8f0" stop-opacity="0"/><stop offset="0.84" stop-color="#d8d4e0" stop-opacity="0.5"/><stop offset="0.89" stop-color="#b8bed4" stop-opacity="0.8"/><stop offset="0.93" stop-color="#aeb6cc" stop-opacity="0.85"/><stop offset="0.97" stop-color="#b4bad0" stop-opacity="0.9"/><stop offset="0.995" stop-color="#b0b8cc" stop-opacity="0.7"/><stop offset="1" stop-color="#b8bcd0" stop-opacity="0"/></radialGradient></defs><circle cx="40" cy="40" r="40" fill="url(#ring)"/></svg>
<svg class="a" style="left:1304px;top:553px;" width="20" height="30" viewBox="0 0 20 30"><path d="M1 1 L1 22 L5.8 17.4 L10.6 26.6 L13.8 25 L9.6 16.6 L15.8 15.8 Z" fill="#fff" stroke="#111" stroke-width="1.2" stroke-linejoin="round"/></svg>
<div id="rtb" class="a"></div>
<svg class="a" style="left:1463px;top:116px;" width="42" height="2" viewBox="0 0 42 2"><rect x="0.0" y="0" width="1.8" height="1.8" fill="#8a8a8a"/><rect x="6.0" y="0" width="1.8" height="1.8" fill="#8a8a8a"/><rect x="12.0" y="0" width="1.8" height="1.8" fill="#8a8a8a"/><rect x="18.0" y="0" width="1.8" height="1.8" fill="#8a8a8a"/><rect x="24.0" y="0" width="1.8" height="1.8" fill="#8a8a8a"/></svg>
<div class="a" style="left:1456px;top:121px;width:48px;height:42px;border-radius:7px;background:#b9b9b9"></div>
<div class="a" style="left:1456px;top:167px;width:48px;height:43px;border-radius:7px;background:#b9b9b9"></div>
<svg class="a" style="left:1463px;top:127px;" width="29" height="29" viewBox="0 0 29 29"><rect x="0.5" y="0.5" width="28" height="28" fill="#fff" stroke="#333" stroke-width="1"/><rect x="0" y="0" width="29" height="5" fill="#000"/><rect x="1.5" y="1.3" width="3" height="2.6" fill="#fff"/><path d="M7 11 L13 9 L13 23 L7 25 Z" fill="#d0d0d0" stroke="#555" stroke-width="0.8"/><path d="M10 10 L17 8 L17 22 L10 24 Z" fill="#e0e0e0" stroke="#555" stroke-width="0.8"/><path d="M14 9 L22 7 L22 20 L14 23 Z" fill="#f8f8f8" stroke="#555" stroke-width="0.8"/><path d="M16 20 L20 13 M18 21 L21 15" stroke="#e04040" stroke-width="1"/></svg>
<svg class="a" style="left:1463px;top:173px;" width="29" height="29" viewBox="0 0 29 29"><rect x="0.5" y="0.5" width="28" height="28" fill="#fff" stroke="#333" stroke-width="1"/><rect x="0" y="0" width="29" height="5" fill="#000"/><rect x="1.5" y="1.3" width="3" height="2.6" fill="#fff"/><rect x="6" y="11" width="12" height="9" fill="#f2e6b8" stroke="#555" stroke-width="0.8"/><circle cx="19" cy="19" r="5.5" fill="#f2e6b8" fill-opacity="0.7" stroke="#555" stroke-width="0.8"/></svg>
<svg class="a" style="left:1463px;top:220px;" width="29" height="29" viewBox="0 0 29 29"><rect x="0.5" y="0.5" width="28" height="28" fill="#fff" stroke="#333" stroke-width="1"/><rect x="0" y="0" width="29" height="5" fill="#000"/><rect x="1.5" y="1.3" width="3" height="2.6" fill="#fff"/><rect x="6" y="11" width="18" height="12" rx="2" fill="#f2f2f2" stroke="#a8b8d8" stroke-width="0.9"/></svg>
<svg class="a" style="left:1458px;top:262px;" width="42" height="2" viewBox="0 0 42 2"><rect x="0" y="0" width="1" height="1" fill="#6a6a6a"/><rect x="3" y="0" width="1" height="1" fill="#6a6a6a"/><rect x="6" y="0" width="1" height="1" fill="#6a6a6a"/><rect x="9" y="0" width="1" height="1" fill="#6a6a6a"/><rect x="12" y="0" width="1" height="1" fill="#6a6a6a"/><rect x="15" y="0" width="1" height="1" fill="#6a6a6a"/><rect x="18" y="0" width="1" height="1" fill="#6a6a6a"/><rect x="21" y="0" width="1" height="1" fill="#6a6a6a"/><rect x="24" y="0" width="1" height="1" fill="#6a6a6a"/><rect x="27" y="0" width="1" height="1" fill="#6a6a6a"/><rect x="30" y="0" width="1" height="1" fill="#6a6a6a"/><rect x="33" y="0" width="1" height="1" fill="#6a6a6a"/><rect x="36" y="0" width="1" height="1" fill="#6a6a6a"/><rect x="39" y="0" width="1" height="1" fill="#6a6a6a"/></svg>
<svg class="a" style="left:1463px;top:277px;" width="29" height="29" viewBox="0 0 29 29"><rect x="0.5" y="0.5" width="28" height="28" fill="#fff" stroke="#333" stroke-width="1"/><rect x="0" y="0" width="29" height="5" fill="#000"/><rect x="1.5" y="1.3" width="3" height="2.6" fill="#fff"/><rect x="5" y="9" width="4" height="3" fill="#111"/><rect x="11" y="9" width="13" height="3" fill="none" stroke="#333" stroke-width="0.7"/><rect x="5" y="15" width="4" height="3" fill="#111"/><rect x="11" y="15" width="13" height="3" fill="none" stroke="#333" stroke-width="0.7"/><rect x="5" y="21" width="4" height="3" fill="#111"/><rect x="11" y="21" width="13" height="3" fill="none" stroke="#333" stroke-width="0.7"/></svg>
<svg class="a" style="left:1463px;top:323px;" width="29" height="29" viewBox="0 0 29 29"><rect x="0.5" y="0.5" width="28" height="28" fill="#fff" stroke="#333" stroke-width="1"/><rect x="0" y="0" width="29" height="5" fill="#000"/><rect x="1.5" y="1.3" width="3" height="2.6" fill="#fff"/><path d="M7 10 L22 10 L16 17 L16 25 L13 23 L13 17 Z" fill="#c8c8c8" stroke="#555" stroke-width="0.8"/></svg>
<svg class="a" style="left:1463px;top:369px;" width="29" height="29" viewBox="0 0 29 29"><rect x="0.5" y="0.5" width="28" height="28" fill="#fff" stroke="#333" stroke-width="1"/><rect x="0" y="0" width="29" height="5" fill="#000"/><rect x="1.5" y="1.3" width="3" height="2.6" fill="#fff"/><path d="M7 9 L7 24 L13 19 L20 19 L20 13 L13 13 Z" fill="#f0f0f0" stroke="#555" stroke-width="0.8"/><path d="M3 16 L26 16" stroke="#e06060" stroke-width="0.6" stroke-dasharray="1.5 1"/><rect x="14" y="13" width="7" height="6" fill="#a8a8a8"/></svg>
<svg class="a" style="left:1458px;top:410px;" width="42" height="2" viewBox="0 0 42 2"><rect x="0" y="0" width="1" height="1" fill="#6a6a6a"/><rect x="3" y="0" width="1" height="1" fill="#6a6a6a"/><rect x="6" y="0" width="1" height="1" fill="#6a6a6a"/><rect x="9" y="0" width="1" height="1" fill="#6a6a6a"/><rect x="12" y="0" width="1" height="1" fill="#6a6a6a"/><rect x="15" y="0" width="1" height="1" fill="#6a6a6a"/><rect x="18" y="0" width="1" height="1" fill="#6a6a6a"/><rect x="21" y="0" width="1" height="1" fill="#6a6a6a"/><rect x="24" y="0" width="1" height="1" fill="#6a6a6a"/><rect x="27" y="0" width="1" height="1" fill="#6a6a6a"/><rect x="30" y="0" width="1" height="1" fill="#6a6a6a"/><rect x="33" y="0" width="1" height="1" fill="#6a6a6a"/><rect x="36" y="0" width="1" height="1" fill="#6a6a6a"/><rect x="39" y="0" width="1" height="1" fill="#6a6a6a"/></svg>
<div class="a" style="left:1456px;top:418px;width:48px;height:42px;border-radius:7px;background:#b9b9b9"></div>
<svg class="a" style="left:1463px;top:425px;" width="29" height="29" viewBox="0 0 29 29"><rect x="0.5" y="0.5" width="28" height="28" fill="#fff" stroke="#333" stroke-width="1"/><rect x="0" y="0" width="29" height="5" fill="#000"/><rect x="1.5" y="1.3" width="3" height="2.6" fill="#fff"/><path d="M4 9 L22 9 M4 12 L20 12 M4 15 L21 15 M4 18 L19 18" stroke="#999" stroke-width="0.7"/><rect x="1" y="22" width="27" height="6" fill="#fff" stroke="#333" stroke-width="0.6"/><path d="M3 25 L7 25 M11 25 L24 25" stroke="#555" stroke-width="0.6"/></svg>
<svg class="a" style="left:1463px;top:472px;" width="29" height="29" viewBox="0 0 29 29"><rect x="0.5" y="0.5" width="28" height="28" fill="#fff" stroke="#333" stroke-width="1"/><rect x="0" y="0" width="29" height="5" fill="#000"/><rect x="1.5" y="1.3" width="3" height="2.6" fill="#fff"/><rect x="8" y="9" width="13" height="16" rx="1" fill="#b8822a"/><rect x="10" y="11" width="9" height="12" fill="#f4f4f4"/><rect x="11.5" y="8" width="6" height="3" fill="#888"/></svg>
<div id="status" class="a"></div>
<div class="st" style="left:2px;top:807px">47.0937,12.7851</div>
<div class="st" style="left:2px;top:827px">@47.0937,12.7851</div>
<div class="a" style="left:253px;top:802px;width:1px;height:40px;background:#8a8a8a"></div>
<div class="st" style="left:256px;top:807px">48.7984&lt;15°</div>
<div class="st" style="left:256px;top:827px">@48.7984&lt;15°</div>
<div class="a" style="left:506px;top:819px;width:6px;height:6px;border-radius:50%;background:#c4c4c4"></div>
<svg class="a" style="left:717px;top:805px;" width="20" height="32" viewBox="0 0 20 32"><path d="M9.5 1.5 C 3 1.5, 1.5 6, 1.5 12 L1.5 22 C 1.5 28, 4 30.5, 9.5 30.5 C 15 30.5, 17.5 28, 17.5 22 L17.5 12 C 17.5 6, 16 1.5, 9.5 1.5 Z" fill="#fff" stroke="#222" stroke-width="1"/><path d="M1.5 13 L17.5 13" stroke="#222" stroke-width="1"/><rect x="8" y="4" width="3" height="8" rx="1.5" fill="#fff" stroke="#222" stroke-width="0.9"/></svg>
<div class="a" style="left:940px;top:819px;width:6px;height:6px;border-radius:50%;background:#c4c4c4"></div>
<div class="st" style="left:949px;top:817px">No hay entidades seleccionadas.</div>
<div class="a" style="left:1269px;top:819px;width:6px;height:6px;border-radius:50%;background:#c4c4c4"></div>
</body></html>
